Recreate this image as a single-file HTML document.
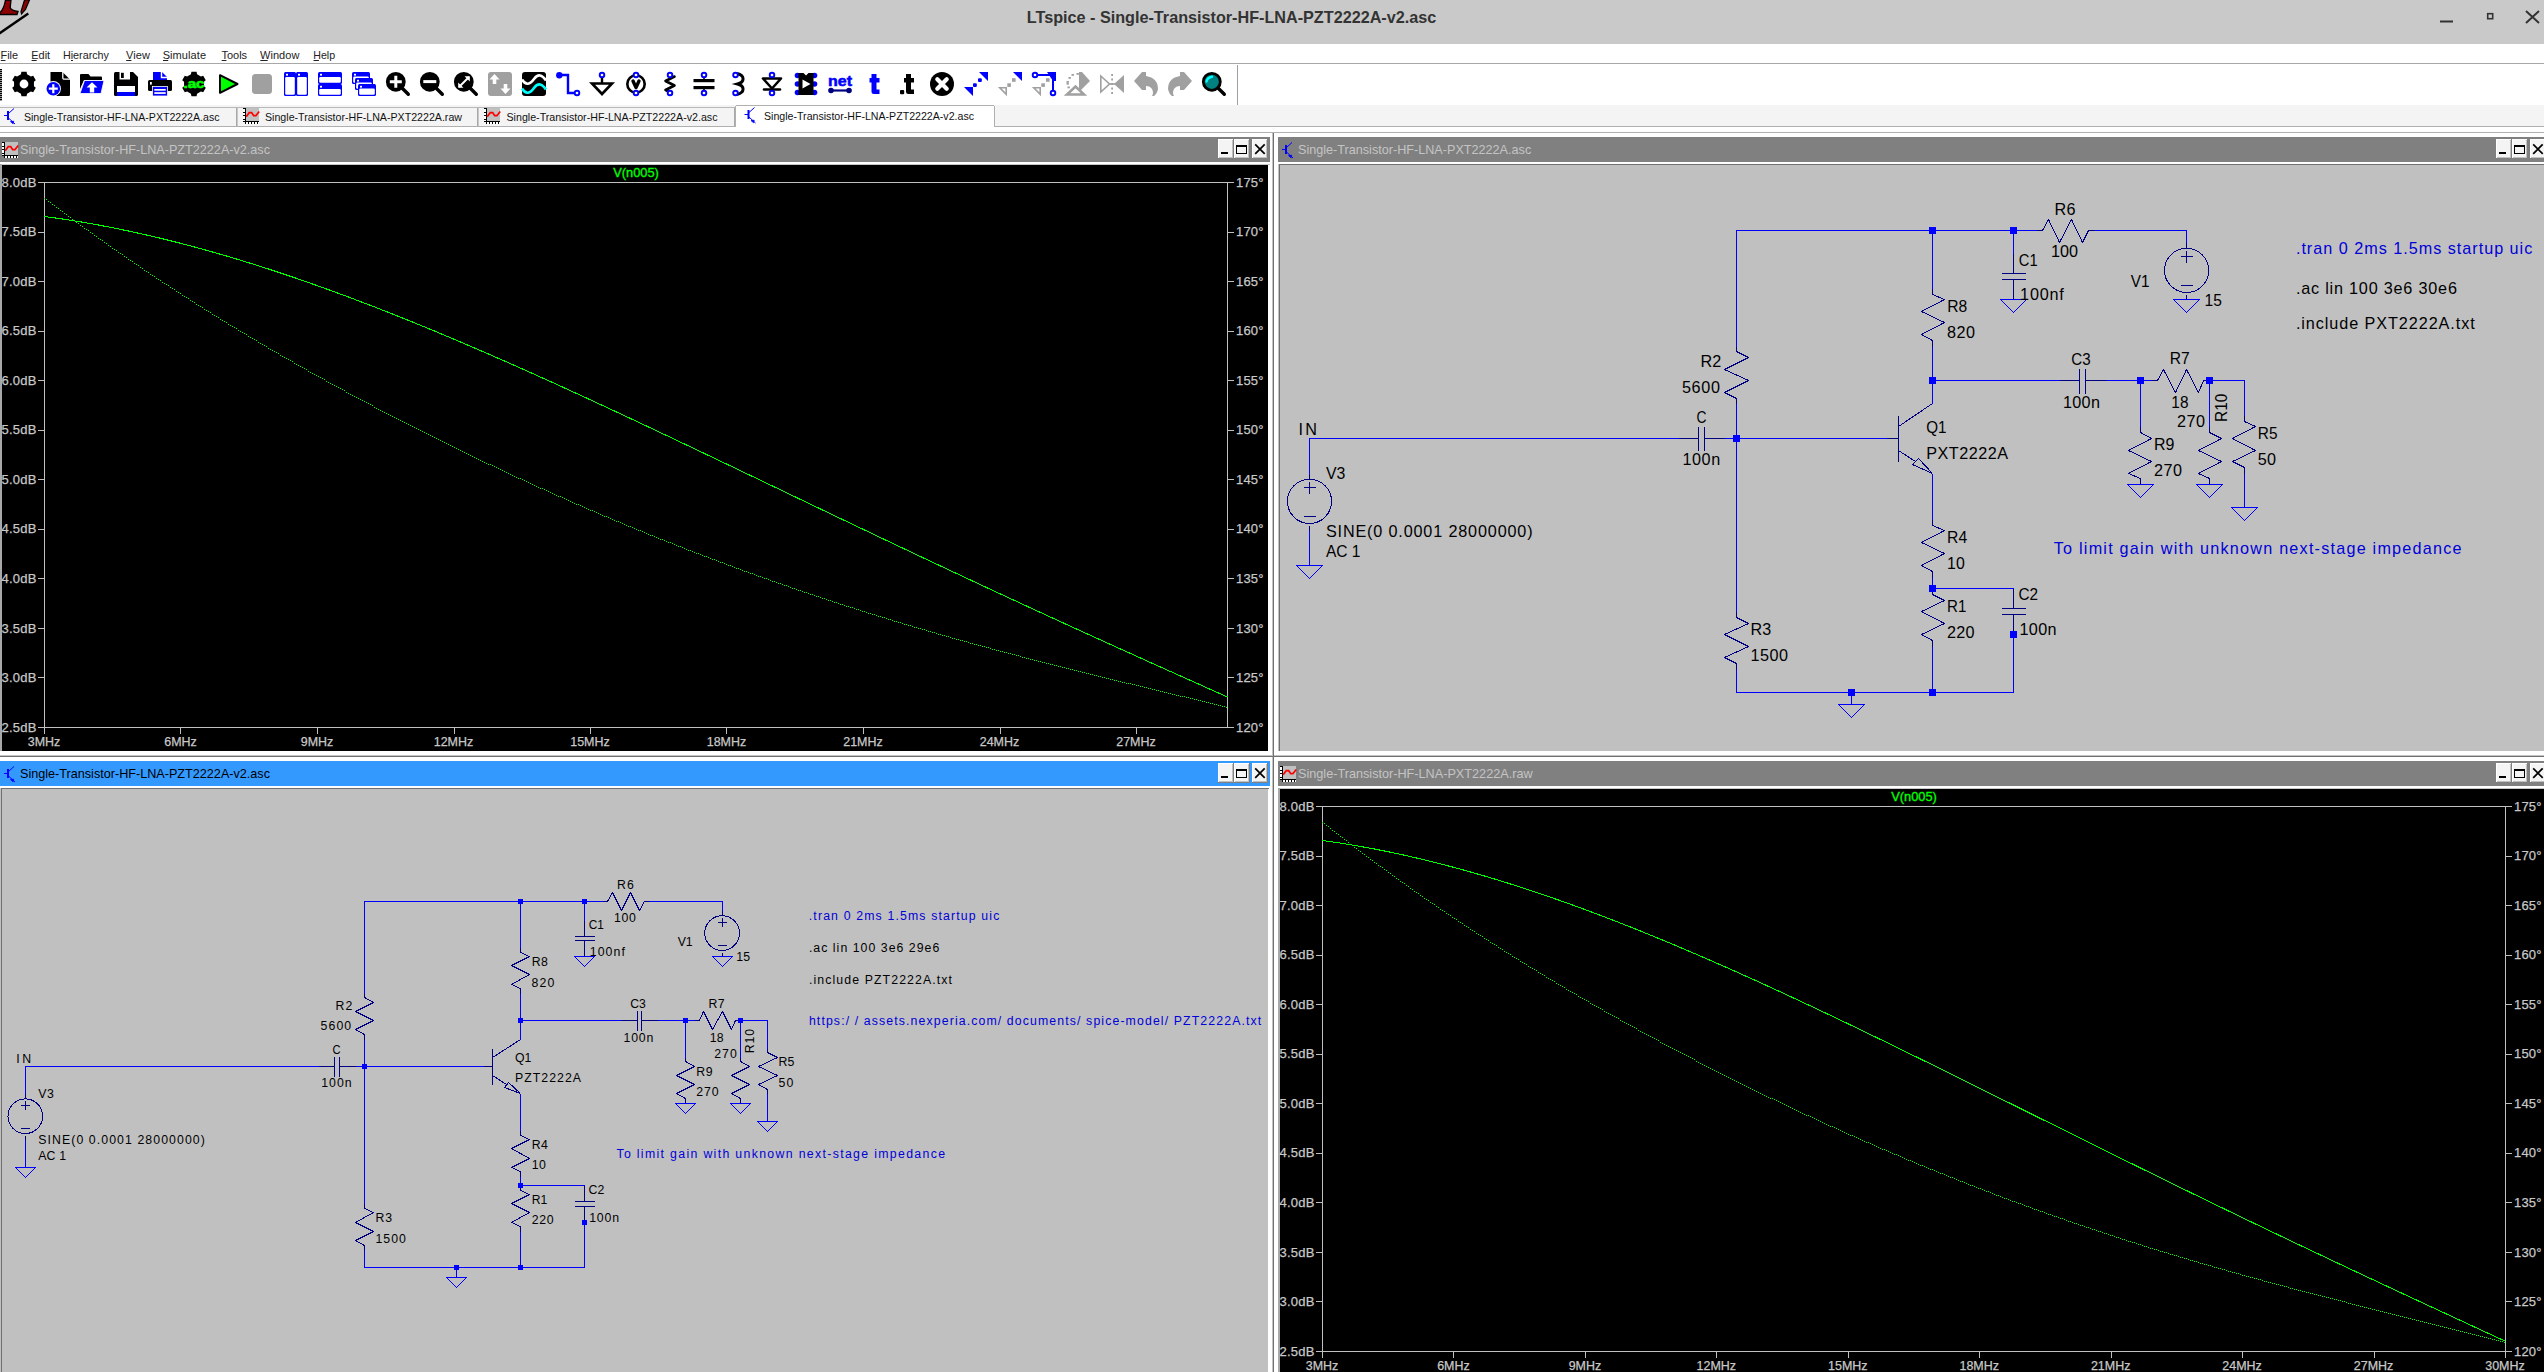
<!DOCTYPE html>
<html><head><meta charset="utf-8"><title>LTspice</title>
<style>
html,body{margin:0;padding:0;background:#fff;overflow:hidden}
body{width:2544px;height:1372px}
svg{display:block;font-family:"Liberation Sans",sans-serif}
text{white-space:pre}
</style></head><body>
<svg width="2544" height="1372" viewBox="0 0 2544 1372">
<rect x="0" y="0" width="2544" height="44" fill="#c9c9c9"/>
<path d="M5.5 0L11 0L10.2 7.5Q11 10.5 18 11.5L17 14.5H0V12.5Q4 9 5.5 0Z" fill="#8b0000" stroke="#000" stroke-width="1.3"/>
<path d="M24.5 0L29.5 0L25.5 9.5L21.5 14L21 11.5Z" fill="#8b0000" stroke="#000" stroke-width="1.2"/>
<path d="M28.3 13.4L-3 35" fill="none" stroke="#000" stroke-width="2.4"/>
<text x="1231.50" y="22.60" font-size="16.2" fill="#333" text-anchor="middle" font-weight="bold" textLength="409.40" lengthAdjust="spacingAndGlyphs">LTspice - Single-Transistor-HF-LNA-PZT2222A-v2.asc</text>
<rect x="2440" y="20.5" width="13" height="2" fill="#333"/>
<rect x="2487.7" y="13.7" width="5" height="5" fill="none" stroke="#333" stroke-width="1.6"/>
<path d="M2526 11L2539 23M2539 11L2526 23" stroke="#333" stroke-width="2" fill="none"/>
<rect x="0" y="44" width="2544" height="19" fill="#fff"/>
<rect x="0" y="63" width="2544" height="1" fill="#a8a8a8"/>
<text x="0.50" y="58.90" font-size="11" fill="#222" textLength="17.60" lengthAdjust="spacingAndGlyphs">File</text>
<rect x="0.8" y="60" width="4.67018" height="1" fill="#222"/>
<text x="31.30" y="58.90" font-size="11" fill="#222" textLength="18.80" lengthAdjust="spacingAndGlyphs">Edit</text>
<rect x="31.6" y="60" width="5.09431" height="1" fill="#222"/>
<text x="62.90" y="58.90" font-size="11" fill="#222" textLength="46.10" lengthAdjust="spacingAndGlyphs">Hierarchy</text>
<rect x="70.9813" y="60" width="2" height="1" fill="#222"/>
<text x="125.90" y="58.90" font-size="11" fill="#222" textLength="24.00" lengthAdjust="spacing">View</text>
<rect x="126.2" y="60" width="5.21367" height="1" fill="#222"/>
<text x="162.70" y="58.90" font-size="11" fill="#222" textLength="43.30" lengthAdjust="spacing">Simulate</text>
<rect x="163" y="60" width="5.19673" height="1" fill="#222"/>
<text x="221.40" y="58.90" font-size="11" fill="#222" textLength="25.70" lengthAdjust="spacing">Tools</text>
<rect x="221.7" y="60" width="4.70702" height="1" fill="#222"/>
<text x="260.00" y="58.90" font-size="11" fill="#222" textLength="39.40" lengthAdjust="spacing">Window</text>
<rect x="260.3" y="60" width="7.31969" height="1" fill="#222"/>
<text x="313.20" y="58.90" font-size="11" fill="#222" textLength="21.90" lengthAdjust="spacingAndGlyphs">Help</text>
<rect x="313.5" y="60" width="5.38332" height="1" fill="#222"/>
<rect x="0" y="64" width="2544" height="41" fill="#fff"/>
<rect x="0" y="69" width="2" height="1" fill="#000"/>
<rect x="0" y="70" width="2" height="1" fill="#999"/>
<rect x="0" y="71" width="2" height="1" fill="#000"/>
<rect x="0" y="72" width="2" height="1" fill="#999"/>
<rect x="0" y="73" width="2" height="1" fill="#000"/>
<rect x="0" y="74" width="2" height="1" fill="#999"/>
<rect x="0" y="75" width="2" height="1" fill="#000"/>
<rect x="0" y="76" width="2" height="1" fill="#999"/>
<rect x="0" y="77" width="2" height="1" fill="#000"/>
<rect x="0" y="78" width="2" height="1" fill="#999"/>
<rect x="0" y="79" width="2" height="1" fill="#000"/>
<rect x="0" y="80" width="2" height="1" fill="#999"/>
<rect x="0" y="81" width="2" height="1" fill="#000"/>
<rect x="0" y="82" width="2" height="1" fill="#999"/>
<rect x="0" y="83" width="2" height="1" fill="#000"/>
<rect x="0" y="84" width="2" height="1" fill="#999"/>
<rect x="0" y="85" width="2" height="1" fill="#000"/>
<rect x="0" y="86" width="2" height="1" fill="#999"/>
<rect x="0" y="87" width="2" height="1" fill="#000"/>
<rect x="0" y="88" width="2" height="1" fill="#999"/>
<rect x="0" y="89" width="2" height="1" fill="#000"/>
<rect x="0" y="90" width="2" height="1" fill="#999"/>
<rect x="0" y="91" width="2" height="1" fill="#000"/>
<rect x="0" y="92" width="2" height="1" fill="#999"/>
<rect x="0" y="93" width="2" height="1" fill="#000"/>
<rect x="0" y="94" width="2" height="1" fill="#999"/>
<rect x="0" y="95" width="2" height="1" fill="#000"/>
<rect x="0" y="96" width="2" height="1" fill="#999"/>
<rect x="0" y="97" width="2" height="1" fill="#000"/>
<rect x="0" y="98" width="2" height="1" fill="#999"/>
<rect x="0" y="99" width="2" height="1" fill="#000"/>
<rect x="0" y="100" width="2" height="1" fill="#999"/>
<rect x="1237" y="65" width="1" height="40" fill="#a0a0a0"/>
<rect x="0" y="105" width="2544" height="22" fill="#f4f4f4"/>
<rect x="0" y="126" width="2544" height="1" fill="#b0b0b0"/>
<rect x="0" y="127" width="2544" height="5" fill="#fff"/>
<rect x="0" y="107" width="735" height="1" fill="#b8b8b8"/>
<rect x="236" y="108" width="1" height="18" fill="#a8a8a8"/>
<rect x="237" y="108" width="1" height="18" fill="#c8c8c8"/>
<rect x="477" y="108" width="1" height="18" fill="#a8a8a8"/>
<rect x="478" y="108" width="1" height="18" fill="#c8c8c8"/>
<rect x="734" y="108" width="1" height="18" fill="#a8a8a8"/>
<rect x="735" y="108" width="1" height="18" fill="#c8c8c8"/>
<rect x="735" y="106" width="259" height="21" fill="#fff"/>
<rect x="736" y="105" width="258" height="1" fill="#b0b0b0"/>
<rect x="735" y="106" width="1" height="21" fill="#b0b0b0"/>
<rect x="994" y="106" width="1" height="21" fill="#b0b0b0"/>
<g transform="translate(3.5,108)" stroke="#00f" fill="none" stroke-width="1"><path d="M0.5 7.5H4"/><path d="M4.5 3V12" stroke-width="2"/><path d="M5 5.5L10.5 0.5"/><path d="M5 10L11.5 16"/><path d="M7 13.6L10.2 13.2L9.6 15.8Z" fill="#00f" stroke-width="0.8"/></g>
<text x="23.90" y="120.70" font-size="11" fill="#111" textLength="195.60" lengthAdjust="spacingAndGlyphs">Single-Transistor-HF-LNA-PXT2222A.asc</text>
<g transform="translate(243,108)" shape-rendering="crispEdges"><rect x="3" y="0" width="13" height="13" fill="#c0c0c0"/><rect x="0" y="0" width="2" height="13" fill="#fff"/><rect x="3" y="14" width="13" height="2" fill="#fff"/><rect x="2" y="0" width="1" height="14" fill="#000"/><rect x="0" y="13" width="16" height="1" fill="#000"/><rect x="0" y="0" width="2" height="1" fill="#000"/><rect x="0" y="4" width="2" height="1" fill="#000"/><rect x="0" y="7" width="2" height="1" fill="#000"/><rect x="0" y="11" width="2" height="1" fill="#000"/><rect x="2" y="14" width="1" height="2" fill="#000"/><rect x="5" y="14" width="1" height="2" fill="#000"/><rect x="8" y="14" width="1" height="2" fill="#000"/><rect x="11" y="14" width="1" height="2" fill="#000"/><rect x="14" y="14" width="1" height="2" fill="#000"/></g><path d="M246.2 116.7l3-4h2.5l2 3h2.2l3.3-4.3" fill="none" stroke="#f00" stroke-width="1.7"/>
<text x="265.00" y="120.70" font-size="11" fill="#111" textLength="197.00" lengthAdjust="spacingAndGlyphs">Single-Transistor-HF-LNA-PXT2222A.raw</text>
<g transform="translate(484,108)" shape-rendering="crispEdges"><rect x="3" y="0" width="13" height="13" fill="#c0c0c0"/><rect x="0" y="0" width="2" height="13" fill="#fff"/><rect x="3" y="14" width="13" height="2" fill="#fff"/><rect x="2" y="0" width="1" height="14" fill="#000"/><rect x="0" y="13" width="16" height="1" fill="#000"/><rect x="0" y="0" width="2" height="1" fill="#000"/><rect x="0" y="4" width="2" height="1" fill="#000"/><rect x="0" y="7" width="2" height="1" fill="#000"/><rect x="0" y="11" width="2" height="1" fill="#000"/><rect x="2" y="14" width="1" height="2" fill="#000"/><rect x="5" y="14" width="1" height="2" fill="#000"/><rect x="8" y="14" width="1" height="2" fill="#000"/><rect x="11" y="14" width="1" height="2" fill="#000"/><rect x="14" y="14" width="1" height="2" fill="#000"/></g><path d="M487.2 116.7l3-4h2.5l2 3h2.2l3.3-4.3" fill="none" stroke="#f00" stroke-width="1.7"/>
<text x="506.50" y="120.70" font-size="11" fill="#111" textLength="211.00" lengthAdjust="spacingAndGlyphs">Single-Transistor-HF-LNA-PZT2222A-v2.asc</text>
<g transform="translate(744,107)" stroke="#00f" fill="none" stroke-width="1"><path d="M0.5 7.5H4"/><path d="M4.5 3V12" stroke-width="2"/><path d="M5 5.5L10.5 0.5"/><path d="M5 10L11.5 16"/><path d="M7 13.6L10.2 13.2L9.6 15.8Z" fill="#00f" stroke-width="0.8"/></g>
<text x="764.00" y="119.60" font-size="11" fill="#111" textLength="210.00" lengthAdjust="spacingAndGlyphs">Single-Transistor-HF-LNA-PZT2222A-v2.asc</text>
<g transform="translate(12,72)"><path d="M8.95 2.27 L9.42 -0.13 L14.58 -0.13 L15.05 2.27 L18.90 4.49 L21.21 3.70 L23.79 8.17 L21.95 9.77 L21.95 14.23 L23.79 15.83 L21.21 20.30 L18.90 19.51 L15.05 21.73 L14.58 24.13 L9.42 24.13 L8.95 21.73 L5.10 19.51 L2.79 20.30 L0.21 15.83 L2.05 14.23 L2.05 9.77 L0.21 8.17 L2.79 3.70 L5.10 4.49Z M7.60 12.00 a4.40 4.40 0 1 0 8.80 0 a4.40 4.40 0 1 0 -8.80 0Z" fill="#000" fill-rule="evenodd"/></g>
<g transform="translate(46,72)"><path d="M4.5 0H16.5L24 7.5V22.5Q24 24 22.5 24H11Q4.5 20 4.5 13Z" fill="#000"/><path d="M16.8 0V5.7Q16.8 7.2 18.3 7.2H24" fill="none" stroke="#fff" stroke-width="1.3"/><circle cx="7.3" cy="16.7" r="7.6" fill="#fff"/><circle cx="7.3" cy="16.7" r="6.8" fill="#0000ff"/><path d="M7.3 12.2V21.2M2.8 16.7H11.8" stroke="#fff" stroke-width="2.2"/></g>
<g transform="translate(80,72)"><path d="M0 3Q0 2 1 2H8.5L10.5 4.5H21Q22 4.5 22 5.5V8H4L0 17Z" fill="#000"/><path d="M4.5 8.5H24L21 21.5H0Z" fill="#0000ff" stroke="#fff" stroke-width="0.8"/><path d="M12 10.2L17.5 15.5H14.2V20.5H9.8V15.5H6.5Z" fill="#fff"/></g>
<g transform="translate(114,72)"><path d="M1.5 0H19L24 5V22.5Q24 24 22.5 24H1.5Q0 24 0 22.5V1.5Q0 0 1.5 0Z" fill="#000"/><rect x="5.5" y="0" width="10.5" height="7.5" fill="#fff"/><rect x="7" y="0.8" width="2.8" height="5.2" fill="#000"/><rect x="3" y="14" width="18" height="10" fill="#fff"/><rect x="3" y="20" width="18" height="4" fill="#0000ff"/></g>
<g transform="translate(148,72)"><path d="M5 0H14L19 5V8H5Z" fill="#0000ff"/><path d="M13.5 0V5.5H19" fill="none" stroke="#fff" stroke-width="1.4"/><path d="M1.5 8H22.5Q24 8 24 9.5V17.5Q24 19 22.5 19H1.5Q0 19 0 17.5V9.5Q0 8 1.5 8Z" fill="#000"/><rect x="2" y="10" width="1.8" height="2.6" fill="#fff"/><rect x="4.5" y="14.5" width="15" height="9.5" fill="#0000ff" stroke="#fff" stroke-width="0.8"/><rect x="6.3" y="17" width="11.4" height="1.7" fill="#fff"/><rect x="6.3" y="20.2" width="11.4" height="1.7" fill="#fff"/></g>
<g transform="translate(182,72)"><path d="M8.95 2.27 L9.42 -0.13 L14.58 -0.13 L15.05 2.27 L18.90 4.49 L21.21 3.70 L23.79 8.17 L21.95 9.77 L21.95 14.23 L23.79 15.83 L21.21 20.30 L18.90 19.51 L15.05 21.73 L14.58 24.13 L9.42 24.13 L8.95 21.73 L5.10 19.51 L2.79 20.30 L0.21 15.83 L2.05 14.23 L2.05 9.77 L0.21 8.17 L2.79 3.70 L5.10 4.49Z" fill="#000"/><text x="12" y="16" font-size="12.5" font-weight="bold" fill="#0f0" text-anchor="middle" textLength="21" lengthAdjust="spacingAndGlyphs" stroke="#0f0" stroke-width="0.6">.ac</text></g>
<g transform="translate(216,72)"><path d="M4 3.2L21.5 12L4 20.8Z" fill="#0f0" stroke="#000" stroke-width="2" stroke-linejoin="round"/></g>
<g transform="translate(250,72)"><rect x="2" y="2" width="20" height="20" rx="3.5" fill="#a0a0a0"/></g>
<g transform="translate(284,72)"><rect x="0" y="0" width="12" height="24" fill="#0000ff" rx="1.5"/><rect x="1.2" y="5" width="9.6" height="17.8" fill="#fff" rx="1.2"/><rect x="2" y="1.8" width="2" height="1.8" fill="#fff"/><rect x="12" y="0" width="12" height="24" fill="#0000ff" rx="1.5"/><rect x="13.2" y="5" width="9.6" height="17.8" fill="#fff" rx="1.2"/><rect x="14" y="1.8" width="2" height="1.8" fill="#fff"/></g>
<g transform="translate(318,72)"><rect x="0" y="0" width="24" height="12" fill="#0000ff" rx="1.5"/><rect x="1.2" y="5" width="21.6" height="5.8" fill="#fff" rx="1.2"/><rect x="2" y="1.8" width="2" height="1.8" fill="#fff"/><rect x="0" y="12" width="24" height="12" fill="#0000ff" rx="1.5"/><rect x="1.2" y="17" width="21.6" height="5.8" fill="#fff" rx="1.2"/><rect x="2" y="13.8" width="2" height="1.8" fill="#fff"/></g>
<g transform="translate(352,72)"><rect x="0" y="0" width="18" height="12" fill="#0000ff" rx="1.5"/><rect x="1.2" y="4.5" width="15.6" height="6.3" fill="#fff" rx="1.2"/><rect x="2" y="1.8" width="2" height="1.8" fill="#fff"/><rect x="3" y="6" width="18" height="12" fill="#0000ff" rx="1.5"/><rect x="4.2" y="10.5" width="15.6" height="6.3" fill="#fff" rx="1.2"/><rect x="5" y="7.8" width="2" height="1.8" fill="#fff"/><rect x="6" y="12" width="18" height="12" fill="#0000ff" rx="1.5"/><rect x="7.2" y="16.5" width="15.6" height="6.3" fill="#fff" rx="1.2"/><rect x="8" y="13.8" width="2" height="1.8" fill="#fff"/></g>
<g transform="translate(386,72)"><circle cx="9.8" cy="9.8" r="8.5" fill="#000" stroke="#000" stroke-width="2.8"/><path d="M16 16L22.3 22.3" stroke="#000" stroke-width="3.4" stroke-linecap="round"/><path d="M9.8 3.8V15.8M3.8 9.8H15.8" stroke="#fff" stroke-width="3"/></g>
<g transform="translate(420,72)"><circle cx="9.8" cy="9.8" r="8.5" fill="#000" stroke="#000" stroke-width="2.8"/><path d="M16 16L22.3 22.3" stroke="#000" stroke-width="3.4" stroke-linecap="round"/><path d="M3.3 9.6H16.3" stroke="#fff" stroke-width="3"/></g>
<g transform="translate(454,72)"><circle cx="9.8" cy="9.8" r="8.5" fill="#000" stroke="#000" stroke-width="2.8"/><path d="M16 16L22.3 22.3" stroke="#000" stroke-width="3.4" stroke-linecap="round"/><path d="M5 15L15 5" stroke="#fff" stroke-width="2"/><path d="M10.5 4.2H15.8V9.5Z M4.2 10.5V15.8H9.5Z" fill="#fff"/></g>
<g transform="translate(488,72)"><rect x="0" y="0" width="24" height="24" rx="3" fill="#a0a0a0"/><path d="M6.5 2L11.5 7.5H8.3V12H4.7V7.5H1.5Z M17.5 22L22.5 16.5H19.3V12H15.7V16.5H12.5Z" fill="#fff"/></g>
<g transform="translate(522,72)"><rect x="0" y="0" width="24" height="24" rx="3" fill="#000"/><path d="M0 7.5C4 14 8 12.5 12 7 16 1.5 20 2.5 24 8.5" fill="none" stroke="#fff" stroke-width="2.6"/><path d="M0 16.5C4 23 8 21.5 12 16 16 10.5 20 11.5 24 17.5" fill="none" stroke="#0ff" stroke-width="2.6"/></g>
<g transform="translate(556,72)"><path d="M3 3H12V21H21" fill="none" stroke="#0000ff" stroke-width="2.4"/><circle cx="3.3" cy="3.3" r="3.2" fill="#0000ff"/><circle cx="21" cy="21" r="2.3" fill="#fff" stroke="#0000ff" stroke-width="1.9"/></g>
<g transform="translate(590,72)"><path d="M12 5V11" stroke="#000" stroke-width="2.4"/><path d="M2 11.5H22L12 22Z" fill="none" stroke="#000" stroke-width="2.6" stroke-linejoin="miter"/><circle cx="12" cy="3" r="2.3" fill="#fff" stroke="#0000ff" stroke-width="1.9"/></g>
<g transform="translate(624,72)"><circle cx="12" cy="12" r="8.7" fill="none" stroke="#000" stroke-width="2.6"/><path d="M9 9L12 15.5L15 9" fill="none" stroke="#000" stroke-width="3.4" stroke-linejoin="round" stroke-linecap="round"/><circle cx="12" cy="3" r="2.3" fill="#fff" stroke="#0000ff" stroke-width="1.9"/><circle cx="12" cy="21" r="2.3" fill="#fff" stroke="#0000ff" stroke-width="1.9"/></g>
<g transform="translate(658,72)"><path d="M16.5 4.5L7.5 9L16.5 13.5L7.5 18L12 20" fill="none" stroke="#000" stroke-width="2.6" stroke-linecap="round" stroke-linejoin="round"/><circle cx="12" cy="3" r="2.3" fill="#fff" stroke="#0000ff" stroke-width="1.9"/><circle cx="12" cy="21" r="2.3" fill="#fff" stroke="#0000ff" stroke-width="1.9"/></g>
<g transform="translate(692,72)"><path d="M12 5V8M12 16V19" stroke="#000" stroke-width="1.6"/><rect x="1.5" y="7" width="21" height="3.2" fill="#000"/><rect x="1.5" y="14" width="21" height="3.2" fill="#000"/><circle cx="12" cy="3" r="2.3" fill="#fff" stroke="#0000ff" stroke-width="1.9"/><circle cx="12" cy="21" r="2.3" fill="#fff" stroke="#0000ff" stroke-width="1.9"/></g>
<g transform="translate(726,72)"><path d="M11 1.5C19 3.5 19 10 11.5 12C19 14 19 20.5 11 22.5" fill="none" stroke="#000" stroke-width="3"/><circle cx="9.5" cy="3" r="2.3" fill="#fff" stroke="#0000ff" stroke-width="1.9"/><circle cx="9.5" cy="21" r="2.3" fill="#fff" stroke="#0000ff" stroke-width="1.9"/></g>
<g transform="translate(760,72)"><path d="M3 6.5H21L12 16.5Z" fill="none" stroke="#000" stroke-width="2.6" stroke-linejoin="round"/><path d="M4 17.5H20" stroke="#000" stroke-width="2.6" stroke-linecap="round"/><circle cx="12" cy="3" r="2.3" fill="#fff" stroke="#0000ff" stroke-width="1.9"/><circle cx="12" cy="21" r="2.3" fill="#fff" stroke="#0000ff" stroke-width="1.9"/></g>
<g transform="translate(794,72)"><circle cx="3.5" cy="3.5" r="2.8" fill="#0000ff"/><circle cx="3.5" cy="12" r="2.8" fill="#0000ff"/><circle cx="3.5" cy="20.5" r="2.8" fill="#0000ff"/><circle cx="20.5" cy="3.5" r="2.8" fill="#0000ff"/><circle cx="20.5" cy="12" r="2.8" fill="#0000ff"/><circle cx="20.5" cy="20.5" r="2.8" fill="#0000ff"/><path d="M4.5 1H9.5L12 3.5L14.5 1H19.5V23H4.5Z" fill="#000"/><path d="M8.5 7.5L16.5 12L8.5 16.5Z" fill="#fff"/></g>
<g transform="translate(828,72)"><text x="12" y="13.5" font-size="14" font-weight="bold" fill="#0000ff" text-anchor="middle" textLength="24" lengthAdjust="spacingAndGlyphs" stroke="#00f" stroke-width="0.5">net</text><path d="M3 18.5H21" stroke="#000080" stroke-width="2.2"/><circle cx="3" cy="18.5" r="2.8" fill="#000080"/><circle cx="21" cy="18.5" r="2.8" fill="#000080"/></g>
<g transform="translate(862,72)"><path d="M9.5 2H14.5V6H17.5V10.5H14.5V17.5H17.5V22H12Q9.5 22 9.5 19.5V10.5H7.5V6H9.5Z" fill="#0000ff"/></g>
<g transform="translate(896,72)"><path d="M10 2H15V6H18V10.5H15V17.5H18V22H12.5Q10 22 10 19.5V10.5H8V6H10Z" fill="#000"/><rect x="4" y="18" width="4.2" height="4.2" rx="1" fill="#000"/></g>
<g transform="translate(930,72)"><circle cx="12" cy="12" r="12" fill="#000"/><path d="M7.3 7.3L16.7 16.7M16.7 7.3L7.3 16.7" stroke="#fff" stroke-width="4.2" stroke-linecap="round"/></g>
<g transform="translate(964,72)"><path d="M15 0H24V9Z M0 15H9V24Z" fill="#0000ff"/><rect x="14" y="6.2" width="3.8" height="3.8" rx="1" fill="#0000ff"/><rect x="9" y="11.2" width="3.8" height="3.8" rx="1" fill="#0000ff"/></g>
<g transform="translate(998,72)"><path d="M15 0H24V9Z" fill="#0000ff"/><rect x="14" y="6.2" width="3.6" height="3.6" fill="#a0a0a0"/><rect x="9.3" y="11.3" width="3.6" height="3.6" fill="#a0a0a0"/><path d="M1.8 15.8H8.2V22.2Z" fill="none" stroke="#a0a0a0" stroke-width="1.6"/></g>
<g transform="translate(1032,72)"><path d="M3 3H21V21" fill="none" stroke="#0000ff" stroke-width="2"/><path d="M15 0H24V9H21Z" fill="#0000ff"/><rect x="14" y="6.2" width="3.6" height="3.6" fill="#a0a0a0"/><rect x="9.3" y="11.3" width="3.6" height="3.6" fill="#a0a0a0"/><path d="M1.8 15.8H8.2V22.2Z" fill="none" stroke="#a0a0a0" stroke-width="1.6"/><circle cx="3" cy="3" r="2.3" fill="#fff" stroke="#0000ff" stroke-width="1.9"/><circle cx="21" cy="21" r="2.3" fill="#fff" stroke="#0000ff" stroke-width="1.9"/></g>
<g transform="translate(1066,72)"><path d="M13 0H16L24 9L15 18H13Z" fill="#a0a0a0"/><path d="M1 22.5H18L9.5 14.5Z" fill="none" stroke="#a0a0a0" stroke-width="2.6"/><rect x="10.5" y="1" width="2.4" height="1.8" fill="#a0a0a0"/><rect x="5.5" y="2" width="2.4" height="1.8" fill="#a0a0a0"/><rect x="2.5" y="5" width="2.4" height="1.8" fill="#a0a0a0"/><rect x="0.5" y="9" width="2.4" height="1.8" fill="#a0a0a0"/><rect x="0.5" y="10.8" width="2.4" height="1.8" fill="#a0a0a0"/><rect x="1.5" y="14.5" width="2.4" height="1.8" fill="#a0a0a0"/></g>
<g transform="translate(1100,72)"><path d="M0.8 4L9.5 12L0.8 20Z" fill="none" stroke="#a0a0a0" stroke-width="1.6"/><path d="M24 3V21L14 12Z" fill="#a0a0a0"/><path d="M9 12H15" stroke="#a0a0a0" stroke-width="1.6"/><rect x="11.2" y="2" width="1.8" height="2" fill="#a0a0a0"/><rect x="11.2" y="6.5" width="1.8" height="2" fill="#a0a0a0"/><rect x="11.2" y="11" width="1.8" height="2" fill="#a0a0a0"/><rect x="11.2" y="15.5" width="1.8" height="2" fill="#a0a0a0"/><rect x="11.2" y="20" width="1.8" height="2" fill="#a0a0a0"/></g>
<g transform="translate(1134,72)"><path d="M8 0H12V4Q24 6 24 17Q23 22 20 24H18Q20 21 18 17Q16 14 12 14V18H8L0 9Z" fill="#a0a0a0"/></g>
<g transform="translate(1168,72)"><path d="M16 0H12V4Q0 6 0 17Q1 22 4 24H6Q4 21 6 17Q8 14 12 14V18H16L24 9Z" fill="#a0a0a0"/></g>
<g transform="translate(1202,72)"><circle cx="9.8" cy="9.8" r="8.5" fill="#008080" stroke="#000" stroke-width="2.8"/><path d="M16 16L22.3 22.3" stroke="#000" stroke-width="3.4" stroke-linecap="round"/><path d="M4.5 9.5Q5.5 5.5 10 4.8" fill="none" stroke="#0ff" stroke-width="2.4" stroke-linecap="round"/></g>
<rect x="0" y="132" width="2544" height="1240" fill="#fff"/>
<rect x="0" y="132" width="2544" height="1" fill="#b0b0b0"/>
<rect x="-4" y="133" width="1278" height="623" fill="#fff"/>
<rect x="0" y="137" width="1270" height="25" fill="#808080"/>
<rect x="0" y="164" width="1270" height="1" fill="#c8c8c8"/>
<rect x="0" y="164" width="2" height="587" fill="#a8a8a8"/>
<rect x="2" y="165" width="1266" height="586" fill="#000"/>
<rect x="1272" y="133" width="1" height="623" fill="#c4c4c4"/>
<rect x="1273" y="133" width="1" height="624" fill="#707070"/>
<rect x="-4" y="755" width="1277" height="1" fill="#c4c4c4"/>
<rect x="-4" y="756" width="1278" height="1" fill="#707070"/>
<g transform="translate(2,142)" shape-rendering="crispEdges"><rect x="3" y="0" width="13" height="13" fill="#c0c0c0"/><rect x="0" y="0" width="2" height="13" fill="#fff"/><rect x="3" y="14" width="13" height="2" fill="#fff"/><rect x="2" y="0" width="1" height="14" fill="#000"/><rect x="0" y="13" width="16" height="1" fill="#000"/><rect x="0" y="0" width="2" height="1" fill="#000"/><rect x="0" y="4" width="2" height="1" fill="#000"/><rect x="0" y="7" width="2" height="1" fill="#000"/><rect x="0" y="11" width="2" height="1" fill="#000"/><rect x="2" y="14" width="1" height="2" fill="#000"/><rect x="5" y="14" width="1" height="2" fill="#000"/><rect x="8" y="14" width="1" height="2" fill="#000"/><rect x="11" y="14" width="1" height="2" fill="#000"/><rect x="14" y="14" width="1" height="2" fill="#000"/></g><path d="M5.2 150.7l3-4h2.5l2 3h2.2l3.3-4.3" fill="none" stroke="#f00" stroke-width="1.7"/>
<text x="20.00" y="154.00" font-size="13.5" fill="#c4c4c4" textLength="250.00" lengthAdjust="spacingAndGlyphs">Single-Transistor-HF-LNA-PZT2222A-v2.asc</text>
<g transform="translate(1218,139)" shape-rendering="crispEdges"><rect x="0" y="0" width="16" height="20" fill="#f4f4f4"/><rect x="0" y="0" width="16" height="1" fill="#fff"/><rect x="0" y="0" width="1" height="20" fill="#fff"/><rect x="0" y="19" width="16" height="1" fill="#808080"/><rect x="15" y="0" width="1" height="20" fill="#808080"/><rect x="1" y="18" width="14" height="1" fill="#c0c0c0"/><rect x="14" y="1" width="1" height="18" fill="#c0c0c0"/><rect x="3" y="13" width="7" height="2" fill="#000"/></g>
<g transform="translate(1234,139)" shape-rendering="crispEdges"><rect x="0" y="0" width="16" height="20" fill="#f4f4f4"/><rect x="0" y="0" width="16" height="1" fill="#fff"/><rect x="0" y="0" width="1" height="20" fill="#fff"/><rect x="0" y="19" width="16" height="1" fill="#808080"/><rect x="15" y="0" width="1" height="20" fill="#808080"/><rect x="1" y="18" width="14" height="1" fill="#c0c0c0"/><rect x="14" y="1" width="1" height="18" fill="#c0c0c0"/><rect x="2" y="6" width="11" height="2" fill="#000"/><rect x="2" y="6" width="1" height="9" fill="#000"/><rect x="12" y="6" width="1" height="9" fill="#000"/><rect x="2" y="14" width="11" height="1" fill="#000"/></g>
<g transform="translate(1252,139)" shape-rendering="crispEdges"><rect x="0" y="0" width="16" height="20" fill="#f4f4f4"/><rect x="0" y="0" width="16" height="1" fill="#fff"/><rect x="0" y="0" width="1" height="20" fill="#fff"/><rect x="0" y="19" width="16" height="1" fill="#808080"/><rect x="15" y="0" width="1" height="20" fill="#808080"/><rect x="1" y="18" width="14" height="1" fill="#c0c0c0"/><rect x="14" y="1" width="1" height="18" fill="#c0c0c0"/></g><path d="M1255.2 144.3l9.5 9.5M1264.7 144.3l-9.5 9.5" stroke="#000" stroke-width="1.7" fill="none"/>
<rect x="1274" y="133" width="1278" height="623" fill="#fff"/>
<rect x="1278" y="137" width="1270" height="25" fill="#808080"/>
<rect x="1279" y="164" width="1268" height="1" fill="#707070"/>
<rect x="1278" y="164" width="1" height="587" fill="#c0c0c0"/>
<rect x="1279" y="164" width="1" height="587" fill="#707070"/>
<rect x="1280" y="165" width="1266" height="586" fill="#c0c0c0"/>
<rect x="2550" y="133" width="1" height="623" fill="#c4c4c4"/>
<rect x="2551" y="133" width="1" height="624" fill="#707070"/>
<rect x="1274" y="755" width="1277" height="1" fill="#c4c4c4"/>
<rect x="1274" y="756" width="1278" height="1" fill="#707070"/>
<g transform="translate(1281.5,142)" stroke="#00f" fill="none" stroke-width="1"><path d="M0.5 7.5H4"/><path d="M4.5 3V12" stroke-width="2"/><path d="M5 5.5L10.5 0.5"/><path d="M5 10L11.5 16"/><path d="M7 13.6L10.2 13.2L9.6 15.8Z" fill="#00f" stroke-width="0.8"/></g>
<text x="1298.00" y="154.00" font-size="13.5" fill="#c4c4c4" textLength="233.20" lengthAdjust="spacingAndGlyphs">Single-Transistor-HF-LNA-PXT2222A.asc</text>
<g transform="translate(2496,139)" shape-rendering="crispEdges"><rect x="0" y="0" width="16" height="20" fill="#f4f4f4"/><rect x="0" y="0" width="16" height="1" fill="#fff"/><rect x="0" y="0" width="1" height="20" fill="#fff"/><rect x="0" y="19" width="16" height="1" fill="#808080"/><rect x="15" y="0" width="1" height="20" fill="#808080"/><rect x="1" y="18" width="14" height="1" fill="#c0c0c0"/><rect x="14" y="1" width="1" height="18" fill="#c0c0c0"/><rect x="3" y="13" width="7" height="2" fill="#000"/></g>
<g transform="translate(2512,139)" shape-rendering="crispEdges"><rect x="0" y="0" width="16" height="20" fill="#f4f4f4"/><rect x="0" y="0" width="16" height="1" fill="#fff"/><rect x="0" y="0" width="1" height="20" fill="#fff"/><rect x="0" y="19" width="16" height="1" fill="#808080"/><rect x="15" y="0" width="1" height="20" fill="#808080"/><rect x="1" y="18" width="14" height="1" fill="#c0c0c0"/><rect x="14" y="1" width="1" height="18" fill="#c0c0c0"/><rect x="2" y="6" width="11" height="2" fill="#000"/><rect x="2" y="6" width="1" height="9" fill="#000"/><rect x="12" y="6" width="1" height="9" fill="#000"/><rect x="2" y="14" width="11" height="1" fill="#000"/></g>
<g transform="translate(2530,139)" shape-rendering="crispEdges"><rect x="0" y="0" width="16" height="20" fill="#f4f4f4"/><rect x="0" y="0" width="16" height="1" fill="#fff"/><rect x="0" y="0" width="1" height="20" fill="#fff"/><rect x="0" y="19" width="16" height="1" fill="#808080"/><rect x="15" y="0" width="1" height="20" fill="#808080"/><rect x="1" y="18" width="14" height="1" fill="#c0c0c0"/><rect x="14" y="1" width="1" height="18" fill="#c0c0c0"/></g><path d="M2533.2 144.3l9.5 9.5M2542.7 144.3l-9.5 9.5" stroke="#000" stroke-width="1.7" fill="none"/>
<rect x="-4" y="757" width="1278" height="629" fill="#fff"/>
<rect x="0" y="761" width="1270" height="25" fill="#3399ff"/>
<rect x="1" y="788" width="1268" height="1" fill="#707070"/>
<rect x="0" y="788" width="1" height="593" fill="#c0c0c0"/>
<rect x="1" y="788" width="1" height="593" fill="#707070"/>
<rect x="2" y="789" width="1266" height="592" fill="#c0c0c0"/>
<rect x="1272" y="757" width="1" height="629" fill="#c4c4c4"/>
<rect x="1273" y="757" width="1" height="630" fill="#707070"/>
<rect x="-4" y="1385" width="1277" height="1" fill="#c4c4c4"/>
<rect x="-4" y="1386" width="1278" height="1" fill="#707070"/>
<g transform="translate(3.5,766)" stroke="#00f" fill="none" stroke-width="1"><path d="M0.5 7.5H4"/><path d="M4.5 3V12" stroke-width="2"/><path d="M5 5.5L10.5 0.5"/><path d="M5 10L11.5 16"/><path d="M7 13.6L10.2 13.2L9.6 15.8Z" fill="#00f" stroke-width="0.8"/></g>
<text x="20.00" y="778.00" font-size="13.5" fill="#000" textLength="250.00" lengthAdjust="spacingAndGlyphs">Single-Transistor-HF-LNA-PZT2222A-v2.asc</text>
<g transform="translate(1218,763)" shape-rendering="crispEdges"><rect x="0" y="0" width="16" height="20" fill="#f4f4f4"/><rect x="0" y="0" width="16" height="1" fill="#fff"/><rect x="0" y="0" width="1" height="20" fill="#fff"/><rect x="0" y="19" width="16" height="1" fill="#808080"/><rect x="15" y="0" width="1" height="20" fill="#808080"/><rect x="1" y="18" width="14" height="1" fill="#c0c0c0"/><rect x="14" y="1" width="1" height="18" fill="#c0c0c0"/><rect x="3" y="13" width="7" height="2" fill="#000"/></g>
<g transform="translate(1234,763)" shape-rendering="crispEdges"><rect x="0" y="0" width="16" height="20" fill="#f4f4f4"/><rect x="0" y="0" width="16" height="1" fill="#fff"/><rect x="0" y="0" width="1" height="20" fill="#fff"/><rect x="0" y="19" width="16" height="1" fill="#808080"/><rect x="15" y="0" width="1" height="20" fill="#808080"/><rect x="1" y="18" width="14" height="1" fill="#c0c0c0"/><rect x="14" y="1" width="1" height="18" fill="#c0c0c0"/><rect x="2" y="6" width="11" height="2" fill="#000"/><rect x="2" y="6" width="1" height="9" fill="#000"/><rect x="12" y="6" width="1" height="9" fill="#000"/><rect x="2" y="14" width="11" height="1" fill="#000"/></g>
<g transform="translate(1252,763)" shape-rendering="crispEdges"><rect x="0" y="0" width="16" height="20" fill="#f4f4f4"/><rect x="0" y="0" width="16" height="1" fill="#fff"/><rect x="0" y="0" width="1" height="20" fill="#fff"/><rect x="0" y="19" width="16" height="1" fill="#808080"/><rect x="15" y="0" width="1" height="20" fill="#808080"/><rect x="1" y="18" width="14" height="1" fill="#c0c0c0"/><rect x="14" y="1" width="1" height="18" fill="#c0c0c0"/></g><path d="M1255.2 768.3l9.5 9.5M1264.7 768.3l-9.5 9.5" stroke="#000" stroke-width="1.7" fill="none"/>
<rect x="1274" y="757" width="1278" height="629" fill="#fff"/>
<rect x="1278" y="761" width="1270" height="25" fill="#808080"/>
<rect x="1278" y="788" width="1270" height="1" fill="#c8c8c8"/>
<rect x="1278" y="788" width="2" height="593" fill="#a8a8a8"/>
<rect x="1280" y="789" width="1266" height="592" fill="#000"/>
<rect x="2550" y="757" width="1" height="629" fill="#c4c4c4"/>
<rect x="2551" y="757" width="1" height="630" fill="#707070"/>
<rect x="1274" y="1385" width="1277" height="1" fill="#c4c4c4"/>
<rect x="1274" y="1386" width="1278" height="1" fill="#707070"/>
<g transform="translate(1280,766)" shape-rendering="crispEdges"><rect x="3" y="0" width="13" height="13" fill="#c0c0c0"/><rect x="0" y="0" width="2" height="13" fill="#fff"/><rect x="3" y="14" width="13" height="2" fill="#fff"/><rect x="2" y="0" width="1" height="14" fill="#000"/><rect x="0" y="13" width="16" height="1" fill="#000"/><rect x="0" y="0" width="2" height="1" fill="#000"/><rect x="0" y="4" width="2" height="1" fill="#000"/><rect x="0" y="7" width="2" height="1" fill="#000"/><rect x="0" y="11" width="2" height="1" fill="#000"/><rect x="2" y="14" width="1" height="2" fill="#000"/><rect x="5" y="14" width="1" height="2" fill="#000"/><rect x="8" y="14" width="1" height="2" fill="#000"/><rect x="11" y="14" width="1" height="2" fill="#000"/><rect x="14" y="14" width="1" height="2" fill="#000"/></g><path d="M1283.2 774.7l3-4h2.5l2 3h2.2l3.3-4.3" fill="none" stroke="#f00" stroke-width="1.7"/>
<text x="1298.00" y="778.00" font-size="13.5" fill="#c4c4c4" textLength="234.60" lengthAdjust="spacingAndGlyphs">Single-Transistor-HF-LNA-PXT2222A.raw</text>
<g transform="translate(2496,763)" shape-rendering="crispEdges"><rect x="0" y="0" width="16" height="20" fill="#f4f4f4"/><rect x="0" y="0" width="16" height="1" fill="#fff"/><rect x="0" y="0" width="1" height="20" fill="#fff"/><rect x="0" y="19" width="16" height="1" fill="#808080"/><rect x="15" y="0" width="1" height="20" fill="#808080"/><rect x="1" y="18" width="14" height="1" fill="#c0c0c0"/><rect x="14" y="1" width="1" height="18" fill="#c0c0c0"/><rect x="3" y="13" width="7" height="2" fill="#000"/></g>
<g transform="translate(2512,763)" shape-rendering="crispEdges"><rect x="0" y="0" width="16" height="20" fill="#f4f4f4"/><rect x="0" y="0" width="16" height="1" fill="#fff"/><rect x="0" y="0" width="1" height="20" fill="#fff"/><rect x="0" y="19" width="16" height="1" fill="#808080"/><rect x="15" y="0" width="1" height="20" fill="#808080"/><rect x="1" y="18" width="14" height="1" fill="#c0c0c0"/><rect x="14" y="1" width="1" height="18" fill="#c0c0c0"/><rect x="2" y="6" width="11" height="2" fill="#000"/><rect x="2" y="6" width="1" height="9" fill="#000"/><rect x="12" y="6" width="1" height="9" fill="#000"/><rect x="2" y="14" width="11" height="1" fill="#000"/></g>
<g transform="translate(2530,763)" shape-rendering="crispEdges"><rect x="0" y="0" width="16" height="20" fill="#f4f4f4"/><rect x="0" y="0" width="16" height="1" fill="#fff"/><rect x="0" y="0" width="1" height="20" fill="#fff"/><rect x="0" y="19" width="16" height="1" fill="#808080"/><rect x="15" y="0" width="1" height="20" fill="#808080"/><rect x="1" y="18" width="14" height="1" fill="#c0c0c0"/><rect x="14" y="1" width="1" height="18" fill="#c0c0c0"/></g><path d="M2533.2 768.3l9.5 9.5M2542.7 768.3l-9.5 9.5" stroke="#000" stroke-width="1.7" fill="none"/>
<g shape-rendering="crispEdges">
<rect x="38" y="182" width="1196" height="1" fill="#c0c0c0"/>
<rect x="38" y="727" width="1196" height="1" fill="#c0c0c0"/>
<rect x="44" y="182" width="1" height="546" fill="#c0c0c0"/>
<rect x="1227" y="182" width="1" height="546" fill="#c0c0c0"/>
<rect x="38" y="232" width="7" height="1" fill="#c0c0c0"/>
<rect x="1227" y="232" width="7" height="1" fill="#c0c0c0"/>
<rect x="38" y="281" width="7" height="1" fill="#c0c0c0"/>
<rect x="1227" y="281" width="7" height="1" fill="#c0c0c0"/>
<rect x="38" y="331" width="7" height="1" fill="#c0c0c0"/>
<rect x="1227" y="331" width="7" height="1" fill="#c0c0c0"/>
<rect x="38" y="380" width="7" height="1" fill="#c0c0c0"/>
<rect x="1227" y="380" width="7" height="1" fill="#c0c0c0"/>
<rect x="38" y="430" width="7" height="1" fill="#c0c0c0"/>
<rect x="1227" y="430" width="7" height="1" fill="#c0c0c0"/>
<rect x="38" y="479" width="7" height="1" fill="#c0c0c0"/>
<rect x="1227" y="479" width="7" height="1" fill="#c0c0c0"/>
<rect x="38" y="529" width="7" height="1" fill="#c0c0c0"/>
<rect x="1227" y="529" width="7" height="1" fill="#c0c0c0"/>
<rect x="38" y="578" width="7" height="1" fill="#c0c0c0"/>
<rect x="1227" y="578" width="7" height="1" fill="#c0c0c0"/>
<rect x="38" y="628" width="7" height="1" fill="#c0c0c0"/>
<rect x="1227" y="628" width="7" height="1" fill="#c0c0c0"/>
<rect x="38" y="677" width="7" height="1" fill="#c0c0c0"/>
<rect x="1227" y="677" width="7" height="1" fill="#c0c0c0"/>
<rect x="44" y="727" width="1" height="7" fill="#c0c0c0"/>
<rect x="180" y="727" width="1" height="7" fill="#c0c0c0"/>
<rect x="317" y="727" width="1" height="7" fill="#c0c0c0"/>
<rect x="454" y="727" width="1" height="7" fill="#c0c0c0"/>
<rect x="590" y="727" width="1" height="7" fill="#c0c0c0"/>
<rect x="726" y="727" width="1" height="7" fill="#c0c0c0"/>
<rect x="863" y="727" width="1" height="7" fill="#c0c0c0"/>
<rect x="1000" y="727" width="1" height="7" fill="#c0c0c0"/>
<rect x="1136" y="727" width="1" height="7" fill="#c0c0c0"/>
</g>
<text x="36.50" y="186.60" font-size="13" fill="#c8c8c8" text-anchor="end" textLength="35.00" lengthAdjust="spacing" stroke="#c8c8c8" stroke-width="0.25">8.0dB</text>
<text x="1236.00" y="186.60" font-size="13" fill="#c8c8c8" textLength="27.50" lengthAdjust="spacing" stroke="#c8c8c8" stroke-width="0.25">175°</text>
<text x="36.50" y="236.15" font-size="13" fill="#c8c8c8" text-anchor="end" textLength="35.00" lengthAdjust="spacing" stroke="#c8c8c8" stroke-width="0.25">7.5dB</text>
<text x="1236.00" y="236.15" font-size="13" fill="#c8c8c8" textLength="27.50" lengthAdjust="spacing" stroke="#c8c8c8" stroke-width="0.25">170°</text>
<text x="36.50" y="285.69" font-size="13" fill="#c8c8c8" text-anchor="end" textLength="35.00" lengthAdjust="spacing" stroke="#c8c8c8" stroke-width="0.25">7.0dB</text>
<text x="1236.00" y="285.69" font-size="13" fill="#c8c8c8" textLength="27.50" lengthAdjust="spacing" stroke="#c8c8c8" stroke-width="0.25">165°</text>
<text x="36.50" y="335.24" font-size="13" fill="#c8c8c8" text-anchor="end" textLength="35.00" lengthAdjust="spacing" stroke="#c8c8c8" stroke-width="0.25">6.5dB</text>
<text x="1236.00" y="335.24" font-size="13" fill="#c8c8c8" textLength="27.50" lengthAdjust="spacing" stroke="#c8c8c8" stroke-width="0.25">160°</text>
<text x="36.50" y="384.78" font-size="13" fill="#c8c8c8" text-anchor="end" textLength="35.00" lengthAdjust="spacing" stroke="#c8c8c8" stroke-width="0.25">6.0dB</text>
<text x="1236.00" y="384.78" font-size="13" fill="#c8c8c8" textLength="27.50" lengthAdjust="spacing" stroke="#c8c8c8" stroke-width="0.25">155°</text>
<text x="36.50" y="434.33" font-size="13" fill="#c8c8c8" text-anchor="end" textLength="35.00" lengthAdjust="spacing" stroke="#c8c8c8" stroke-width="0.25">5.5dB</text>
<text x="1236.00" y="434.33" font-size="13" fill="#c8c8c8" textLength="27.50" lengthAdjust="spacing" stroke="#c8c8c8" stroke-width="0.25">150°</text>
<text x="36.50" y="483.87" font-size="13" fill="#c8c8c8" text-anchor="end" textLength="35.00" lengthAdjust="spacing" stroke="#c8c8c8" stroke-width="0.25">5.0dB</text>
<text x="1236.00" y="483.87" font-size="13" fill="#c8c8c8" textLength="27.50" lengthAdjust="spacing" stroke="#c8c8c8" stroke-width="0.25">145°</text>
<text x="36.50" y="533.42" font-size="13" fill="#c8c8c8" text-anchor="end" textLength="35.00" lengthAdjust="spacing" stroke="#c8c8c8" stroke-width="0.25">4.5dB</text>
<text x="1236.00" y="533.42" font-size="13" fill="#c8c8c8" textLength="27.50" lengthAdjust="spacing" stroke="#c8c8c8" stroke-width="0.25">140°</text>
<text x="36.50" y="582.96" font-size="13" fill="#c8c8c8" text-anchor="end" textLength="35.00" lengthAdjust="spacing" stroke="#c8c8c8" stroke-width="0.25">4.0dB</text>
<text x="1236.00" y="582.96" font-size="13" fill="#c8c8c8" textLength="27.50" lengthAdjust="spacing" stroke="#c8c8c8" stroke-width="0.25">135°</text>
<text x="36.50" y="632.51" font-size="13" fill="#c8c8c8" text-anchor="end" textLength="35.00" lengthAdjust="spacing" stroke="#c8c8c8" stroke-width="0.25">3.5dB</text>
<text x="1236.00" y="632.51" font-size="13" fill="#c8c8c8" textLength="27.50" lengthAdjust="spacing" stroke="#c8c8c8" stroke-width="0.25">130°</text>
<text x="36.50" y="682.05" font-size="13" fill="#c8c8c8" text-anchor="end" textLength="35.00" lengthAdjust="spacing" stroke="#c8c8c8" stroke-width="0.25">3.0dB</text>
<text x="1236.00" y="682.05" font-size="13" fill="#c8c8c8" textLength="27.50" lengthAdjust="spacing" stroke="#c8c8c8" stroke-width="0.25">125°</text>
<text x="36.50" y="731.60" font-size="13" fill="#c8c8c8" text-anchor="end" textLength="35.00" lengthAdjust="spacing" stroke="#c8c8c8" stroke-width="0.25">2.5dB</text>
<text x="1236.00" y="731.60" font-size="13" fill="#c8c8c8" textLength="27.50" lengthAdjust="spacing" stroke="#c8c8c8" stroke-width="0.25">120°</text>
<text x="44.00" y="746.30" font-size="13" fill="#c8c8c8" text-anchor="middle" textLength="32.50" lengthAdjust="spacingAndGlyphs" stroke="#c8c8c8" stroke-width="0.25">3MHz</text>
<text x="180.50" y="746.30" font-size="13" fill="#c8c8c8" text-anchor="middle" textLength="32.50" lengthAdjust="spacingAndGlyphs" stroke="#c8c8c8" stroke-width="0.25">6MHz</text>
<text x="317.00" y="746.30" font-size="13" fill="#c8c8c8" text-anchor="middle" textLength="32.50" lengthAdjust="spacingAndGlyphs" stroke="#c8c8c8" stroke-width="0.25">9MHz</text>
<text x="453.50" y="746.30" font-size="13" fill="#c8c8c8" text-anchor="middle" textLength="39.50" lengthAdjust="spacingAndGlyphs" stroke="#c8c8c8" stroke-width="0.25">12MHz</text>
<text x="590.00" y="746.30" font-size="13" fill="#c8c8c8" text-anchor="middle" textLength="39.50" lengthAdjust="spacingAndGlyphs" stroke="#c8c8c8" stroke-width="0.25">15MHz</text>
<text x="726.50" y="746.30" font-size="13" fill="#c8c8c8" text-anchor="middle" textLength="39.50" lengthAdjust="spacingAndGlyphs" stroke="#c8c8c8" stroke-width="0.25">18MHz</text>
<text x="863.00" y="746.30" font-size="13" fill="#c8c8c8" text-anchor="middle" textLength="39.50" lengthAdjust="spacingAndGlyphs" stroke="#c8c8c8" stroke-width="0.25">21MHz</text>
<text x="999.50" y="746.30" font-size="13" fill="#c8c8c8" text-anchor="middle" textLength="39.50" lengthAdjust="spacingAndGlyphs" stroke="#c8c8c8" stroke-width="0.25">24MHz</text>
<text x="1136.00" y="746.30" font-size="13" fill="#c8c8c8" text-anchor="middle" textLength="39.50" lengthAdjust="spacingAndGlyphs" stroke="#c8c8c8" stroke-width="0.25">27MHz</text>
<text x="636.00" y="177.00" font-size="13.5" fill="#0f0" text-anchor="middle" textLength="45.70" lengthAdjust="spacingAndGlyphs" stroke="#0f0" stroke-width="0.35">V(n005)</text>
<path d="M44.5 216.5 L45.5 216.7 L46.5 216.8 L47.5 216.9 L48.5 217.1 L49.5 217.2 L50.5 217.3 L51.5 217.5 L52.5 217.6 L53.5 217.7 L54.5 217.9 L55.5 218.0 L56.5 218.2 L57.5 218.3 L58.5 218.5 L59.5 218.6 L60.5 218.7 L61.5 218.9 L62.5 219.0 L63.5 219.2 L64.5 219.3 L65.5 219.5 L66.5 219.6 L67.5 219.8 L68.5 220.0 L69.5 220.1 L70.5 220.3 L71.5 220.4 L72.5 220.6 L73.5 220.7 L74.5 220.9 L75.5 221.1 L76.5 221.2 L77.5 221.4 L78.5 221.6 L79.5 221.7 L80.5 221.9 L81.5 222.0 L82.5 222.2 L83.5 222.4 L84.5 222.6 L85.5 222.7 L86.5 222.9 L87.5 223.1 L88.5 223.2 L89.5 223.4 L90.5 223.6 L91.5 223.8 L92.5 224.0 L93.5 224.1 L94.5 224.3 L95.5 224.5 L96.5 224.7 L97.5 224.9 L98.5 225.0 L99.5 225.2 L100.5 225.4 L101.5 225.6 L102.5 225.8 L103.5 226.0 L104.5 226.2 L105.5 226.4 L106.5 226.6 L107.5 226.7 L108.5 226.9 L109.5 227.1 L110.5 227.3 L111.5 227.5 L112.5 227.7 L113.5 227.9 L114.5 228.1 L115.5 228.3 L116.5 228.5 L117.5 228.7 L118.5 228.9 L119.5 229.1 L120.5 229.3 L121.5 229.5 L122.5 229.8 L123.5 230.0 L124.5 230.2 L125.5 230.4 L126.5 230.6 L127.5 230.8 L128.5 231.0 L129.5 231.2 L130.5 231.4 L131.5 231.7 L132.5 231.9 L133.5 232.1 L134.5 232.3 L135.5 232.5 L136.5 232.7 L137.5 233.0 L138.5 233.2 L139.5 233.4 L140.5 233.6 L141.5 233.9 L142.5 234.1 L143.5 234.3 L144.5 234.5 L145.5 234.8 L146.5 235.0 L147.5 235.2 L148.5 235.5 L149.5 235.7 L150.5 235.9 L151.5 236.1 L152.5 236.4 L153.5 236.6 L154.5 236.9 L155.5 237.1 L156.5 237.3 L157.5 237.6 L158.5 237.8 L159.5 238.0 L160.5 238.3 L161.5 238.5 L162.5 238.8 L163.5 239.0 L164.5 239.3 L165.5 239.5 L166.5 239.7 L167.5 240.0 L168.5 240.2 L169.5 240.5 L170.5 240.7 L171.5 241.0 L172.5 241.2 L173.5 241.5 L174.5 241.7 L175.5 242.0 L176.5 242.3 L177.5 242.5 L178.5 242.8 L179.5 243.0 L180.5 243.3 L181.5 243.5 L182.5 243.8 L183.5 244.1 L184.5 244.3 L185.5 244.6 L186.5 244.8 L187.5 245.1 L188.5 245.4 L189.5 245.6 L190.5 245.9 L191.5 246.2 L192.5 246.4 L193.5 246.7 L194.5 247.0 L195.5 247.3 L196.5 247.5 L197.5 247.8 L198.5 248.1 L199.5 248.3 L200.5 248.6 L201.5 248.9 L202.5 249.2 L203.5 249.4 L204.5 249.7 L205.5 250.0 L206.5 250.3 L207.5 250.6 L208.5 250.8 L209.5 251.1 L210.5 251.4 L211.5 251.7 L212.5 252.0 L213.5 252.3 L214.5 252.5 L215.5 252.8 L216.5 253.1 L217.5 253.4 L218.5 253.7 L219.5 254.0 L220.5 254.3 L221.5 254.6 L222.5 254.8 L223.5 255.1 L224.5 255.4 L225.5 255.7 L226.5 256.0 L227.5 256.3 L228.5 256.6 L229.5 256.9 L230.5 257.2 L231.5 257.5 L232.5 257.8 L233.5 258.1 L234.5 258.4 L235.5 258.7 L236.5 259.0 L237.5 259.3 L238.5 259.6 L239.5 259.9 L240.5 260.2 L241.5 260.5 L242.5 260.8 L243.5 261.1 L244.5 261.4 L245.5 261.8 L246.5 262.1 L247.5 262.4 L248.5 262.7 L249.5 263.0 L250.5 263.3 L251.5 263.6 L252.5 263.9 L253.5 264.2 L254.5 264.6 L255.5 264.9 L256.5 265.2 L257.5 265.5 L258.5 265.8 L259.5 266.1 L260.5 266.5 L261.5 266.8 L262.5 267.1 L263.5 267.4 L264.5 267.7 L265.5 268.1 L266.5 268.4 L267.5 268.7 L268.5 269.0 L269.5 269.4 L270.5 269.7 L271.5 270.0 L272.5 270.3 L273.5 270.7 L274.5 271.0 L275.5 271.3 L276.5 271.7 L277.5 272.0 L278.5 272.3 L279.5 272.6 L280.5 273.0 L281.5 273.3 L282.5 273.6 L283.5 274.0 L284.5 274.3 L285.5 274.7 L286.5 275.0 L287.5 275.3 L288.5 275.7 L289.5 276.0 L290.5 276.3 L291.5 276.7 L292.5 277.0 L293.5 277.4 L294.5 277.7 L295.5 278.0 L296.5 278.4 L297.5 278.7 L298.5 279.1 L299.5 279.4 L300.5 279.8 L301.5 280.1 L302.5 280.5 L303.5 280.8 L304.5 281.2 L305.5 281.5 L306.5 281.9 L307.5 282.2 L308.5 282.6 L309.5 282.9 L310.5 283.3 L311.5 283.6 L312.5 284.0 L313.5 284.3 L314.5 284.7 L315.5 285.0 L316.5 285.4 L317.5 285.7 L318.5 286.1 L319.5 286.4 L320.5 286.8 L321.5 287.2 L322.5 287.5 L323.5 287.9 L324.5 288.2 L325.5 288.6 L326.5 289.0 L327.5 289.3 L328.5 289.7 L329.5 290.0 L330.5 290.4 L331.5 290.8 L332.5 291.1 L333.5 291.5 L334.5 291.9 L335.5 292.2 L336.5 292.6 L337.5 293.0 L338.5 293.3 L339.5 293.7 L340.5 294.1 L341.5 294.4 L342.5 294.8 L343.5 295.2 L344.5 295.6 L345.5 295.9 L346.5 296.3 L347.5 296.7 L348.5 297.0 L349.5 297.4 L350.5 297.8 L351.5 298.2 L352.5 298.5 L353.5 298.9 L354.5 299.3 L355.5 299.7 L356.5 300.1 L357.5 300.4 L358.5 300.8 L359.5 301.2 L360.5 301.6 L361.5 302.0 L362.5 302.3 L363.5 302.7 L364.5 303.1 L365.5 303.5 L366.5 303.9 L367.5 304.2 L368.5 304.6 L369.5 305.0 L370.5 305.4 L371.5 305.8 L372.5 306.2 L373.5 306.6 L374.5 306.9 L375.5 307.3 L376.5 307.7 L377.5 308.1 L378.5 308.5 L379.5 308.9 L380.5 309.3 L381.5 309.7 L382.5 310.1 L383.5 310.5 L384.5 310.8 L385.5 311.2 L386.5 311.6 L387.5 312.0 L388.5 312.4 L389.5 312.8 L390.5 313.2 L391.5 313.6 L392.5 314.0 L393.5 314.4 L394.5 314.8 L395.5 315.2 L396.5 315.6 L397.5 316.0 L398.5 316.4 L399.5 316.8 L400.5 317.2 L401.5 317.6 L402.5 318.0 L403.5 318.4 L404.5 318.8 L405.5 319.2 L406.5 319.6 L407.5 320.0 L408.5 320.4 L409.5 320.8 L410.5 321.2 L411.5 321.6 L412.5 322.0 L413.5 322.4 L414.5 322.8 L415.5 323.2 L416.5 323.6 L417.5 324.1 L418.5 324.5 L419.5 324.9 L420.5 325.3 L421.5 325.7 L422.5 326.1 L423.5 326.5 L424.5 326.9 L425.5 327.3 L426.5 327.7 L427.5 328.2 L428.5 328.6 L429.5 329.0 L430.5 329.4 L431.5 329.8 L432.5 330.2 L433.5 330.6 L434.5 331.0 L435.5 331.5 L436.5 331.9 L437.5 332.3 L438.5 332.7 L439.5 333.1 L440.5 333.5 L441.5 334.0 L442.5 334.4 L443.5 334.8 L444.5 335.2 L445.5 335.6 L446.5 336.1 L447.5 336.5 L448.5 336.9 L449.5 337.3 L450.5 337.7 L451.5 338.2 L452.5 338.6 L453.5 339.0 L454.5 339.4 L455.5 339.9 L456.5 340.3 L457.5 340.7 L458.5 341.1 L459.5 341.6 L460.5 342.0 L461.5 342.4 L462.5 342.8 L463.5 343.3 L464.5 343.7 L465.5 344.1 L466.5 344.5 L467.5 345.0 L468.5 345.4 L469.5 345.8 L470.5 346.2 L471.5 346.7 L472.5 347.1 L473.5 347.5 L474.5 348.0 L475.5 348.4 L476.5 348.8 L477.5 349.3 L478.5 349.7 L479.5 350.1 L480.5 350.6 L481.5 351.0 L482.5 351.4 L483.5 351.9 L484.5 352.3 L485.5 352.7 L486.5 353.2 L487.5 353.6 L488.5 354.0 L489.5 354.5 L490.5 354.9 L491.5 355.3 L492.5 355.8 L493.5 356.2 L494.5 356.6 L495.5 357.1 L496.5 357.5 L497.5 358.0 L498.5 358.4 L499.5 358.8 L500.5 359.3 L501.5 359.7 L502.5 360.1 L503.5 360.6 L504.5 361.0 L505.5 361.5 L506.5 361.9 L507.5 362.3 L508.5 362.8 L509.5 363.2 L510.5 363.7 L511.5 364.1 L512.5 364.6 L513.5 365.0 L514.5 365.4 L515.5 365.9 L516.5 366.3 L517.5 366.8 L518.5 367.2 L519.5 367.7 L520.5 368.1 L521.5 368.6 L522.5 369.0 L523.5 369.4 L524.5 369.9 L525.5 370.3 L526.5 370.8 L527.5 371.2 L528.5 371.7 L529.5 372.1 L530.5 372.6 L531.5 373.0 L532.5 373.5 L533.5 373.9 L534.5 374.4 L535.5 374.8 L536.5 375.3 L537.5 375.7 L538.5 376.2 L539.5 376.6 L540.5 377.1 L541.5 377.5 L542.5 378.0 L543.5 378.4 L544.5 378.9 L545.5 379.3 L546.5 379.8 L547.5 380.2 L548.5 380.7 L549.5 381.1 L550.5 381.6 L551.5 382.0 L552.5 382.5 L553.5 382.9 L554.5 383.4 L555.5 383.9 L556.5 384.3 L557.5 384.8 L558.5 385.2 L559.5 385.7 L560.5 386.1 L561.5 386.6 L562.5 387.0 L563.5 387.5 L564.5 388.0 L565.5 388.4 L566.5 388.9 L567.5 389.3 L568.5 389.8 L569.5 390.2 L570.5 390.7 L571.5 391.2 L572.5 391.6 L573.5 392.1 L574.5 392.5 L575.5 393.0 L576.5 393.4 L577.5 393.9 L578.5 394.4 L579.5 394.8 L580.5 395.3 L581.5 395.7 L582.5 396.2 L583.5 396.7 L584.5 397.1 L585.5 397.6 L586.5 398.0 L587.5 398.5 L588.5 399.0 L589.5 399.4 L590.5 399.9 L591.5 400.4 L592.5 400.8 L593.5 401.3 L594.5 401.7 L595.5 402.2 L596.5 402.7 L597.5 403.1 L598.5 403.6 L599.5 404.1 L600.5 404.5 L601.5 405.0 L602.5 405.4 L603.5 405.9 L604.5 406.4 L605.5 406.8 L606.5 407.3 L607.5 407.8 L608.5 408.2 L609.5 408.7 L610.5 409.2 L611.5 409.6 L612.5 410.1 L613.5 410.6 L614.5 411.0 L615.5 411.5 L616.5 412.0 L617.5 412.4 L618.5 412.9 L619.5 413.4 L620.5 413.8 L621.5 414.3 L622.5 414.8 L623.5 415.2 L624.5 415.7 L625.5 416.2 L626.5 416.6 L627.5 417.1 L628.5 417.6 L629.5 418.0 L630.5 418.5 L631.5 419.0 L632.5 419.5 L633.5 419.9 L634.5 420.4 L635.5 420.9 L636.5 421.3 L637.5 421.8 L638.5 422.3 L639.5 422.7 L640.5 423.2 L641.5 423.7 L642.5 424.1 L643.5 424.6 L644.5 425.1 L645.5 425.6 L646.5 426.0 L647.5 426.5 L648.5 427.0 L649.5 427.4 L650.5 427.9 L651.5 428.4 L652.5 428.9 L653.5 429.3 L654.5 429.8 L655.5 430.3 L656.5 430.7 L657.5 431.2 L658.5 431.7 L659.5 432.2 L660.5 432.6 L661.5 433.1 L662.5 433.6 L663.5 434.1 L664.5 434.5 L665.5 435.0 L666.5 435.5 L667.5 435.9 L668.5 436.4 L669.5 436.9 L670.5 437.4 L671.5 437.8 L672.5 438.3 L673.5 438.8 L674.5 439.3 L675.5 439.7 L676.5 440.2 L677.5 440.7 L678.5 441.2 L679.5 441.6 L680.5 442.1 L681.5 442.6 L682.5 443.1 L683.5 443.5 L684.5 444.0 L685.5 444.5 L686.5 445.0 L687.5 445.4 L688.5 445.9 L689.5 446.4 L690.5 446.9 L691.5 447.3 L692.5 447.8 L693.5 448.3 L694.5 448.8 L695.5 449.2 L696.5 449.7 L697.5 450.2 L698.5 450.7 L699.5 451.1 L700.5 451.6 L701.5 452.1 L702.5 452.6 L703.5 453.0 L704.5 453.5 L705.5 454.0 L706.5 454.5 L707.5 455.0 L708.5 455.4 L709.5 455.9 L710.5 456.4 L711.5 456.9 L712.5 457.3 L713.5 457.8 L714.5 458.3 L715.5 458.8 L716.5 459.2 L717.5 459.7 L718.5 460.2 L719.5 460.7 L720.5 461.2 L721.5 461.6 L722.5 462.1 L723.5 462.6 L724.5 463.1 L725.5 463.5 L726.5 464.0 L727.5 464.5 L728.5 465.0 L729.5 465.5 L730.5 465.9 L731.5 466.4 L732.5 466.9 L733.5 467.4 L734.5 467.8 L735.5 468.3 L736.5 468.8 L737.5 469.3 L738.5 469.8 L739.5 470.2 L740.5 470.7 L741.5 471.2 L742.5 471.7 L743.5 472.1 L744.5 472.6 L745.5 473.1 L746.5 473.6 L747.5 474.1 L748.5 474.5 L749.5 475.0 L750.5 475.5 L751.5 476.0 L752.5 476.5 L753.5 476.9 L754.5 477.4 L755.5 477.9 L756.5 478.4 L757.5 478.8 L758.5 479.3 L759.5 479.8 L760.5 480.3 L761.5 480.8 L762.5 481.2 L763.5 481.7 L764.5 482.2 L765.5 482.7 L766.5 483.2 L767.5 483.6 L768.5 484.1 L769.5 484.6 L770.5 485.1 L771.5 485.5 L772.5 486.0 L773.5 486.5 L774.5 487.0 L775.5 487.5 L776.5 487.9 L777.5 488.4 L778.5 488.9 L779.5 489.4 L780.5 489.9 L781.5 490.3 L782.5 490.8 L783.5 491.3 L784.5 491.8 L785.5 492.3 L786.5 492.7 L787.5 493.2 L788.5 493.7 L789.5 494.2 L790.5 494.6 L791.5 495.1 L792.5 495.6 L793.5 496.1 L794.5 496.6 L795.5 497.0 L796.5 497.5 L797.5 498.0 L798.5 498.5 L799.5 499.0 L800.5 499.4 L801.5 499.9 L802.5 500.4 L803.5 500.9 L804.5 501.3 L805.5 501.8 L806.5 502.3 L807.5 502.8 L808.5 503.3 L809.5 503.7 L810.5 504.2 L811.5 504.7 L812.5 505.2 L813.5 505.7 L814.5 506.1 L815.5 506.6 L816.5 507.1 L817.5 507.6 L818.5 508.0 L819.5 508.5 L820.5 509.0 L821.5 509.5 L822.5 510.0 L823.5 510.4 L824.5 510.9 L825.5 511.4 L826.5 511.9 L827.5 512.3 L828.5 512.8 L829.5 513.3 L830.5 513.8 L831.5 514.3 L832.5 514.7 L833.5 515.2 L834.5 515.7 L835.5 516.2 L836.5 516.6 L837.5 517.1 L838.5 517.6 L839.5 518.1 L840.5 518.6 L841.5 519.0 L842.5 519.5 L843.5 520.0 L844.5 520.5 L845.5 520.9 L846.5 521.4 L847.5 521.9 L848.5 522.4 L849.5 522.8 L850.5 523.3 L851.5 523.8 L852.5 524.3 L853.5 524.8 L854.5 525.2 L855.5 525.7 L856.5 526.2 L857.5 526.7 L858.5 527.1 L859.5 527.6 L860.5 528.1 L861.5 528.6 L862.5 529.0 L863.5 529.5 L864.5 530.0 L865.5 530.5 L866.5 530.9 L867.5 531.4 L868.5 531.9 L869.5 532.4 L870.5 532.8 L871.5 533.3 L872.5 533.8 L873.5 534.3 L874.5 534.8 L875.5 535.2 L876.5 535.7 L877.5 536.2 L878.5 536.7 L879.5 537.1 L880.5 537.6 L881.5 538.1 L882.5 538.6 L883.5 539.0 L884.5 539.5 L885.5 540.0 L886.5 540.5 L887.5 540.9 L888.5 541.4 L889.5 541.9 L890.5 542.3 L891.5 542.8 L892.5 543.3 L893.5 543.8 L894.5 544.2 L895.5 544.7 L896.5 545.2 L897.5 545.7 L898.5 546.1 L899.5 546.6 L900.5 547.1 L901.5 547.6 L902.5 548.0 L903.5 548.5 L904.5 549.0 L905.5 549.5 L906.5 549.9 L907.5 550.4 L908.5 550.9 L909.5 551.3 L910.5 551.8 L911.5 552.3 L912.5 552.8 L913.5 553.2 L914.5 553.7 L915.5 554.2 L916.5 554.7 L917.5 555.1 L918.5 555.6 L919.5 556.1 L920.5 556.5 L921.5 557.0 L922.5 557.5 L923.5 558.0 L924.5 558.4 L925.5 558.9 L926.5 559.4 L927.5 559.8 L928.5 560.3 L929.5 560.8 L930.5 561.3 L931.5 561.7 L932.5 562.2 L933.5 562.7 L934.5 563.1 L935.5 563.6 L936.5 564.1 L937.5 564.6 L938.5 565.0 L939.5 565.5 L940.5 566.0 L941.5 566.4 L942.5 566.9 L943.5 567.4 L944.5 567.8 L945.5 568.3 L946.5 568.8 L947.5 569.3 L948.5 569.7 L949.5 570.2 L950.5 570.7 L951.5 571.1 L952.5 571.6 L953.5 572.1 L954.5 572.5 L955.5 573.0 L956.5 573.5 L957.5 573.9 L958.5 574.4 L959.5 574.9 L960.5 575.3 L961.5 575.8 L962.5 576.3 L963.5 576.8 L964.5 577.2 L965.5 577.7 L966.5 578.2 L967.5 578.6 L968.5 579.1 L969.5 579.6 L970.5 580.0 L971.5 580.5 L972.5 581.0 L973.5 581.4 L974.5 581.9 L975.5 582.4 L976.5 582.8 L977.5 583.3 L978.5 583.8 L979.5 584.2 L980.5 584.7 L981.5 585.2 L982.5 585.6 L983.5 586.1 L984.5 586.6 L985.5 587.0 L986.5 587.5 L987.5 588.0 L988.5 588.4 L989.5 588.9 L990.5 589.4 L991.5 589.8 L992.5 590.3 L993.5 590.7 L994.5 591.2 L995.5 591.7 L996.5 592.1 L997.5 592.6 L998.5 593.1 L999.5 593.5 L1000.5 594.0 L1001.5 594.5 L1002.5 594.9 L1003.5 595.4 L1004.5 595.9 L1005.5 596.3 L1006.5 596.8 L1007.5 597.2 L1008.5 597.7 L1009.5 598.2 L1010.5 598.6 L1011.5 599.1 L1012.5 599.6 L1013.5 600.0 L1014.5 600.5 L1015.5 600.9 L1016.5 601.4 L1017.5 601.9 L1018.5 602.3 L1019.5 602.8 L1020.5 603.3 L1021.5 603.7 L1022.5 604.2 L1023.5 604.6 L1024.5 605.1 L1025.5 605.6 L1026.5 606.0 L1027.5 606.5 L1028.5 607.0 L1029.5 607.4 L1030.5 607.9 L1031.5 608.3 L1032.5 608.8 L1033.5 609.3 L1034.5 609.7 L1035.5 610.2 L1036.5 610.6 L1037.5 611.1 L1038.5 611.6 L1039.5 612.0 L1040.5 612.5 L1041.5 612.9 L1042.5 613.4 L1043.5 613.9 L1044.5 614.3 L1045.5 614.8 L1046.5 615.2 L1047.5 615.7 L1048.5 616.2 L1049.5 616.6 L1050.5 617.1 L1051.5 617.5 L1052.5 618.0 L1053.5 618.5 L1054.5 618.9 L1055.5 619.4 L1056.5 619.8 L1057.5 620.3 L1058.5 620.7 L1059.5 621.2 L1060.5 621.7 L1061.5 622.1 L1062.5 622.6 L1063.5 623.0 L1064.5 623.5 L1065.5 624.0 L1066.5 624.4 L1067.5 624.9 L1068.5 625.3 L1069.5 625.8 L1070.5 626.2 L1071.5 626.7 L1072.5 627.2 L1073.5 627.6 L1074.5 628.1 L1075.5 628.5 L1076.5 629.0 L1077.5 629.4 L1078.5 629.9 L1079.5 630.3 L1080.5 630.8 L1081.5 631.3 L1082.5 631.7 L1083.5 632.2 L1084.5 632.6 L1085.5 633.1 L1086.5 633.5 L1087.5 634.0 L1088.5 634.5 L1089.5 634.9 L1090.5 635.4 L1091.5 635.8 L1092.5 636.3 L1093.5 636.7 L1094.5 637.2 L1095.5 637.6 L1096.5 638.1 L1097.5 638.5 L1098.5 639.0 L1099.5 639.5 L1100.5 639.9 L1101.5 640.4 L1102.5 640.8 L1103.5 641.3 L1104.5 641.7 L1105.5 642.2 L1106.5 642.6 L1107.5 643.1 L1108.5 643.5 L1109.5 644.0 L1110.5 644.4 L1111.5 644.9 L1112.5 645.4 L1113.5 645.8 L1114.5 646.3 L1115.5 646.7 L1116.5 647.2 L1117.5 647.6 L1118.5 648.1 L1119.5 648.5 L1120.5 649.0 L1121.5 649.4 L1122.5 649.9 L1123.5 650.3 L1124.5 650.8 L1125.5 651.2 L1126.5 651.7 L1127.5 652.1 L1128.5 652.6 L1129.5 653.0 L1130.5 653.5 L1131.5 653.9 L1132.5 654.4 L1133.5 654.8 L1134.5 655.3 L1135.5 655.8 L1136.5 656.2 L1137.5 656.7 L1138.5 657.1 L1139.5 657.6 L1140.5 658.0 L1141.5 658.5 L1142.5 658.9 L1143.5 659.4 L1144.5 659.8 L1145.5 660.3 L1146.5 660.7 L1147.5 661.2 L1148.5 661.6 L1149.5 662.1 L1150.5 662.5 L1151.5 663.0 L1152.5 663.4 L1153.5 663.9 L1154.5 664.3 L1155.5 664.8 L1156.5 665.2 L1157.5 665.7 L1158.5 666.1 L1159.5 666.6 L1160.5 667.0 L1161.5 667.5 L1162.5 667.9 L1163.5 668.4 L1164.5 668.8 L1165.5 669.3 L1166.5 669.7 L1167.5 670.2 L1168.5 670.6 L1169.5 671.1 L1170.5 671.5 L1171.5 671.9 L1172.5 672.4 L1173.5 672.8 L1174.5 673.3 L1175.5 673.7 L1176.5 674.2 L1177.5 674.6 L1178.5 675.1 L1179.5 675.5 L1180.5 676.0 L1181.5 676.4 L1182.5 676.9 L1183.5 677.3 L1184.5 677.8 L1185.5 678.2 L1186.5 678.7 L1187.5 679.1 L1188.5 679.6 L1189.5 680.0 L1190.5 680.5 L1191.5 680.9 L1192.5 681.4 L1193.5 681.8 L1194.5 682.3 L1195.5 682.7 L1196.5 683.2 L1197.5 683.6 L1198.5 684.0 L1199.5 684.5 L1200.5 684.9 L1201.5 685.4 L1202.5 685.8 L1203.5 686.3 L1204.5 686.7 L1205.5 687.2 L1206.5 687.6 L1207.5 688.1 L1208.5 688.5 L1209.5 689.0 L1210.5 689.4 L1211.5 689.9 L1212.5 690.3 L1213.5 690.8 L1214.5 691.2 L1215.5 691.6 L1216.5 692.1 L1217.5 692.5 L1218.5 693.0 L1219.5 693.4 L1220.5 693.9 L1221.5 694.3 L1222.5 694.8 L1223.5 695.2 L1224.5 695.7 L1225.5 696.1 L1226.5 696.6 L1227.5 697.0" fill="none" stroke="#0f0" stroke-width="1" shape-rendering="crispEdges"/>
<g fill="#0f0" shape-rendering="crispEdges"><rect x="44" y="198" width="1" height="1"/><rect x="46" y="199" width="1" height="1"/><rect x="48" y="201" width="1" height="1"/><rect x="50" y="202" width="1" height="1"/><rect x="52" y="204" width="1" height="1"/><rect x="54" y="205" width="1" height="1"/><rect x="56" y="207" width="1" height="1"/><rect x="58" y="208" width="1" height="1"/><rect x="60" y="210" width="1" height="1"/><rect x="62" y="211" width="1" height="1"/><rect x="64" y="213" width="1" height="1"/><rect x="66" y="214" width="1" height="1"/><rect x="68" y="216" width="1" height="1"/><rect x="70" y="217" width="1" height="1"/><rect x="72" y="219" width="1" height="1"/><rect x="74" y="220" width="1" height="1"/><rect x="76" y="222" width="1" height="1"/><rect x="78" y="223" width="1" height="1"/><rect x="80" y="225" width="1" height="1"/><rect x="82" y="226" width="1" height="1"/><rect x="84" y="228" width="1" height="1"/><rect x="86" y="229" width="1" height="1"/><rect x="88" y="230" width="1" height="1"/><rect x="90" y="232" width="1" height="1"/><rect x="92" y="233" width="1" height="1"/><rect x="94" y="235" width="1" height="1"/><rect x="96" y="236" width="1" height="1"/><rect x="98" y="238" width="1" height="1"/><rect x="100" y="239" width="1" height="1"/><rect x="102" y="240" width="1" height="1"/><rect x="104" y="242" width="1" height="1"/><rect x="106" y="243" width="1" height="1"/><rect x="108" y="245" width="1" height="1"/><rect x="110" y="246" width="1" height="1"/><rect x="112" y="248" width="1" height="1"/><rect x="114" y="249" width="1" height="1"/><rect x="116" y="250" width="1" height="1"/><rect x="118" y="252" width="1" height="1"/><rect x="120" y="253" width="1" height="1"/><rect x="122" y="254" width="1" height="1"/><rect x="124" y="256" width="1" height="1"/><rect x="126" y="257" width="1" height="1"/><rect x="128" y="259" width="1" height="1"/><rect x="130" y="260" width="1" height="1"/><rect x="132" y="261" width="1" height="1"/><rect x="134" y="263" width="1" height="1"/><rect x="136" y="264" width="1" height="1"/><rect x="138" y="265" width="1" height="1"/><rect x="140" y="267" width="1" height="1"/><rect x="142" y="268" width="1" height="1"/><rect x="144" y="270" width="1" height="1"/><rect x="146" y="271" width="1" height="1"/><rect x="148" y="272" width="1" height="1"/><rect x="150" y="274" width="1" height="1"/><rect x="152" y="275" width="1" height="1"/><rect x="154" y="276" width="1" height="1"/><rect x="156" y="278" width="1" height="1"/><rect x="158" y="279" width="1" height="1"/><rect x="160" y="280" width="1" height="1"/><rect x="162" y="282" width="1" height="1"/><rect x="164" y="283" width="1" height="1"/><rect x="166" y="284" width="1" height="1"/><rect x="168" y="285" width="1" height="1"/><rect x="170" y="287" width="1" height="1"/><rect x="172" y="288" width="1" height="1"/><rect x="174" y="289" width="1" height="1"/><rect x="176" y="291" width="1" height="1"/><rect x="178" y="292" width="1" height="1"/><rect x="180" y="293" width="1" height="1"/><rect x="182" y="295" width="1" height="1"/><rect x="184" y="296" width="1" height="1"/><rect x="186" y="297" width="1" height="1"/><rect x="188" y="298" width="1" height="1"/><rect x="190" y="300" width="1" height="1"/><rect x="192" y="301" width="1" height="1"/><rect x="194" y="302" width="1" height="1"/><rect x="196" y="304" width="1" height="1"/><rect x="198" y="305" width="1" height="1"/><rect x="200" y="306" width="1" height="1"/><rect x="202" y="307" width="1" height="1"/><rect x="204" y="309" width="1" height="1"/><rect x="206" y="310" width="1" height="1"/><rect x="208" y="311" width="1" height="1"/><rect x="210" y="312" width="1" height="1"/><rect x="212" y="314" width="1" height="1"/><rect x="214" y="315" width="1" height="1"/><rect x="216" y="316" width="1" height="1"/><rect x="218" y="317" width="1" height="1"/><rect x="220" y="319" width="1" height="1"/><rect x="222" y="320" width="1" height="1"/><rect x="224" y="321" width="1" height="1"/><rect x="226" y="322" width="1" height="1"/><rect x="228" y="324" width="1" height="1"/><rect x="230" y="325" width="1" height="1"/><rect x="232" y="326" width="1" height="1"/><rect x="234" y="327" width="1" height="1"/><rect x="236" y="328" width="1" height="1"/><rect x="238" y="330" width="1" height="1"/><rect x="240" y="331" width="1" height="1"/><rect x="242" y="332" width="1" height="1"/><rect x="244" y="333" width="1" height="1"/><rect x="246" y="334" width="1" height="1"/><rect x="248" y="336" width="1" height="1"/><rect x="250" y="337" width="1" height="1"/><rect x="252" y="338" width="1" height="1"/><rect x="254" y="339" width="1" height="1"/><rect x="256" y="340" width="1" height="1"/><rect x="258" y="342" width="1" height="1"/><rect x="260" y="343" width="1" height="1"/><rect x="262" y="344" width="1" height="1"/><rect x="264" y="345" width="1" height="1"/><rect x="266" y="346" width="1" height="1"/><rect x="268" y="348" width="1" height="1"/><rect x="270" y="349" width="1" height="1"/><rect x="272" y="350" width="1" height="1"/><rect x="274" y="351" width="1" height="1"/><rect x="276" y="352" width="1" height="1"/><rect x="278" y="353" width="1" height="1"/><rect x="280" y="355" width="1" height="1"/><rect x="282" y="356" width="1" height="1"/><rect x="284" y="357" width="1" height="1"/><rect x="286" y="358" width="1" height="1"/><rect x="288" y="359" width="1" height="1"/><rect x="290" y="360" width="1" height="1"/><rect x="292" y="361" width="1" height="1"/><rect x="294" y="363" width="1" height="1"/><rect x="296" y="364" width="1" height="1"/><rect x="298" y="365" width="1" height="1"/><rect x="300" y="366" width="1" height="1"/><rect x="302" y="367" width="1" height="1"/><rect x="304" y="368" width="1" height="1"/><rect x="306" y="369" width="1" height="1"/><rect x="308" y="371" width="1" height="1"/><rect x="310" y="372" width="1" height="1"/><rect x="312" y="373" width="1" height="1"/><rect x="314" y="374" width="1" height="1"/><rect x="316" y="375" width="1" height="1"/><rect x="318" y="376" width="1" height="1"/><rect x="320" y="377" width="1" height="1"/><rect x="322" y="378" width="1" height="1"/><rect x="324" y="379" width="1" height="1"/><rect x="326" y="381" width="1" height="1"/><rect x="328" y="382" width="1" height="1"/><rect x="330" y="383" width="1" height="1"/><rect x="332" y="384" width="1" height="1"/><rect x="334" y="385" width="1" height="1"/><rect x="336" y="386" width="1" height="1"/><rect x="338" y="387" width="1" height="1"/><rect x="340" y="388" width="1" height="1"/><rect x="342" y="389" width="1" height="1"/><rect x="344" y="390" width="1" height="1"/><rect x="346" y="392" width="1" height="1"/><rect x="348" y="393" width="1" height="1"/><rect x="350" y="394" width="1" height="1"/><rect x="352" y="395" width="1" height="1"/><rect x="354" y="396" width="1" height="1"/><rect x="356" y="397" width="1" height="1"/><rect x="358" y="398" width="1" height="1"/><rect x="360" y="399" width="1" height="1"/><rect x="362" y="400" width="1" height="1"/><rect x="364" y="401" width="1" height="1"/><rect x="366" y="402" width="1" height="1"/><rect x="368" y="403" width="1" height="1"/><rect x="370" y="404" width="1" height="1"/><rect x="372" y="405" width="1" height="1"/><rect x="374" y="407" width="1" height="1"/><rect x="376" y="408" width="1" height="1"/><rect x="378" y="409" width="1" height="1"/><rect x="380" y="410" width="1" height="1"/><rect x="382" y="411" width="1" height="1"/><rect x="384" y="412" width="1" height="1"/><rect x="386" y="413" width="1" height="1"/><rect x="388" y="414" width="1" height="1"/><rect x="390" y="415" width="1" height="1"/><rect x="392" y="416" width="1" height="1"/><rect x="394" y="417" width="1" height="1"/><rect x="396" y="418" width="1" height="1"/><rect x="398" y="419" width="1" height="1"/><rect x="400" y="420" width="1" height="1"/><rect x="402" y="421" width="1" height="1"/><rect x="404" y="422" width="1" height="1"/><rect x="406" y="423" width="1" height="1"/><rect x="408" y="424" width="1" height="1"/><rect x="410" y="425" width="1" height="1"/><rect x="412" y="426" width="1" height="1"/><rect x="414" y="427" width="1" height="1"/><rect x="416" y="428" width="1" height="1"/><rect x="418" y="429" width="1" height="1"/><rect x="420" y="430" width="1" height="1"/><rect x="422" y="431" width="1" height="1"/><rect x="424" y="432" width="1" height="1"/><rect x="426" y="433" width="1" height="1"/><rect x="428" y="434" width="1" height="1"/><rect x="430" y="435" width="1" height="1"/><rect x="432" y="436" width="1" height="1"/><rect x="434" y="437" width="1" height="1"/><rect x="436" y="438" width="1" height="1"/><rect x="438" y="439" width="1" height="1"/><rect x="440" y="440" width="1" height="1"/><rect x="442" y="441" width="1" height="1"/><rect x="444" y="442" width="1" height="1"/><rect x="446" y="443" width="1" height="1"/><rect x="448" y="444" width="1" height="1"/><rect x="450" y="445" width="1" height="1"/><rect x="452" y="446" width="1" height="1"/><rect x="454" y="447" width="1" height="1"/><rect x="456" y="448" width="1" height="1"/><rect x="458" y="449" width="1" height="1"/><rect x="460" y="450" width="1" height="1"/><rect x="462" y="451" width="1" height="1"/><rect x="464" y="452" width="1" height="1"/><rect x="466" y="453" width="1" height="1"/><rect x="468" y="454" width="1" height="1"/><rect x="470" y="455" width="1" height="1"/><rect x="472" y="456" width="1" height="1"/><rect x="474" y="457" width="1" height="1"/><rect x="476" y="458" width="1" height="1"/><rect x="478" y="459" width="1" height="1"/><rect x="480" y="460" width="1" height="1"/><rect x="482" y="461" width="1" height="1"/><rect x="484" y="462" width="1" height="1"/><rect x="486" y="463" width="1" height="1"/><rect x="488" y="464" width="1" height="1"/><rect x="490" y="464" width="1" height="1"/><rect x="492" y="465" width="1" height="1"/><rect x="494" y="466" width="1" height="1"/><rect x="496" y="467" width="1" height="1"/><rect x="498" y="468" width="1" height="1"/><rect x="500" y="469" width="1" height="1"/><rect x="502" y="470" width="1" height="1"/><rect x="504" y="471" width="1" height="1"/><rect x="506" y="472" width="1" height="1"/><rect x="508" y="473" width="1" height="1"/><rect x="510" y="474" width="1" height="1"/><rect x="512" y="475" width="1" height="1"/><rect x="514" y="476" width="1" height="1"/><rect x="516" y="477" width="1" height="1"/><rect x="518" y="478" width="1" height="1"/><rect x="520" y="478" width="1" height="1"/><rect x="522" y="479" width="1" height="1"/><rect x="524" y="480" width="1" height="1"/><rect x="526" y="481" width="1" height="1"/><rect x="528" y="482" width="1" height="1"/><rect x="530" y="483" width="1" height="1"/><rect x="532" y="484" width="1" height="1"/><rect x="534" y="485" width="1" height="1"/><rect x="536" y="486" width="1" height="1"/><rect x="538" y="487" width="1" height="1"/><rect x="540" y="488" width="1" height="1"/><rect x="542" y="488" width="1" height="1"/><rect x="544" y="489" width="1" height="1"/><rect x="546" y="490" width="1" height="1"/><rect x="548" y="491" width="1" height="1"/><rect x="550" y="492" width="1" height="1"/><rect x="552" y="493" width="1" height="1"/><rect x="554" y="494" width="1" height="1"/><rect x="556" y="495" width="1" height="1"/><rect x="558" y="496" width="1" height="1"/><rect x="560" y="496" width="1" height="1"/><rect x="562" y="497" width="1" height="1"/><rect x="564" y="498" width="1" height="1"/><rect x="566" y="499" width="1" height="1"/><rect x="568" y="500" width="1" height="1"/><rect x="570" y="501" width="1" height="1"/><rect x="572" y="502" width="1" height="1"/><rect x="574" y="503" width="1" height="1"/><rect x="576" y="504" width="1" height="1"/><rect x="578" y="504" width="1" height="1"/><rect x="580" y="505" width="1" height="1"/><rect x="582" y="506" width="1" height="1"/><rect x="584" y="507" width="1" height="1"/><rect x="586" y="508" width="1" height="1"/><rect x="588" y="509" width="1" height="1"/><rect x="590" y="510" width="1" height="1"/><rect x="592" y="510" width="1" height="1"/><rect x="594" y="511" width="1" height="1"/><rect x="596" y="512" width="1" height="1"/><rect x="598" y="513" width="1" height="1"/><rect x="600" y="514" width="1" height="1"/><rect x="602" y="515" width="1" height="1"/><rect x="604" y="516" width="1" height="1"/><rect x="606" y="516" width="1" height="1"/><rect x="608" y="517" width="1" height="1"/><rect x="610" y="518" width="1" height="1"/><rect x="612" y="519" width="1" height="1"/><rect x="614" y="520" width="1" height="1"/><rect x="616" y="521" width="1" height="1"/><rect x="618" y="521" width="1" height="1"/><rect x="620" y="522" width="1" height="1"/><rect x="622" y="523" width="1" height="1"/><rect x="624" y="524" width="1" height="1"/><rect x="626" y="525" width="1" height="1"/><rect x="628" y="526" width="1" height="1"/><rect x="630" y="526" width="1" height="1"/><rect x="632" y="527" width="1" height="1"/><rect x="634" y="528" width="1" height="1"/><rect x="636" y="529" width="1" height="1"/><rect x="638" y="530" width="1" height="1"/><rect x="640" y="530" width="1" height="1"/><rect x="642" y="531" width="1" height="1"/><rect x="644" y="532" width="1" height="1"/><rect x="646" y="533" width="1" height="1"/><rect x="648" y="534" width="1" height="1"/><rect x="650" y="535" width="1" height="1"/><rect x="652" y="535" width="1" height="1"/><rect x="654" y="536" width="1" height="1"/><rect x="656" y="537" width="1" height="1"/><rect x="658" y="538" width="1" height="1"/><rect x="660" y="539" width="1" height="1"/><rect x="662" y="539" width="1" height="1"/><rect x="664" y="540" width="1" height="1"/><rect x="666" y="541" width="1" height="1"/><rect x="668" y="542" width="1" height="1"/><rect x="670" y="542" width="1" height="1"/><rect x="672" y="543" width="1" height="1"/><rect x="674" y="544" width="1" height="1"/><rect x="676" y="545" width="1" height="1"/><rect x="678" y="546" width="1" height="1"/><rect x="680" y="546" width="1" height="1"/><rect x="682" y="547" width="1" height="1"/><rect x="684" y="548" width="1" height="1"/><rect x="686" y="549" width="1" height="1"/><rect x="688" y="550" width="1" height="1"/><rect x="690" y="550" width="1" height="1"/><rect x="692" y="551" width="1" height="1"/><rect x="694" y="552" width="1" height="1"/><rect x="696" y="553" width="1" height="1"/><rect x="698" y="553" width="1" height="1"/><rect x="700" y="554" width="1" height="1"/><rect x="702" y="555" width="1" height="1"/><rect x="704" y="556" width="1" height="1"/><rect x="706" y="556" width="1" height="1"/><rect x="708" y="557" width="1" height="1"/><rect x="710" y="558" width="1" height="1"/><rect x="712" y="559" width="1" height="1"/><rect x="714" y="559" width="1" height="1"/><rect x="716" y="560" width="1" height="1"/><rect x="718" y="561" width="1" height="1"/><rect x="720" y="562" width="1" height="1"/><rect x="722" y="562" width="1" height="1"/><rect x="724" y="563" width="1" height="1"/><rect x="726" y="564" width="1" height="1"/><rect x="728" y="565" width="1" height="1"/><rect x="730" y="565" width="1" height="1"/><rect x="732" y="566" width="1" height="1"/><rect x="734" y="567" width="1" height="1"/><rect x="736" y="568" width="1" height="1"/><rect x="738" y="568" width="1" height="1"/><rect x="740" y="569" width="1" height="1"/><rect x="742" y="570" width="1" height="1"/><rect x="744" y="571" width="1" height="1"/><rect x="746" y="571" width="1" height="1"/><rect x="748" y="572" width="1" height="1"/><rect x="750" y="573" width="1" height="1"/><rect x="752" y="573" width="1" height="1"/><rect x="754" y="574" width="1" height="1"/><rect x="756" y="575" width="1" height="1"/><rect x="758" y="576" width="1" height="1"/><rect x="760" y="576" width="1" height="1"/><rect x="762" y="577" width="1" height="1"/><rect x="764" y="578" width="1" height="1"/><rect x="766" y="578" width="1" height="1"/><rect x="768" y="579" width="1" height="1"/><rect x="770" y="580" width="1" height="1"/><rect x="772" y="581" width="1" height="1"/><rect x="774" y="581" width="1" height="1"/><rect x="776" y="582" width="1" height="1"/><rect x="778" y="583" width="1" height="1"/><rect x="780" y="583" width="1" height="1"/><rect x="782" y="584" width="1" height="1"/><rect x="784" y="585" width="1" height="1"/><rect x="786" y="585" width="1" height="1"/><rect x="788" y="586" width="1" height="1"/><rect x="790" y="587" width="1" height="1"/><rect x="792" y="588" width="1" height="1"/><rect x="794" y="588" width="1" height="1"/><rect x="796" y="589" width="1" height="1"/><rect x="798" y="590" width="1" height="1"/><rect x="800" y="590" width="1" height="1"/><rect x="802" y="591" width="1" height="1"/><rect x="804" y="592" width="1" height="1"/><rect x="806" y="592" width="1" height="1"/><rect x="808" y="593" width="1" height="1"/><rect x="810" y="594" width="1" height="1"/><rect x="812" y="594" width="1" height="1"/><rect x="814" y="595" width="1" height="1"/><rect x="816" y="596" width="1" height="1"/><rect x="818" y="596" width="1" height="1"/><rect x="820" y="597" width="1" height="1"/><rect x="822" y="598" width="1" height="1"/><rect x="824" y="598" width="1" height="1"/><rect x="826" y="599" width="1" height="1"/><rect x="828" y="600" width="1" height="1"/><rect x="830" y="600" width="1" height="1"/><rect x="832" y="601" width="1" height="1"/><rect x="834" y="602" width="1" height="1"/><rect x="836" y="602" width="1" height="1"/><rect x="838" y="603" width="1" height="1"/><rect x="840" y="604" width="1" height="1"/><rect x="842" y="604" width="1" height="1"/><rect x="844" y="605" width="1" height="1"/><rect x="846" y="606" width="1" height="1"/><rect x="848" y="606" width="1" height="1"/><rect x="850" y="607" width="1" height="1"/><rect x="852" y="607" width="1" height="1"/><rect x="854" y="608" width="1" height="1"/><rect x="856" y="609" width="1" height="1"/><rect x="858" y="609" width="1" height="1"/><rect x="860" y="610" width="1" height="1"/><rect x="862" y="611" width="1" height="1"/><rect x="864" y="611" width="1" height="1"/><rect x="866" y="612" width="1" height="1"/><rect x="868" y="613" width="1" height="1"/><rect x="870" y="613" width="1" height="1"/><rect x="872" y="614" width="1" height="1"/><rect x="874" y="614" width="1" height="1"/><rect x="876" y="615" width="1" height="1"/><rect x="878" y="616" width="1" height="1"/><rect x="880" y="616" width="1" height="1"/><rect x="882" y="617" width="1" height="1"/><rect x="884" y="617" width="1" height="1"/><rect x="886" y="618" width="1" height="1"/><rect x="888" y="619" width="1" height="1"/><rect x="890" y="619" width="1" height="1"/><rect x="892" y="620" width="1" height="1"/><rect x="894" y="621" width="1" height="1"/><rect x="896" y="621" width="1" height="1"/><rect x="898" y="622" width="1" height="1"/><rect x="900" y="622" width="1" height="1"/><rect x="902" y="623" width="1" height="1"/><rect x="904" y="624" width="1" height="1"/><rect x="906" y="624" width="1" height="1"/><rect x="908" y="625" width="1" height="1"/><rect x="910" y="625" width="1" height="1"/><rect x="912" y="626" width="1" height="1"/><rect x="914" y="627" width="1" height="1"/><rect x="916" y="627" width="1" height="1"/><rect x="918" y="628" width="1" height="1"/><rect x="920" y="628" width="1" height="1"/><rect x="922" y="629" width="1" height="1"/><rect x="924" y="629" width="1" height="1"/><rect x="926" y="630" width="1" height="1"/><rect x="928" y="631" width="1" height="1"/><rect x="930" y="631" width="1" height="1"/><rect x="932" y="632" width="1" height="1"/><rect x="934" y="632" width="1" height="1"/><rect x="936" y="633" width="1" height="1"/><rect x="938" y="634" width="1" height="1"/><rect x="940" y="634" width="1" height="1"/><rect x="942" y="635" width="1" height="1"/><rect x="944" y="635" width="1" height="1"/><rect x="946" y="636" width="1" height="1"/><rect x="948" y="636" width="1" height="1"/><rect x="950" y="637" width="1" height="1"/><rect x="952" y="638" width="1" height="1"/><rect x="954" y="638" width="1" height="1"/><rect x="956" y="639" width="1" height="1"/><rect x="958" y="639" width="1" height="1"/><rect x="960" y="640" width="1" height="1"/><rect x="962" y="640" width="1" height="1"/><rect x="964" y="641" width="1" height="1"/><rect x="966" y="641" width="1" height="1"/><rect x="968" y="642" width="1" height="1"/><rect x="970" y="643" width="1" height="1"/><rect x="972" y="643" width="1" height="1"/><rect x="974" y="644" width="1" height="1"/><rect x="976" y="644" width="1" height="1"/><rect x="978" y="645" width="1" height="1"/><rect x="980" y="645" width="1" height="1"/><rect x="982" y="646" width="1" height="1"/><rect x="984" y="646" width="1" height="1"/><rect x="986" y="647" width="1" height="1"/><rect x="988" y="647" width="1" height="1"/><rect x="990" y="648" width="1" height="1"/><rect x="992" y="649" width="1" height="1"/><rect x="994" y="649" width="1" height="1"/><rect x="996" y="650" width="1" height="1"/><rect x="998" y="650" width="1" height="1"/><rect x="1000" y="651" width="1" height="1"/><rect x="1002" y="651" width="1" height="1"/><rect x="1004" y="652" width="1" height="1"/><rect x="1006" y="652" width="1" height="1"/><rect x="1008" y="653" width="1" height="1"/><rect x="1010" y="653" width="1" height="1"/><rect x="1012" y="654" width="1" height="1"/><rect x="1014" y="654" width="1" height="1"/><rect x="1016" y="655" width="1" height="1"/><rect x="1018" y="655" width="1" height="1"/><rect x="1020" y="656" width="1" height="1"/><rect x="1022" y="657" width="1" height="1"/><rect x="1024" y="657" width="1" height="1"/><rect x="1026" y="658" width="1" height="1"/><rect x="1028" y="658" width="1" height="1"/><rect x="1030" y="659" width="1" height="1"/><rect x="1032" y="659" width="1" height="1"/><rect x="1034" y="660" width="1" height="1"/><rect x="1036" y="660" width="1" height="1"/><rect x="1038" y="661" width="1" height="1"/><rect x="1040" y="661" width="1" height="1"/><rect x="1042" y="662" width="1" height="1"/><rect x="1044" y="662" width="1" height="1"/><rect x="1046" y="663" width="1" height="1"/><rect x="1048" y="663" width="1" height="1"/><rect x="1050" y="664" width="1" height="1"/><rect x="1052" y="664" width="1" height="1"/><rect x="1054" y="665" width="1" height="1"/><rect x="1056" y="665" width="1" height="1"/><rect x="1058" y="666" width="1" height="1"/><rect x="1060" y="666" width="1" height="1"/><rect x="1062" y="667" width="1" height="1"/><rect x="1064" y="667" width="1" height="1"/><rect x="1066" y="668" width="1" height="1"/><rect x="1068" y="668" width="1" height="1"/><rect x="1070" y="669" width="1" height="1"/><rect x="1072" y="669" width="1" height="1"/><rect x="1074" y="670" width="1" height="1"/><rect x="1076" y="670" width="1" height="1"/><rect x="1078" y="671" width="1" height="1"/><rect x="1080" y="671" width="1" height="1"/><rect x="1082" y="672" width="1" height="1"/><rect x="1084" y="672" width="1" height="1"/><rect x="1086" y="673" width="1" height="1"/><rect x="1088" y="673" width="1" height="1"/><rect x="1090" y="674" width="1" height="1"/><rect x="1092" y="674" width="1" height="1"/><rect x="1094" y="675" width="1" height="1"/><rect x="1096" y="675" width="1" height="1"/><rect x="1098" y="676" width="1" height="1"/><rect x="1100" y="676" width="1" height="1"/><rect x="1102" y="677" width="1" height="1"/><rect x="1104" y="677" width="1" height="1"/><rect x="1106" y="678" width="1" height="1"/><rect x="1108" y="678" width="1" height="1"/><rect x="1110" y="679" width="1" height="1"/><rect x="1112" y="679" width="1" height="1"/><rect x="1114" y="680" width="1" height="1"/><rect x="1116" y="680" width="1" height="1"/><rect x="1118" y="681" width="1" height="1"/><rect x="1120" y="681" width="1" height="1"/><rect x="1122" y="682" width="1" height="1"/><rect x="1124" y="682" width="1" height="1"/><rect x="1126" y="683" width="1" height="1"/><rect x="1128" y="683" width="1" height="1"/><rect x="1130" y="683" width="1" height="1"/><rect x="1132" y="684" width="1" height="1"/><rect x="1134" y="684" width="1" height="1"/><rect x="1136" y="685" width="1" height="1"/><rect x="1138" y="685" width="1" height="1"/><rect x="1140" y="686" width="1" height="1"/><rect x="1142" y="686" width="1" height="1"/><rect x="1144" y="687" width="1" height="1"/><rect x="1146" y="687" width="1" height="1"/><rect x="1148" y="688" width="1" height="1"/><rect x="1150" y="688" width="1" height="1"/><rect x="1152" y="689" width="1" height="1"/><rect x="1154" y="689" width="1" height="1"/><rect x="1156" y="690" width="1" height="1"/><rect x="1158" y="690" width="1" height="1"/><rect x="1160" y="691" width="1" height="1"/><rect x="1162" y="691" width="1" height="1"/><rect x="1164" y="692" width="1" height="1"/><rect x="1166" y="692" width="1" height="1"/><rect x="1168" y="693" width="1" height="1"/><rect x="1170" y="693" width="1" height="1"/><rect x="1172" y="694" width="1" height="1"/><rect x="1174" y="694" width="1" height="1"/><rect x="1176" y="695" width="1" height="1"/><rect x="1178" y="695" width="1" height="1"/><rect x="1180" y="696" width="1" height="1"/><rect x="1182" y="696" width="1" height="1"/><rect x="1184" y="696" width="1" height="1"/><rect x="1186" y="697" width="1" height="1"/><rect x="1188" y="697" width="1" height="1"/><rect x="1190" y="698" width="1" height="1"/><rect x="1192" y="698" width="1" height="1"/><rect x="1194" y="699" width="1" height="1"/><rect x="1196" y="699" width="1" height="1"/><rect x="1198" y="700" width="1" height="1"/><rect x="1200" y="700" width="1" height="1"/><rect x="1202" y="701" width="1" height="1"/><rect x="1204" y="701" width="1" height="1"/><rect x="1206" y="702" width="1" height="1"/><rect x="1208" y="702" width="1" height="1"/><rect x="1210" y="703" width="1" height="1"/><rect x="1212" y="703" width="1" height="1"/><rect x="1214" y="704" width="1" height="1"/><rect x="1216" y="704" width="1" height="1"/><rect x="1218" y="705" width="1" height="1"/><rect x="1220" y="705" width="1" height="1"/><rect x="1222" y="706" width="1" height="1"/><rect x="1224" y="706" width="1" height="1"/><rect x="1226" y="707" width="1" height="1"/></g>
<g shape-rendering="crispEdges">
<rect x="1316" y="806" width="1196" height="1" fill="#c0c0c0"/>
<rect x="1316" y="1351" width="1196" height="1" fill="#c0c0c0"/>
<rect x="1322" y="806" width="1" height="546" fill="#c0c0c0"/>
<rect x="2505" y="806" width="1" height="546" fill="#c0c0c0"/>
<rect x="1316" y="856" width="7" height="1" fill="#c0c0c0"/>
<rect x="2505" y="856" width="7" height="1" fill="#c0c0c0"/>
<rect x="1316" y="905" width="7" height="1" fill="#c0c0c0"/>
<rect x="2505" y="905" width="7" height="1" fill="#c0c0c0"/>
<rect x="1316" y="955" width="7" height="1" fill="#c0c0c0"/>
<rect x="2505" y="955" width="7" height="1" fill="#c0c0c0"/>
<rect x="1316" y="1004" width="7" height="1" fill="#c0c0c0"/>
<rect x="2505" y="1004" width="7" height="1" fill="#c0c0c0"/>
<rect x="1316" y="1054" width="7" height="1" fill="#c0c0c0"/>
<rect x="2505" y="1054" width="7" height="1" fill="#c0c0c0"/>
<rect x="1316" y="1103" width="7" height="1" fill="#c0c0c0"/>
<rect x="2505" y="1103" width="7" height="1" fill="#c0c0c0"/>
<rect x="1316" y="1153" width="7" height="1" fill="#c0c0c0"/>
<rect x="2505" y="1153" width="7" height="1" fill="#c0c0c0"/>
<rect x="1316" y="1202" width="7" height="1" fill="#c0c0c0"/>
<rect x="2505" y="1202" width="7" height="1" fill="#c0c0c0"/>
<rect x="1316" y="1252" width="7" height="1" fill="#c0c0c0"/>
<rect x="2505" y="1252" width="7" height="1" fill="#c0c0c0"/>
<rect x="1316" y="1301" width="7" height="1" fill="#c0c0c0"/>
<rect x="2505" y="1301" width="7" height="1" fill="#c0c0c0"/>
<rect x="1322" y="1351" width="1" height="7" fill="#c0c0c0"/>
<rect x="1453" y="1351" width="1" height="7" fill="#c0c0c0"/>
<rect x="1585" y="1351" width="1" height="7" fill="#c0c0c0"/>
<rect x="1716" y="1351" width="1" height="7" fill="#c0c0c0"/>
<rect x="1848" y="1351" width="1" height="7" fill="#c0c0c0"/>
<rect x="1979" y="1351" width="1" height="7" fill="#c0c0c0"/>
<rect x="2111" y="1351" width="1" height="7" fill="#c0c0c0"/>
<rect x="2242" y="1351" width="1" height="7" fill="#c0c0c0"/>
<rect x="2374" y="1351" width="1" height="7" fill="#c0c0c0"/>
<rect x="2505" y="1351" width="1" height="7" fill="#c0c0c0"/>
</g>
<text x="1314.50" y="810.60" font-size="13" fill="#c8c8c8" text-anchor="end" textLength="35.00" lengthAdjust="spacing" stroke="#c8c8c8" stroke-width="0.25">8.0dB</text>
<text x="2514.00" y="810.60" font-size="13" fill="#c8c8c8" textLength="27.50" lengthAdjust="spacing" stroke="#c8c8c8" stroke-width="0.25">175°</text>
<text x="1314.50" y="860.15" font-size="13" fill="#c8c8c8" text-anchor="end" textLength="35.00" lengthAdjust="spacing" stroke="#c8c8c8" stroke-width="0.25">7.5dB</text>
<text x="2514.00" y="860.15" font-size="13" fill="#c8c8c8" textLength="27.50" lengthAdjust="spacing" stroke="#c8c8c8" stroke-width="0.25">170°</text>
<text x="1314.50" y="909.69" font-size="13" fill="#c8c8c8" text-anchor="end" textLength="35.00" lengthAdjust="spacing" stroke="#c8c8c8" stroke-width="0.25">7.0dB</text>
<text x="2514.00" y="909.69" font-size="13" fill="#c8c8c8" textLength="27.50" lengthAdjust="spacing" stroke="#c8c8c8" stroke-width="0.25">165°</text>
<text x="1314.50" y="959.24" font-size="13" fill="#c8c8c8" text-anchor="end" textLength="35.00" lengthAdjust="spacing" stroke="#c8c8c8" stroke-width="0.25">6.5dB</text>
<text x="2514.00" y="959.24" font-size="13" fill="#c8c8c8" textLength="27.50" lengthAdjust="spacing" stroke="#c8c8c8" stroke-width="0.25">160°</text>
<text x="1314.50" y="1008.78" font-size="13" fill="#c8c8c8" text-anchor="end" textLength="35.00" lengthAdjust="spacing" stroke="#c8c8c8" stroke-width="0.25">6.0dB</text>
<text x="2514.00" y="1008.78" font-size="13" fill="#c8c8c8" textLength="27.50" lengthAdjust="spacing" stroke="#c8c8c8" stroke-width="0.25">155°</text>
<text x="1314.50" y="1058.33" font-size="13" fill="#c8c8c8" text-anchor="end" textLength="35.00" lengthAdjust="spacing" stroke="#c8c8c8" stroke-width="0.25">5.5dB</text>
<text x="2514.00" y="1058.33" font-size="13" fill="#c8c8c8" textLength="27.50" lengthAdjust="spacing" stroke="#c8c8c8" stroke-width="0.25">150°</text>
<text x="1314.50" y="1107.87" font-size="13" fill="#c8c8c8" text-anchor="end" textLength="35.00" lengthAdjust="spacing" stroke="#c8c8c8" stroke-width="0.25">5.0dB</text>
<text x="2514.00" y="1107.87" font-size="13" fill="#c8c8c8" textLength="27.50" lengthAdjust="spacing" stroke="#c8c8c8" stroke-width="0.25">145°</text>
<text x="1314.50" y="1157.42" font-size="13" fill="#c8c8c8" text-anchor="end" textLength="35.00" lengthAdjust="spacing" stroke="#c8c8c8" stroke-width="0.25">4.5dB</text>
<text x="2514.00" y="1157.42" font-size="13" fill="#c8c8c8" textLength="27.50" lengthAdjust="spacing" stroke="#c8c8c8" stroke-width="0.25">140°</text>
<text x="1314.50" y="1206.96" font-size="13" fill="#c8c8c8" text-anchor="end" textLength="35.00" lengthAdjust="spacing" stroke="#c8c8c8" stroke-width="0.25">4.0dB</text>
<text x="2514.00" y="1206.96" font-size="13" fill="#c8c8c8" textLength="27.50" lengthAdjust="spacing" stroke="#c8c8c8" stroke-width="0.25">135°</text>
<text x="1314.50" y="1256.51" font-size="13" fill="#c8c8c8" text-anchor="end" textLength="35.00" lengthAdjust="spacing" stroke="#c8c8c8" stroke-width="0.25">3.5dB</text>
<text x="2514.00" y="1256.51" font-size="13" fill="#c8c8c8" textLength="27.50" lengthAdjust="spacing" stroke="#c8c8c8" stroke-width="0.25">130°</text>
<text x="1314.50" y="1306.05" font-size="13" fill="#c8c8c8" text-anchor="end" textLength="35.00" lengthAdjust="spacing" stroke="#c8c8c8" stroke-width="0.25">3.0dB</text>
<text x="2514.00" y="1306.05" font-size="13" fill="#c8c8c8" textLength="27.50" lengthAdjust="spacing" stroke="#c8c8c8" stroke-width="0.25">125°</text>
<text x="1314.50" y="1355.60" font-size="13" fill="#c8c8c8" text-anchor="end" textLength="35.00" lengthAdjust="spacing" stroke="#c8c8c8" stroke-width="0.25">2.5dB</text>
<text x="2514.00" y="1355.60" font-size="13" fill="#c8c8c8" textLength="27.50" lengthAdjust="spacing" stroke="#c8c8c8" stroke-width="0.25">120°</text>
<text x="1322.00" y="1370.30" font-size="13" fill="#c8c8c8" text-anchor="middle" textLength="32.50" lengthAdjust="spacingAndGlyphs" stroke="#c8c8c8" stroke-width="0.25">3MHz</text>
<text x="1453.44" y="1370.30" font-size="13" fill="#c8c8c8" text-anchor="middle" textLength="32.50" lengthAdjust="spacingAndGlyphs" stroke="#c8c8c8" stroke-width="0.25">6MHz</text>
<text x="1584.89" y="1370.30" font-size="13" fill="#c8c8c8" text-anchor="middle" textLength="32.50" lengthAdjust="spacingAndGlyphs" stroke="#c8c8c8" stroke-width="0.25">9MHz</text>
<text x="1716.33" y="1370.30" font-size="13" fill="#c8c8c8" text-anchor="middle" textLength="39.50" lengthAdjust="spacingAndGlyphs" stroke="#c8c8c8" stroke-width="0.25">12MHz</text>
<text x="1847.78" y="1370.30" font-size="13" fill="#c8c8c8" text-anchor="middle" textLength="39.50" lengthAdjust="spacingAndGlyphs" stroke="#c8c8c8" stroke-width="0.25">15MHz</text>
<text x="1979.22" y="1370.30" font-size="13" fill="#c8c8c8" text-anchor="middle" textLength="39.50" lengthAdjust="spacingAndGlyphs" stroke="#c8c8c8" stroke-width="0.25">18MHz</text>
<text x="2110.67" y="1370.30" font-size="13" fill="#c8c8c8" text-anchor="middle" textLength="39.50" lengthAdjust="spacingAndGlyphs" stroke="#c8c8c8" stroke-width="0.25">21MHz</text>
<text x="2242.11" y="1370.30" font-size="13" fill="#c8c8c8" text-anchor="middle" textLength="39.50" lengthAdjust="spacingAndGlyphs" stroke="#c8c8c8" stroke-width="0.25">24MHz</text>
<text x="2373.56" y="1370.30" font-size="13" fill="#c8c8c8" text-anchor="middle" textLength="39.50" lengthAdjust="spacingAndGlyphs" stroke="#c8c8c8" stroke-width="0.25">27MHz</text>
<text x="2505.00" y="1370.30" font-size="13" fill="#c8c8c8" text-anchor="middle" textLength="39.50" lengthAdjust="spacingAndGlyphs" stroke="#c8c8c8" stroke-width="0.25">30MHz</text>
<text x="1914.00" y="801.00" font-size="13.5" fill="#0f0" text-anchor="middle" textLength="45.70" lengthAdjust="spacingAndGlyphs" stroke="#0f0" stroke-width="0.35">V(n005)</text>
<path d="M1322.5 840.5 L1323.5 840.7 L1324.5 840.8 L1325.5 840.9 L1326.5 841.1 L1327.5 841.2 L1328.5 841.4 L1329.5 841.5 L1330.5 841.7 L1331.5 841.8 L1332.5 841.9 L1333.5 842.1 L1334.5 842.2 L1335.5 842.4 L1336.5 842.5 L1337.5 842.7 L1338.5 842.8 L1339.5 843.0 L1340.5 843.1 L1341.5 843.3 L1342.5 843.5 L1343.5 843.6 L1344.5 843.8 L1345.5 843.9 L1346.5 844.1 L1347.5 844.3 L1348.5 844.4 L1349.5 844.6 L1350.5 844.8 L1351.5 844.9 L1352.5 845.1 L1353.5 845.3 L1354.5 845.4 L1355.5 845.6 L1356.5 845.8 L1357.5 845.9 L1358.5 846.1 L1359.5 846.3 L1360.5 846.5 L1361.5 846.6 L1362.5 846.8 L1363.5 847.0 L1364.5 847.2 L1365.5 847.4 L1366.5 847.5 L1367.5 847.7 L1368.5 847.9 L1369.5 848.1 L1370.5 848.3 L1371.5 848.5 L1372.5 848.7 L1373.5 848.9 L1374.5 849.0 L1375.5 849.2 L1376.5 849.4 L1377.5 849.6 L1378.5 849.8 L1379.5 850.0 L1380.5 850.2 L1381.5 850.4 L1382.5 850.6 L1383.5 850.8 L1384.5 851.0 L1385.5 851.2 L1386.5 851.4 L1387.5 851.6 L1388.5 851.8 L1389.5 852.0 L1390.5 852.2 L1391.5 852.5 L1392.5 852.7 L1393.5 852.9 L1394.5 853.1 L1395.5 853.3 L1396.5 853.5 L1397.5 853.7 L1398.5 853.9 L1399.5 854.2 L1400.5 854.4 L1401.5 854.6 L1402.5 854.8 L1403.5 855.0 L1404.5 855.3 L1405.5 855.5 L1406.5 855.7 L1407.5 855.9 L1408.5 856.2 L1409.5 856.4 L1410.5 856.6 L1411.5 856.8 L1412.5 857.1 L1413.5 857.3 L1414.5 857.5 L1415.5 857.8 L1416.5 858.0 L1417.5 858.2 L1418.5 858.5 L1419.5 858.7 L1420.5 858.9 L1421.5 859.2 L1422.5 859.4 L1423.5 859.7 L1424.5 859.9 L1425.5 860.1 L1426.5 860.4 L1427.5 860.6 L1428.5 860.9 L1429.5 861.1 L1430.5 861.4 L1431.5 861.6 L1432.5 861.9 L1433.5 862.1 L1434.5 862.4 L1435.5 862.6 L1436.5 862.9 L1437.5 863.1 L1438.5 863.4 L1439.5 863.6 L1440.5 863.9 L1441.5 864.1 L1442.5 864.4 L1443.5 864.7 L1444.5 864.9 L1445.5 865.2 L1446.5 865.4 L1447.5 865.7 L1448.5 866.0 L1449.5 866.2 L1450.5 866.5 L1451.5 866.8 L1452.5 867.0 L1453.5 867.3 L1454.5 867.6 L1455.5 867.8 L1456.5 868.1 L1457.5 868.4 L1458.5 868.6 L1459.5 868.9 L1460.5 869.2 L1461.5 869.5 L1462.5 869.7 L1463.5 870.0 L1464.5 870.3 L1465.5 870.6 L1466.5 870.9 L1467.5 871.1 L1468.5 871.4 L1469.5 871.7 L1470.5 872.0 L1471.5 872.3 L1472.5 872.6 L1473.5 872.8 L1474.5 873.1 L1475.5 873.4 L1476.5 873.7 L1477.5 874.0 L1478.5 874.3 L1479.5 874.6 L1480.5 874.9 L1481.5 875.2 L1482.5 875.4 L1483.5 875.7 L1484.5 876.0 L1485.5 876.3 L1486.5 876.6 L1487.5 876.9 L1488.5 877.2 L1489.5 877.5 L1490.5 877.8 L1491.5 878.1 L1492.5 878.4 L1493.5 878.7 L1494.5 879.0 L1495.5 879.3 L1496.5 879.6 L1497.5 879.9 L1498.5 880.2 L1499.5 880.6 L1500.5 880.9 L1501.5 881.2 L1502.5 881.5 L1503.5 881.8 L1504.5 882.1 L1505.5 882.4 L1506.5 882.7 L1507.5 883.0 L1508.5 883.4 L1509.5 883.7 L1510.5 884.0 L1511.5 884.3 L1512.5 884.6 L1513.5 884.9 L1514.5 885.3 L1515.5 885.6 L1516.5 885.9 L1517.5 886.2 L1518.5 886.5 L1519.5 886.9 L1520.5 887.2 L1521.5 887.5 L1522.5 887.8 L1523.5 888.2 L1524.5 888.5 L1525.5 888.8 L1526.5 889.1 L1527.5 889.5 L1528.5 889.8 L1529.5 890.1 L1530.5 890.5 L1531.5 890.8 L1532.5 891.1 L1533.5 891.5 L1534.5 891.8 L1535.5 892.1 L1536.5 892.5 L1537.5 892.8 L1538.5 893.1 L1539.5 893.5 L1540.5 893.8 L1541.5 894.2 L1542.5 894.5 L1543.5 894.8 L1544.5 895.2 L1545.5 895.5 L1546.5 895.9 L1547.5 896.2 L1548.5 896.5 L1549.5 896.9 L1550.5 897.2 L1551.5 897.6 L1552.5 897.9 L1553.5 898.3 L1554.5 898.6 L1555.5 899.0 L1556.5 899.3 L1557.5 899.7 L1558.5 900.0 L1559.5 900.4 L1560.5 900.7 L1561.5 901.1 L1562.5 901.4 L1563.5 901.8 L1564.5 902.2 L1565.5 902.5 L1566.5 902.9 L1567.5 903.2 L1568.5 903.6 L1569.5 903.9 L1570.5 904.3 L1571.5 904.7 L1572.5 905.0 L1573.5 905.4 L1574.5 905.7 L1575.5 906.1 L1576.5 906.5 L1577.5 906.8 L1578.5 907.2 L1579.5 907.6 L1580.5 907.9 L1581.5 908.3 L1582.5 908.7 L1583.5 909.0 L1584.5 909.4 L1585.5 909.8 L1586.5 910.1 L1587.5 910.5 L1588.5 910.9 L1589.5 911.3 L1590.5 911.6 L1591.5 912.0 L1592.5 912.4 L1593.5 912.8 L1594.5 913.1 L1595.5 913.5 L1596.5 913.9 L1597.5 914.3 L1598.5 914.6 L1599.5 915.0 L1600.5 915.4 L1601.5 915.8 L1602.5 916.2 L1603.5 916.5 L1604.5 916.9 L1605.5 917.3 L1606.5 917.7 L1607.5 918.1 L1608.5 918.4 L1609.5 918.8 L1610.5 919.2 L1611.5 919.6 L1612.5 920.0 L1613.5 920.4 L1614.5 920.8 L1615.5 921.1 L1616.5 921.5 L1617.5 921.9 L1618.5 922.3 L1619.5 922.7 L1620.5 923.1 L1621.5 923.5 L1622.5 923.9 L1623.5 924.3 L1624.5 924.7 L1625.5 925.1 L1626.5 925.5 L1627.5 925.9 L1628.5 926.2 L1629.5 926.6 L1630.5 927.0 L1631.5 927.4 L1632.5 927.8 L1633.5 928.2 L1634.5 928.6 L1635.5 929.0 L1636.5 929.4 L1637.5 929.8 L1638.5 930.2 L1639.5 930.6 L1640.5 931.0 L1641.5 931.4 L1642.5 931.8 L1643.5 932.2 L1644.5 932.7 L1645.5 933.1 L1646.5 933.5 L1647.5 933.9 L1648.5 934.3 L1649.5 934.7 L1650.5 935.1 L1651.5 935.5 L1652.5 935.9 L1653.5 936.3 L1654.5 936.7 L1655.5 937.1 L1656.5 937.5 L1657.5 938.0 L1658.5 938.4 L1659.5 938.8 L1660.5 939.2 L1661.5 939.6 L1662.5 940.0 L1663.5 940.4 L1664.5 940.8 L1665.5 941.3 L1666.5 941.7 L1667.5 942.1 L1668.5 942.5 L1669.5 942.9 L1670.5 943.3 L1671.5 943.8 L1672.5 944.2 L1673.5 944.6 L1674.5 945.0 L1675.5 945.4 L1676.5 945.9 L1677.5 946.3 L1678.5 946.7 L1679.5 947.1 L1680.5 947.6 L1681.5 948.0 L1682.5 948.4 L1683.5 948.8 L1684.5 949.2 L1685.5 949.7 L1686.5 950.1 L1687.5 950.5 L1688.5 951.0 L1689.5 951.4 L1690.5 951.8 L1691.5 952.2 L1692.5 952.7 L1693.5 953.1 L1694.5 953.5 L1695.5 953.9 L1696.5 954.4 L1697.5 954.8 L1698.5 955.2 L1699.5 955.7 L1700.5 956.1 L1701.5 956.5 L1702.5 957.0 L1703.5 957.4 L1704.5 957.8 L1705.5 958.3 L1706.5 958.7 L1707.5 959.1 L1708.5 959.6 L1709.5 960.0 L1710.5 960.4 L1711.5 960.9 L1712.5 961.3 L1713.5 961.8 L1714.5 962.2 L1715.5 962.6 L1716.5 963.1 L1717.5 963.5 L1718.5 964.0 L1719.5 964.4 L1720.5 964.8 L1721.5 965.3 L1722.5 965.7 L1723.5 966.2 L1724.5 966.6 L1725.5 967.0 L1726.5 967.5 L1727.5 967.9 L1728.5 968.4 L1729.5 968.8 L1730.5 969.3 L1731.5 969.7 L1732.5 970.1 L1733.5 970.6 L1734.5 971.0 L1735.5 971.5 L1736.5 971.9 L1737.5 972.4 L1738.5 972.8 L1739.5 973.3 L1740.5 973.7 L1741.5 974.2 L1742.5 974.6 L1743.5 975.1 L1744.5 975.5 L1745.5 976.0 L1746.5 976.4 L1747.5 976.9 L1748.5 977.3 L1749.5 977.8 L1750.5 978.2 L1751.5 978.7 L1752.5 979.1 L1753.5 979.6 L1754.5 980.0 L1755.5 980.5 L1756.5 980.9 L1757.5 981.4 L1758.5 981.9 L1759.5 982.3 L1760.5 982.8 L1761.5 983.2 L1762.5 983.7 L1763.5 984.1 L1764.5 984.6 L1765.5 985.0 L1766.5 985.5 L1767.5 986.0 L1768.5 986.4 L1769.5 986.9 L1770.5 987.3 L1771.5 987.8 L1772.5 988.3 L1773.5 988.7 L1774.5 989.2 L1775.5 989.6 L1776.5 990.1 L1777.5 990.6 L1778.5 991.0 L1779.5 991.5 L1780.5 991.9 L1781.5 992.4 L1782.5 992.9 L1783.5 993.3 L1784.5 993.8 L1785.5 994.3 L1786.5 994.7 L1787.5 995.2 L1788.5 995.6 L1789.5 996.1 L1790.5 996.6 L1791.5 997.0 L1792.5 997.5 L1793.5 998.0 L1794.5 998.4 L1795.5 998.9 L1796.5 999.4 L1797.5 999.8 L1798.5 1000.3 L1799.5 1000.8 L1800.5 1001.2 L1801.5 1001.7 L1802.5 1002.2 L1803.5 1002.6 L1804.5 1003.1 L1805.5 1003.6 L1806.5 1004.1 L1807.5 1004.5 L1808.5 1005.0 L1809.5 1005.5 L1810.5 1005.9 L1811.5 1006.4 L1812.5 1006.9 L1813.5 1007.3 L1814.5 1007.8 L1815.5 1008.3 L1816.5 1008.8 L1817.5 1009.2 L1818.5 1009.7 L1819.5 1010.2 L1820.5 1010.7 L1821.5 1011.1 L1822.5 1011.6 L1823.5 1012.1 L1824.5 1012.6 L1825.5 1013.0 L1826.5 1013.5 L1827.5 1014.0 L1828.5 1014.4 L1829.5 1014.9 L1830.5 1015.4 L1831.5 1015.9 L1832.5 1016.4 L1833.5 1016.8 L1834.5 1017.3 L1835.5 1017.8 L1836.5 1018.3 L1837.5 1018.7 L1838.5 1019.2 L1839.5 1019.7 L1840.5 1020.2 L1841.5 1020.6 L1842.5 1021.1 L1843.5 1021.6 L1844.5 1022.1 L1845.5 1022.6 L1846.5 1023.0 L1847.5 1023.5 L1848.5 1024.0 L1849.5 1024.5 L1850.5 1025.0 L1851.5 1025.4 L1852.5 1025.9 L1853.5 1026.4 L1854.5 1026.9 L1855.5 1027.4 L1856.5 1027.8 L1857.5 1028.3 L1858.5 1028.8 L1859.5 1029.3 L1860.5 1029.8 L1861.5 1030.3 L1862.5 1030.7 L1863.5 1031.2 L1864.5 1031.7 L1865.5 1032.2 L1866.5 1032.7 L1867.5 1033.2 L1868.5 1033.6 L1869.5 1034.1 L1870.5 1034.6 L1871.5 1035.1 L1872.5 1035.6 L1873.5 1036.1 L1874.5 1036.5 L1875.5 1037.0 L1876.5 1037.5 L1877.5 1038.0 L1878.5 1038.5 L1879.5 1039.0 L1880.5 1039.5 L1881.5 1039.9 L1882.5 1040.4 L1883.5 1040.9 L1884.5 1041.4 L1885.5 1041.9 L1886.5 1042.4 L1887.5 1042.9 L1888.5 1043.3 L1889.5 1043.8 L1890.5 1044.3 L1891.5 1044.8 L1892.5 1045.3 L1893.5 1045.8 L1894.5 1046.3 L1895.5 1046.8 L1896.5 1047.2 L1897.5 1047.7 L1898.5 1048.2 L1899.5 1048.7 L1900.5 1049.2 L1901.5 1049.7 L1902.5 1050.2 L1903.5 1050.7 L1904.5 1051.2 L1905.5 1051.6 L1906.5 1052.1 L1907.5 1052.6 L1908.5 1053.1 L1909.5 1053.6 L1910.5 1054.1 L1911.5 1054.6 L1912.5 1055.1 L1913.5 1055.6 L1914.5 1056.1 L1915.5 1056.5 L1916.5 1057.0 L1917.5 1057.5 L1918.5 1058.0 L1919.5 1058.5 L1920.5 1059.0 L1921.5 1059.5 L1922.5 1060.0 L1923.5 1060.5 L1924.5 1061.0 L1925.5 1061.5 L1926.5 1061.9 L1927.5 1062.4 L1928.5 1062.9 L1929.5 1063.4 L1930.5 1063.9 L1931.5 1064.4 L1932.5 1064.9 L1933.5 1065.4 L1934.5 1065.9 L1935.5 1066.4 L1936.5 1066.9 L1937.5 1067.4 L1938.5 1067.9 L1939.5 1068.4 L1940.5 1068.8 L1941.5 1069.3 L1942.5 1069.8 L1943.5 1070.3 L1944.5 1070.8 L1945.5 1071.3 L1946.5 1071.8 L1947.5 1072.3 L1948.5 1072.8 L1949.5 1073.3 L1950.5 1073.8 L1951.5 1074.3 L1952.5 1074.8 L1953.5 1075.3 L1954.5 1075.8 L1955.5 1076.3 L1956.5 1076.8 L1957.5 1077.2 L1958.5 1077.7 L1959.5 1078.2 L1960.5 1078.7 L1961.5 1079.2 L1962.5 1079.7 L1963.5 1080.2 L1964.5 1080.7 L1965.5 1081.2 L1966.5 1081.7 L1967.5 1082.2 L1968.5 1082.7 L1969.5 1083.2 L1970.5 1083.7 L1971.5 1084.2 L1972.5 1084.7 L1973.5 1085.2 L1974.5 1085.7 L1975.5 1086.2 L1976.5 1086.7 L1977.5 1087.2 L1978.5 1087.7 L1979.5 1088.1 L1980.5 1088.6 L1981.5 1089.1 L1982.5 1089.6 L1983.5 1090.1 L1984.5 1090.6 L1985.5 1091.1 L1986.5 1091.6 L1987.5 1092.1 L1988.5 1092.6 L1989.5 1093.1 L1990.5 1093.6 L1991.5 1094.1 L1992.5 1094.6 L1993.5 1095.1 L1994.5 1095.6 L1995.5 1096.1 L1996.5 1096.6 L1997.5 1097.1 L1998.5 1097.6 L1999.5 1098.1 L2000.5 1098.6 L2001.5 1099.1 L2002.5 1099.6 L2003.5 1100.1 L2004.5 1100.6 L2005.5 1101.1 L2006.5 1101.6 L2007.5 1102.1 L2008.5 1102.6 L2009.5 1103.0 L2010.5 1103.5 L2011.5 1104.0 L2012.5 1104.5 L2013.5 1105.0 L2014.5 1105.5 L2015.5 1106.0 L2016.5 1106.5 L2017.5 1107.0 L2018.5 1107.5 L2019.5 1108.0 L2020.5 1108.5 L2021.5 1109.0 L2022.5 1109.5 L2023.5 1110.0 L2024.5 1110.5 L2025.5 1111.0 L2026.5 1111.5 L2027.5 1112.0 L2028.5 1112.5 L2029.5 1113.0 L2030.5 1113.5 L2031.5 1114.0 L2032.5 1114.5 L2033.5 1115.0 L2034.5 1115.5 L2035.5 1116.0 L2036.5 1116.5 L2037.5 1117.0 L2038.5 1117.5 L2039.5 1118.0 L2040.5 1118.5 L2041.5 1119.0 L2042.5 1119.5 L2043.5 1120.0 L2044.5 1120.4 L2045.5 1120.9 L2046.5 1121.4 L2047.5 1121.9 L2048.5 1122.4 L2049.5 1122.9 L2050.5 1123.4 L2051.5 1123.9 L2052.5 1124.4 L2053.5 1124.9 L2054.5 1125.4 L2055.5 1125.9 L2056.5 1126.4 L2057.5 1126.9 L2058.5 1127.4 L2059.5 1127.9 L2060.5 1128.4 L2061.5 1128.9 L2062.5 1129.4 L2063.5 1129.9 L2064.5 1130.4 L2065.5 1130.9 L2066.5 1131.4 L2067.5 1131.9 L2068.5 1132.4 L2069.5 1132.9 L2070.5 1133.4 L2071.5 1133.9 L2072.5 1134.4 L2073.5 1134.9 L2074.5 1135.4 L2075.5 1135.8 L2076.5 1136.3 L2077.5 1136.8 L2078.5 1137.3 L2079.5 1137.8 L2080.5 1138.3 L2081.5 1138.8 L2082.5 1139.3 L2083.5 1139.8 L2084.5 1140.3 L2085.5 1140.8 L2086.5 1141.3 L2087.5 1141.8 L2088.5 1142.3 L2089.5 1142.8 L2090.5 1143.3 L2091.5 1143.8 L2092.5 1144.3 L2093.5 1144.8 L2094.5 1145.3 L2095.5 1145.8 L2096.5 1146.3 L2097.5 1146.8 L2098.5 1147.2 L2099.5 1147.7 L2100.5 1148.2 L2101.5 1148.7 L2102.5 1149.2 L2103.5 1149.7 L2104.5 1150.2 L2105.5 1150.7 L2106.5 1151.2 L2107.5 1151.7 L2108.5 1152.2 L2109.5 1152.7 L2110.5 1153.2 L2111.5 1153.7 L2112.5 1154.2 L2113.5 1154.7 L2114.5 1155.2 L2115.5 1155.7 L2116.5 1156.2 L2117.5 1156.6 L2118.5 1157.1 L2119.5 1157.6 L2120.5 1158.1 L2121.5 1158.6 L2122.5 1159.1 L2123.5 1159.6 L2124.5 1160.1 L2125.5 1160.6 L2126.5 1161.1 L2127.5 1161.6 L2128.5 1162.1 L2129.5 1162.6 L2130.5 1163.1 L2131.5 1163.6 L2132.5 1164.0 L2133.5 1164.5 L2134.5 1165.0 L2135.5 1165.5 L2136.5 1166.0 L2137.5 1166.5 L2138.5 1167.0 L2139.5 1167.5 L2140.5 1168.0 L2141.5 1168.5 L2142.5 1169.0 L2143.5 1169.5 L2144.5 1170.0 L2145.5 1170.4 L2146.5 1170.9 L2147.5 1171.4 L2148.5 1171.9 L2149.5 1172.4 L2150.5 1172.9 L2151.5 1173.4 L2152.5 1173.9 L2153.5 1174.4 L2154.5 1174.9 L2155.5 1175.4 L2156.5 1175.9 L2157.5 1176.3 L2158.5 1176.8 L2159.5 1177.3 L2160.5 1177.8 L2161.5 1178.3 L2162.5 1178.8 L2163.5 1179.3 L2164.5 1179.8 L2165.5 1180.3 L2166.5 1180.8 L2167.5 1181.2 L2168.5 1181.7 L2169.5 1182.2 L2170.5 1182.7 L2171.5 1183.2 L2172.5 1183.7 L2173.5 1184.2 L2174.5 1184.7 L2175.5 1185.2 L2176.5 1185.7 L2177.5 1186.1 L2178.5 1186.6 L2179.5 1187.1 L2180.5 1187.6 L2181.5 1188.1 L2182.5 1188.6 L2183.5 1189.1 L2184.5 1189.6 L2185.5 1190.1 L2186.5 1190.5 L2187.5 1191.0 L2188.5 1191.5 L2189.5 1192.0 L2190.5 1192.5 L2191.5 1193.0 L2192.5 1193.5 L2193.5 1194.0 L2194.5 1194.4 L2195.5 1194.9 L2196.5 1195.4 L2197.5 1195.9 L2198.5 1196.4 L2199.5 1196.9 L2200.5 1197.4 L2201.5 1197.9 L2202.5 1198.3 L2203.5 1198.8 L2204.5 1199.3 L2205.5 1199.8 L2206.5 1200.3 L2207.5 1200.8 L2208.5 1201.3 L2209.5 1201.7 L2210.5 1202.2 L2211.5 1202.7 L2212.5 1203.2 L2213.5 1203.7 L2214.5 1204.2 L2215.5 1204.7 L2216.5 1205.1 L2217.5 1205.6 L2218.5 1206.1 L2219.5 1206.6 L2220.5 1207.1 L2221.5 1207.6 L2222.5 1208.0 L2223.5 1208.5 L2224.5 1209.0 L2225.5 1209.5 L2226.5 1210.0 L2227.5 1210.5 L2228.5 1211.0 L2229.5 1211.4 L2230.5 1211.9 L2231.5 1212.4 L2232.5 1212.9 L2233.5 1213.4 L2234.5 1213.9 L2235.5 1214.3 L2236.5 1214.8 L2237.5 1215.3 L2238.5 1215.8 L2239.5 1216.3 L2240.5 1216.7 L2241.5 1217.2 L2242.5 1217.7 L2243.5 1218.2 L2244.5 1218.7 L2245.5 1219.2 L2246.5 1219.6 L2247.5 1220.1 L2248.5 1220.6 L2249.5 1221.1 L2250.5 1221.6 L2251.5 1222.0 L2252.5 1222.5 L2253.5 1223.0 L2254.5 1223.5 L2255.5 1224.0 L2256.5 1224.5 L2257.5 1224.9 L2258.5 1225.4 L2259.5 1225.9 L2260.5 1226.4 L2261.5 1226.9 L2262.5 1227.3 L2263.5 1227.8 L2264.5 1228.3 L2265.5 1228.8 L2266.5 1229.3 L2267.5 1229.7 L2268.5 1230.2 L2269.5 1230.7 L2270.5 1231.2 L2271.5 1231.6 L2272.5 1232.1 L2273.5 1232.6 L2274.5 1233.1 L2275.5 1233.6 L2276.5 1234.0 L2277.5 1234.5 L2278.5 1235.0 L2279.5 1235.5 L2280.5 1236.0 L2281.5 1236.4 L2282.5 1236.9 L2283.5 1237.4 L2284.5 1237.9 L2285.5 1238.3 L2286.5 1238.8 L2287.5 1239.3 L2288.5 1239.8 L2289.5 1240.2 L2290.5 1240.7 L2291.5 1241.2 L2292.5 1241.7 L2293.5 1242.2 L2294.5 1242.6 L2295.5 1243.1 L2296.5 1243.6 L2297.5 1244.1 L2298.5 1244.5 L2299.5 1245.0 L2300.5 1245.5 L2301.5 1246.0 L2302.5 1246.4 L2303.5 1246.9 L2304.5 1247.4 L2305.5 1247.9 L2306.5 1248.3 L2307.5 1248.8 L2308.5 1249.3 L2309.5 1249.8 L2310.5 1250.2 L2311.5 1250.7 L2312.5 1251.2 L2313.5 1251.7 L2314.5 1252.1 L2315.5 1252.6 L2316.5 1253.1 L2317.5 1253.6 L2318.5 1254.0 L2319.5 1254.5 L2320.5 1255.0 L2321.5 1255.5 L2322.5 1255.9 L2323.5 1256.4 L2324.5 1256.9 L2325.5 1257.3 L2326.5 1257.8 L2327.5 1258.3 L2328.5 1258.8 L2329.5 1259.2 L2330.5 1259.7 L2331.5 1260.2 L2332.5 1260.7 L2333.5 1261.1 L2334.5 1261.6 L2335.5 1262.1 L2336.5 1262.5 L2337.5 1263.0 L2338.5 1263.5 L2339.5 1264.0 L2340.5 1264.4 L2341.5 1264.9 L2342.5 1265.4 L2343.5 1265.8 L2344.5 1266.3 L2345.5 1266.8 L2346.5 1267.3 L2347.5 1267.7 L2348.5 1268.2 L2349.5 1268.7 L2350.5 1269.1 L2351.5 1269.6 L2352.5 1270.1 L2353.5 1270.6 L2354.5 1271.0 L2355.5 1271.5 L2356.5 1272.0 L2357.5 1272.4 L2358.5 1272.9 L2359.5 1273.4 L2360.5 1273.8 L2361.5 1274.3 L2362.5 1274.8 L2363.5 1275.3 L2364.5 1275.7 L2365.5 1276.2 L2366.5 1276.7 L2367.5 1277.1 L2368.5 1277.6 L2369.5 1278.1 L2370.5 1278.5 L2371.5 1279.0 L2372.5 1279.5 L2373.5 1279.9 L2374.5 1280.4 L2375.5 1280.9 L2376.5 1281.3 L2377.5 1281.8 L2378.5 1282.3 L2379.5 1282.8 L2380.5 1283.2 L2381.5 1283.7 L2382.5 1284.2 L2383.5 1284.6 L2384.5 1285.1 L2385.5 1285.6 L2386.5 1286.0 L2387.5 1286.5 L2388.5 1287.0 L2389.5 1287.4 L2390.5 1287.9 L2391.5 1288.4 L2392.5 1288.8 L2393.5 1289.3 L2394.5 1289.8 L2395.5 1290.2 L2396.5 1290.7 L2397.5 1291.2 L2398.5 1291.6 L2399.5 1292.1 L2400.5 1292.6 L2401.5 1293.0 L2402.5 1293.5 L2403.5 1294.0 L2404.5 1294.4 L2405.5 1294.9 L2406.5 1295.4 L2407.5 1295.8 L2408.5 1296.3 L2409.5 1296.8 L2410.5 1297.2 L2411.5 1297.7 L2412.5 1298.2 L2413.5 1298.6 L2414.5 1299.1 L2415.5 1299.6 L2416.5 1300.0 L2417.5 1300.5 L2418.5 1301.0 L2419.5 1301.4 L2420.5 1301.9 L2421.5 1302.3 L2422.5 1302.8 L2423.5 1303.3 L2424.5 1303.7 L2425.5 1304.2 L2426.5 1304.7 L2427.5 1305.1 L2428.5 1305.6 L2429.5 1306.1 L2430.5 1306.5 L2431.5 1307.0 L2432.5 1307.5 L2433.5 1307.9 L2434.5 1308.4 L2435.5 1308.9 L2436.5 1309.3 L2437.5 1309.8 L2438.5 1310.2 L2439.5 1310.7 L2440.5 1311.2 L2441.5 1311.6 L2442.5 1312.1 L2443.5 1312.6 L2444.5 1313.0 L2445.5 1313.5 L2446.5 1314.0 L2447.5 1314.4 L2448.5 1314.9 L2449.5 1315.4 L2450.5 1315.8 L2451.5 1316.3 L2452.5 1316.7 L2453.5 1317.2 L2454.5 1317.7 L2455.5 1318.1 L2456.5 1318.6 L2457.5 1319.1 L2458.5 1319.5 L2459.5 1320.0 L2460.5 1320.5 L2461.5 1320.9 L2462.5 1321.4 L2463.5 1321.9 L2464.5 1322.3 L2465.5 1322.8 L2466.5 1323.2 L2467.5 1323.7 L2468.5 1324.2 L2469.5 1324.6 L2470.5 1325.1 L2471.5 1325.6 L2472.5 1326.0 L2473.5 1326.5 L2474.5 1327.0 L2475.5 1327.4 L2476.5 1327.9 L2477.5 1328.3 L2478.5 1328.8 L2479.5 1329.3 L2480.5 1329.7 L2481.5 1330.2 L2482.5 1330.7 L2483.5 1331.1 L2484.5 1331.6 L2485.5 1332.1 L2486.5 1332.5 L2487.5 1333.0 L2488.5 1333.4 L2489.5 1333.9 L2490.5 1334.4 L2491.5 1334.8 L2492.5 1335.3 L2493.5 1335.8 L2494.5 1336.2 L2495.5 1336.7 L2496.5 1337.2 L2497.5 1337.6 L2498.5 1338.1 L2499.5 1338.5 L2500.5 1339.0 L2501.5 1339.5 L2502.5 1339.9 L2503.5 1340.4 L2504.5 1340.9 L2505.5 1341.3" fill="none" stroke="#0f0" stroke-width="1" shape-rendering="crispEdges"/>
<g fill="#0f0" shape-rendering="crispEdges"><rect x="1322" y="822" width="1" height="1"/><rect x="1324" y="823" width="1" height="1"/><rect x="1326" y="825" width="1" height="1"/><rect x="1328" y="826" width="1" height="1"/><rect x="1330" y="828" width="1" height="1"/><rect x="1332" y="830" width="1" height="1"/><rect x="1334" y="831" width="1" height="1"/><rect x="1336" y="833" width="1" height="1"/><rect x="1338" y="834" width="1" height="1"/><rect x="1340" y="836" width="1" height="1"/><rect x="1342" y="837" width="1" height="1"/><rect x="1344" y="839" width="1" height="1"/><rect x="1346" y="840" width="1" height="1"/><rect x="1348" y="842" width="1" height="1"/><rect x="1350" y="844" width="1" height="1"/><rect x="1352" y="845" width="1" height="1"/><rect x="1354" y="847" width="1" height="1"/><rect x="1356" y="848" width="1" height="1"/><rect x="1358" y="850" width="1" height="1"/><rect x="1360" y="851" width="1" height="1"/><rect x="1362" y="853" width="1" height="1"/><rect x="1364" y="854" width="1" height="1"/><rect x="1366" y="856" width="1" height="1"/><rect x="1368" y="857" width="1" height="1"/><rect x="1370" y="859" width="1" height="1"/><rect x="1372" y="860" width="1" height="1"/><rect x="1374" y="862" width="1" height="1"/><rect x="1376" y="863" width="1" height="1"/><rect x="1378" y="865" width="1" height="1"/><rect x="1380" y="866" width="1" height="1"/><rect x="1382" y="867" width="1" height="1"/><rect x="1384" y="869" width="1" height="1"/><rect x="1386" y="870" width="1" height="1"/><rect x="1388" y="872" width="1" height="1"/><rect x="1390" y="873" width="1" height="1"/><rect x="1392" y="875" width="1" height="1"/><rect x="1394" y="876" width="1" height="1"/><rect x="1396" y="878" width="1" height="1"/><rect x="1398" y="879" width="1" height="1"/><rect x="1400" y="881" width="1" height="1"/><rect x="1402" y="882" width="1" height="1"/><rect x="1404" y="883" width="1" height="1"/><rect x="1406" y="885" width="1" height="1"/><rect x="1408" y="886" width="1" height="1"/><rect x="1410" y="888" width="1" height="1"/><rect x="1412" y="889" width="1" height="1"/><rect x="1414" y="891" width="1" height="1"/><rect x="1416" y="892" width="1" height="1"/><rect x="1418" y="893" width="1" height="1"/><rect x="1420" y="895" width="1" height="1"/><rect x="1422" y="896" width="1" height="1"/><rect x="1424" y="898" width="1" height="1"/><rect x="1426" y="899" width="1" height="1"/><rect x="1428" y="900" width="1" height="1"/><rect x="1430" y="902" width="1" height="1"/><rect x="1432" y="903" width="1" height="1"/><rect x="1434" y="904" width="1" height="1"/><rect x="1436" y="906" width="1" height="1"/><rect x="1438" y="907" width="1" height="1"/><rect x="1440" y="909" width="1" height="1"/><rect x="1442" y="910" width="1" height="1"/><rect x="1444" y="911" width="1" height="1"/><rect x="1446" y="913" width="1" height="1"/><rect x="1448" y="914" width="1" height="1"/><rect x="1450" y="915" width="1" height="1"/><rect x="1452" y="917" width="1" height="1"/><rect x="1454" y="918" width="1" height="1"/><rect x="1456" y="919" width="1" height="1"/><rect x="1458" y="921" width="1" height="1"/><rect x="1460" y="922" width="1" height="1"/><rect x="1462" y="923" width="1" height="1"/><rect x="1464" y="925" width="1" height="1"/><rect x="1466" y="926" width="1" height="1"/><rect x="1468" y="927" width="1" height="1"/><rect x="1470" y="929" width="1" height="1"/><rect x="1472" y="930" width="1" height="1"/><rect x="1474" y="931" width="1" height="1"/><rect x="1476" y="933" width="1" height="1"/><rect x="1478" y="934" width="1" height="1"/><rect x="1480" y="935" width="1" height="1"/><rect x="1482" y="936" width="1" height="1"/><rect x="1484" y="938" width="1" height="1"/><rect x="1486" y="939" width="1" height="1"/><rect x="1488" y="940" width="1" height="1"/><rect x="1490" y="942" width="1" height="1"/><rect x="1492" y="943" width="1" height="1"/><rect x="1494" y="944" width="1" height="1"/><rect x="1496" y="945" width="1" height="1"/><rect x="1498" y="947" width="1" height="1"/><rect x="1500" y="948" width="1" height="1"/><rect x="1502" y="949" width="1" height="1"/><rect x="1504" y="951" width="1" height="1"/><rect x="1506" y="952" width="1" height="1"/><rect x="1508" y="953" width="1" height="1"/><rect x="1510" y="954" width="1" height="1"/><rect x="1512" y="956" width="1" height="1"/><rect x="1514" y="957" width="1" height="1"/><rect x="1516" y="958" width="1" height="1"/><rect x="1518" y="959" width="1" height="1"/><rect x="1520" y="961" width="1" height="1"/><rect x="1522" y="962" width="1" height="1"/><rect x="1524" y="963" width="1" height="1"/><rect x="1526" y="964" width="1" height="1"/><rect x="1528" y="966" width="1" height="1"/><rect x="1530" y="967" width="1" height="1"/><rect x="1532" y="968" width="1" height="1"/><rect x="1534" y="969" width="1" height="1"/><rect x="1536" y="970" width="1" height="1"/><rect x="1538" y="972" width="1" height="1"/><rect x="1540" y="973" width="1" height="1"/><rect x="1542" y="974" width="1" height="1"/><rect x="1544" y="975" width="1" height="1"/><rect x="1546" y="977" width="1" height="1"/><rect x="1548" y="978" width="1" height="1"/><rect x="1550" y="979" width="1" height="1"/><rect x="1552" y="980" width="1" height="1"/><rect x="1554" y="981" width="1" height="1"/><rect x="1556" y="983" width="1" height="1"/><rect x="1558" y="984" width="1" height="1"/><rect x="1560" y="985" width="1" height="1"/><rect x="1562" y="986" width="1" height="1"/><rect x="1564" y="987" width="1" height="1"/><rect x="1566" y="989" width="1" height="1"/><rect x="1568" y="990" width="1" height="1"/><rect x="1570" y="991" width="1" height="1"/><rect x="1572" y="992" width="1" height="1"/><rect x="1574" y="993" width="1" height="1"/><rect x="1576" y="994" width="1" height="1"/><rect x="1578" y="996" width="1" height="1"/><rect x="1580" y="997" width="1" height="1"/><rect x="1582" y="998" width="1" height="1"/><rect x="1584" y="999" width="1" height="1"/><rect x="1586" y="1000" width="1" height="1"/><rect x="1588" y="1001" width="1" height="1"/><rect x="1590" y="1003" width="1" height="1"/><rect x="1592" y="1004" width="1" height="1"/><rect x="1594" y="1005" width="1" height="1"/><rect x="1596" y="1006" width="1" height="1"/><rect x="1598" y="1007" width="1" height="1"/><rect x="1600" y="1008" width="1" height="1"/><rect x="1602" y="1009" width="1" height="1"/><rect x="1604" y="1011" width="1" height="1"/><rect x="1606" y="1012" width="1" height="1"/><rect x="1608" y="1013" width="1" height="1"/><rect x="1610" y="1014" width="1" height="1"/><rect x="1612" y="1015" width="1" height="1"/><rect x="1614" y="1016" width="1" height="1"/><rect x="1616" y="1017" width="1" height="1"/><rect x="1618" y="1018" width="1" height="1"/><rect x="1620" y="1020" width="1" height="1"/><rect x="1622" y="1021" width="1" height="1"/><rect x="1624" y="1022" width="1" height="1"/><rect x="1626" y="1023" width="1" height="1"/><rect x="1628" y="1024" width="1" height="1"/><rect x="1630" y="1025" width="1" height="1"/><rect x="1632" y="1026" width="1" height="1"/><rect x="1634" y="1027" width="1" height="1"/><rect x="1636" y="1028" width="1" height="1"/><rect x="1638" y="1030" width="1" height="1"/><rect x="1640" y="1031" width="1" height="1"/><rect x="1642" y="1032" width="1" height="1"/><rect x="1644" y="1033" width="1" height="1"/><rect x="1646" y="1034" width="1" height="1"/><rect x="1648" y="1035" width="1" height="1"/><rect x="1650" y="1036" width="1" height="1"/><rect x="1652" y="1037" width="1" height="1"/><rect x="1654" y="1038" width="1" height="1"/><rect x="1656" y="1039" width="1" height="1"/><rect x="1658" y="1040" width="1" height="1"/><rect x="1660" y="1042" width="1" height="1"/><rect x="1662" y="1043" width="1" height="1"/><rect x="1664" y="1044" width="1" height="1"/><rect x="1666" y="1045" width="1" height="1"/><rect x="1668" y="1046" width="1" height="1"/><rect x="1670" y="1047" width="1" height="1"/><rect x="1672" y="1048" width="1" height="1"/><rect x="1674" y="1049" width="1" height="1"/><rect x="1676" y="1050" width="1" height="1"/><rect x="1678" y="1051" width="1" height="1"/><rect x="1680" y="1052" width="1" height="1"/><rect x="1682" y="1053" width="1" height="1"/><rect x="1684" y="1054" width="1" height="1"/><rect x="1686" y="1055" width="1" height="1"/><rect x="1688" y="1056" width="1" height="1"/><rect x="1690" y="1057" width="1" height="1"/><rect x="1692" y="1058" width="1" height="1"/><rect x="1694" y="1059" width="1" height="1"/><rect x="1696" y="1061" width="1" height="1"/><rect x="1698" y="1062" width="1" height="1"/><rect x="1700" y="1063" width="1" height="1"/><rect x="1702" y="1064" width="1" height="1"/><rect x="1704" y="1065" width="1" height="1"/><rect x="1706" y="1066" width="1" height="1"/><rect x="1708" y="1067" width="1" height="1"/><rect x="1710" y="1068" width="1" height="1"/><rect x="1712" y="1069" width="1" height="1"/><rect x="1714" y="1070" width="1" height="1"/><rect x="1716" y="1071" width="1" height="1"/><rect x="1718" y="1072" width="1" height="1"/><rect x="1720" y="1073" width="1" height="1"/><rect x="1722" y="1074" width="1" height="1"/><rect x="1724" y="1075" width="1" height="1"/><rect x="1726" y="1076" width="1" height="1"/><rect x="1728" y="1077" width="1" height="1"/><rect x="1730" y="1078" width="1" height="1"/><rect x="1732" y="1079" width="1" height="1"/><rect x="1734" y="1080" width="1" height="1"/><rect x="1736" y="1081" width="1" height="1"/><rect x="1738" y="1082" width="1" height="1"/><rect x="1740" y="1083" width="1" height="1"/><rect x="1742" y="1084" width="1" height="1"/><rect x="1744" y="1085" width="1" height="1"/><rect x="1746" y="1086" width="1" height="1"/><rect x="1748" y="1087" width="1" height="1"/><rect x="1750" y="1088" width="1" height="1"/><rect x="1752" y="1089" width="1" height="1"/><rect x="1754" y="1090" width="1" height="1"/><rect x="1756" y="1091" width="1" height="1"/><rect x="1758" y="1092" width="1" height="1"/><rect x="1760" y="1093" width="1" height="1"/><rect x="1762" y="1094" width="1" height="1"/><rect x="1764" y="1095" width="1" height="1"/><rect x="1766" y="1096" width="1" height="1"/><rect x="1768" y="1097" width="1" height="1"/><rect x="1770" y="1098" width="1" height="1"/><rect x="1772" y="1098" width="1" height="1"/><rect x="1774" y="1099" width="1" height="1"/><rect x="1776" y="1100" width="1" height="1"/><rect x="1778" y="1101" width="1" height="1"/><rect x="1780" y="1102" width="1" height="1"/><rect x="1782" y="1103" width="1" height="1"/><rect x="1784" y="1104" width="1" height="1"/><rect x="1786" y="1105" width="1" height="1"/><rect x="1788" y="1106" width="1" height="1"/><rect x="1790" y="1107" width="1" height="1"/><rect x="1792" y="1108" width="1" height="1"/><rect x="1794" y="1109" width="1" height="1"/><rect x="1796" y="1110" width="1" height="1"/><rect x="1798" y="1111" width="1" height="1"/><rect x="1800" y="1112" width="1" height="1"/><rect x="1802" y="1113" width="1" height="1"/><rect x="1804" y="1114" width="1" height="1"/><rect x="1806" y="1115" width="1" height="1"/><rect x="1808" y="1115" width="1" height="1"/><rect x="1810" y="1116" width="1" height="1"/><rect x="1812" y="1117" width="1" height="1"/><rect x="1814" y="1118" width="1" height="1"/><rect x="1816" y="1119" width="1" height="1"/><rect x="1818" y="1120" width="1" height="1"/><rect x="1820" y="1121" width="1" height="1"/><rect x="1822" y="1122" width="1" height="1"/><rect x="1824" y="1123" width="1" height="1"/><rect x="1826" y="1124" width="1" height="1"/><rect x="1828" y="1125" width="1" height="1"/><rect x="1830" y="1126" width="1" height="1"/><rect x="1832" y="1126" width="1" height="1"/><rect x="1834" y="1127" width="1" height="1"/><rect x="1836" y="1128" width="1" height="1"/><rect x="1838" y="1129" width="1" height="1"/><rect x="1840" y="1130" width="1" height="1"/><rect x="1842" y="1131" width="1" height="1"/><rect x="1844" y="1132" width="1" height="1"/><rect x="1846" y="1133" width="1" height="1"/><rect x="1848" y="1134" width="1" height="1"/><rect x="1850" y="1135" width="1" height="1"/><rect x="1852" y="1135" width="1" height="1"/><rect x="1854" y="1136" width="1" height="1"/><rect x="1856" y="1137" width="1" height="1"/><rect x="1858" y="1138" width="1" height="1"/><rect x="1860" y="1139" width="1" height="1"/><rect x="1862" y="1140" width="1" height="1"/><rect x="1864" y="1141" width="1" height="1"/><rect x="1866" y="1142" width="1" height="1"/><rect x="1868" y="1142" width="1" height="1"/><rect x="1870" y="1143" width="1" height="1"/><rect x="1872" y="1144" width="1" height="1"/><rect x="1874" y="1145" width="1" height="1"/><rect x="1876" y="1146" width="1" height="1"/><rect x="1878" y="1147" width="1" height="1"/><rect x="1880" y="1148" width="1" height="1"/><rect x="1882" y="1149" width="1" height="1"/><rect x="1884" y="1149" width="1" height="1"/><rect x="1886" y="1150" width="1" height="1"/><rect x="1888" y="1151" width="1" height="1"/><rect x="1890" y="1152" width="1" height="1"/><rect x="1892" y="1153" width="1" height="1"/><rect x="1894" y="1154" width="1" height="1"/><rect x="1896" y="1154" width="1" height="1"/><rect x="1898" y="1155" width="1" height="1"/><rect x="1900" y="1156" width="1" height="1"/><rect x="1902" y="1157" width="1" height="1"/><rect x="1904" y="1158" width="1" height="1"/><rect x="1906" y="1159" width="1" height="1"/><rect x="1908" y="1160" width="1" height="1"/><rect x="1910" y="1160" width="1" height="1"/><rect x="1912" y="1161" width="1" height="1"/><rect x="1914" y="1162" width="1" height="1"/><rect x="1916" y="1163" width="1" height="1"/><rect x="1918" y="1164" width="1" height="1"/><rect x="1920" y="1165" width="1" height="1"/><rect x="1922" y="1165" width="1" height="1"/><rect x="1924" y="1166" width="1" height="1"/><rect x="1926" y="1167" width="1" height="1"/><rect x="1928" y="1168" width="1" height="1"/><rect x="1930" y="1169" width="1" height="1"/><rect x="1932" y="1169" width="1" height="1"/><rect x="1934" y="1170" width="1" height="1"/><rect x="1936" y="1171" width="1" height="1"/><rect x="1938" y="1172" width="1" height="1"/><rect x="1940" y="1173" width="1" height="1"/><rect x="1942" y="1173" width="1" height="1"/><rect x="1944" y="1174" width="1" height="1"/><rect x="1946" y="1175" width="1" height="1"/><rect x="1948" y="1176" width="1" height="1"/><rect x="1950" y="1177" width="1" height="1"/><rect x="1952" y="1177" width="1" height="1"/><rect x="1954" y="1178" width="1" height="1"/><rect x="1956" y="1179" width="1" height="1"/><rect x="1958" y="1180" width="1" height="1"/><rect x="1960" y="1181" width="1" height="1"/><rect x="1962" y="1181" width="1" height="1"/><rect x="1964" y="1182" width="1" height="1"/><rect x="1966" y="1183" width="1" height="1"/><rect x="1968" y="1184" width="1" height="1"/><rect x="1970" y="1185" width="1" height="1"/><rect x="1972" y="1185" width="1" height="1"/><rect x="1974" y="1186" width="1" height="1"/><rect x="1976" y="1187" width="1" height="1"/><rect x="1978" y="1188" width="1" height="1"/><rect x="1980" y="1188" width="1" height="1"/><rect x="1982" y="1189" width="1" height="1"/><rect x="1984" y="1190" width="1" height="1"/><rect x="1986" y="1191" width="1" height="1"/><rect x="1988" y="1191" width="1" height="1"/><rect x="1990" y="1192" width="1" height="1"/><rect x="1992" y="1193" width="1" height="1"/><rect x="1994" y="1194" width="1" height="1"/><rect x="1996" y="1195" width="1" height="1"/><rect x="1998" y="1195" width="1" height="1"/><rect x="2000" y="1196" width="1" height="1"/><rect x="2002" y="1197" width="1" height="1"/><rect x="2004" y="1198" width="1" height="1"/><rect x="2006" y="1198" width="1" height="1"/><rect x="2008" y="1199" width="1" height="1"/><rect x="2010" y="1200" width="1" height="1"/><rect x="2012" y="1201" width="1" height="1"/><rect x="2014" y="1201" width="1" height="1"/><rect x="2016" y="1202" width="1" height="1"/><rect x="2018" y="1203" width="1" height="1"/><rect x="2020" y="1203" width="1" height="1"/><rect x="2022" y="1204" width="1" height="1"/><rect x="2024" y="1205" width="1" height="1"/><rect x="2026" y="1206" width="1" height="1"/><rect x="2028" y="1206" width="1" height="1"/><rect x="2030" y="1207" width="1" height="1"/><rect x="2032" y="1208" width="1" height="1"/><rect x="2034" y="1209" width="1" height="1"/><rect x="2036" y="1209" width="1" height="1"/><rect x="2038" y="1210" width="1" height="1"/><rect x="2040" y="1211" width="1" height="1"/><rect x="2042" y="1211" width="1" height="1"/><rect x="2044" y="1212" width="1" height="1"/><rect x="2046" y="1213" width="1" height="1"/><rect x="2048" y="1214" width="1" height="1"/><rect x="2050" y="1214" width="1" height="1"/><rect x="2052" y="1215" width="1" height="1"/><rect x="2054" y="1216" width="1" height="1"/><rect x="2056" y="1216" width="1" height="1"/><rect x="2058" y="1217" width="1" height="1"/><rect x="2060" y="1218" width="1" height="1"/><rect x="2062" y="1218" width="1" height="1"/><rect x="2064" y="1219" width="1" height="1"/><rect x="2066" y="1220" width="1" height="1"/><rect x="2068" y="1221" width="1" height="1"/><rect x="2070" y="1221" width="1" height="1"/><rect x="2072" y="1222" width="1" height="1"/><rect x="2074" y="1223" width="1" height="1"/><rect x="2076" y="1223" width="1" height="1"/><rect x="2078" y="1224" width="1" height="1"/><rect x="2080" y="1225" width="1" height="1"/><rect x="2082" y="1225" width="1" height="1"/><rect x="2084" y="1226" width="1" height="1"/><rect x="2086" y="1227" width="1" height="1"/><rect x="2088" y="1227" width="1" height="1"/><rect x="2090" y="1228" width="1" height="1"/><rect x="2092" y="1229" width="1" height="1"/><rect x="2094" y="1229" width="1" height="1"/><rect x="2096" y="1230" width="1" height="1"/><rect x="2098" y="1231" width="1" height="1"/><rect x="2100" y="1231" width="1" height="1"/><rect x="2102" y="1232" width="1" height="1"/><rect x="2104" y="1233" width="1" height="1"/><rect x="2106" y="1233" width="1" height="1"/><rect x="2108" y="1234" width="1" height="1"/><rect x="2110" y="1235" width="1" height="1"/><rect x="2112" y="1235" width="1" height="1"/><rect x="2114" y="1236" width="1" height="1"/><rect x="2116" y="1237" width="1" height="1"/><rect x="2118" y="1237" width="1" height="1"/><rect x="2120" y="1238" width="1" height="1"/><rect x="2122" y="1239" width="1" height="1"/><rect x="2124" y="1239" width="1" height="1"/><rect x="2126" y="1240" width="1" height="1"/><rect x="2128" y="1241" width="1" height="1"/><rect x="2130" y="1241" width="1" height="1"/><rect x="2132" y="1242" width="1" height="1"/><rect x="2134" y="1242" width="1" height="1"/><rect x="2136" y="1243" width="1" height="1"/><rect x="2138" y="1244" width="1" height="1"/><rect x="2140" y="1244" width="1" height="1"/><rect x="2142" y="1245" width="1" height="1"/><rect x="2144" y="1246" width="1" height="1"/><rect x="2146" y="1246" width="1" height="1"/><rect x="2148" y="1247" width="1" height="1"/><rect x="2150" y="1248" width="1" height="1"/><rect x="2152" y="1248" width="1" height="1"/><rect x="2154" y="1249" width="1" height="1"/><rect x="2156" y="1249" width="1" height="1"/><rect x="2158" y="1250" width="1" height="1"/><rect x="2160" y="1251" width="1" height="1"/><rect x="2162" y="1251" width="1" height="1"/><rect x="2164" y="1252" width="1" height="1"/><rect x="2166" y="1252" width="1" height="1"/><rect x="2168" y="1253" width="1" height="1"/><rect x="2170" y="1254" width="1" height="1"/><rect x="2172" y="1254" width="1" height="1"/><rect x="2174" y="1255" width="1" height="1"/><rect x="2176" y="1255" width="1" height="1"/><rect x="2178" y="1256" width="1" height="1"/><rect x="2180" y="1257" width="1" height="1"/><rect x="2182" y="1257" width="1" height="1"/><rect x="2184" y="1258" width="1" height="1"/><rect x="2186" y="1258" width="1" height="1"/><rect x="2188" y="1259" width="1" height="1"/><rect x="2190" y="1260" width="1" height="1"/><rect x="2192" y="1260" width="1" height="1"/><rect x="2194" y="1261" width="1" height="1"/><rect x="2196" y="1261" width="1" height="1"/><rect x="2198" y="1262" width="1" height="1"/><rect x="2200" y="1263" width="1" height="1"/><rect x="2202" y="1263" width="1" height="1"/><rect x="2204" y="1264" width="1" height="1"/><rect x="2206" y="1264" width="1" height="1"/><rect x="2208" y="1265" width="1" height="1"/><rect x="2210" y="1265" width="1" height="1"/><rect x="2212" y="1266" width="1" height="1"/><rect x="2214" y="1267" width="1" height="1"/><rect x="2216" y="1267" width="1" height="1"/><rect x="2218" y="1268" width="1" height="1"/><rect x="2220" y="1268" width="1" height="1"/><rect x="2222" y="1269" width="1" height="1"/><rect x="2224" y="1269" width="1" height="1"/><rect x="2226" y="1270" width="1" height="1"/><rect x="2228" y="1271" width="1" height="1"/><rect x="2230" y="1271" width="1" height="1"/><rect x="2232" y="1272" width="1" height="1"/><rect x="2234" y="1272" width="1" height="1"/><rect x="2236" y="1273" width="1" height="1"/><rect x="2238" y="1273" width="1" height="1"/><rect x="2240" y="1274" width="1" height="1"/><rect x="2242" y="1275" width="1" height="1"/><rect x="2244" y="1275" width="1" height="1"/><rect x="2246" y="1276" width="1" height="1"/><rect x="2248" y="1276" width="1" height="1"/><rect x="2250" y="1277" width="1" height="1"/><rect x="2252" y="1277" width="1" height="1"/><rect x="2254" y="1278" width="1" height="1"/><rect x="2256" y="1278" width="1" height="1"/><rect x="2258" y="1279" width="1" height="1"/><rect x="2260" y="1279" width="1" height="1"/><rect x="2262" y="1280" width="1" height="1"/><rect x="2264" y="1281" width="1" height="1"/><rect x="2266" y="1281" width="1" height="1"/><rect x="2268" y="1282" width="1" height="1"/><rect x="2270" y="1282" width="1" height="1"/><rect x="2272" y="1283" width="1" height="1"/><rect x="2274" y="1283" width="1" height="1"/><rect x="2276" y="1284" width="1" height="1"/><rect x="2278" y="1284" width="1" height="1"/><rect x="2280" y="1285" width="1" height="1"/><rect x="2282" y="1285" width="1" height="1"/><rect x="2284" y="1286" width="1" height="1"/><rect x="2286" y="1286" width="1" height="1"/><rect x="2288" y="1287" width="1" height="1"/><rect x="2290" y="1288" width="1" height="1"/><rect x="2292" y="1288" width="1" height="1"/><rect x="2294" y="1289" width="1" height="1"/><rect x="2296" y="1289" width="1" height="1"/><rect x="2298" y="1290" width="1" height="1"/><rect x="2300" y="1290" width="1" height="1"/><rect x="2302" y="1291" width="1" height="1"/><rect x="2304" y="1291" width="1" height="1"/><rect x="2306" y="1292" width="1" height="1"/><rect x="2308" y="1292" width="1" height="1"/><rect x="2310" y="1293" width="1" height="1"/><rect x="2312" y="1293" width="1" height="1"/><rect x="2314" y="1294" width="1" height="1"/><rect x="2316" y="1294" width="1" height="1"/><rect x="2318" y="1295" width="1" height="1"/><rect x="2320" y="1295" width="1" height="1"/><rect x="2322" y="1296" width="1" height="1"/><rect x="2324" y="1296" width="1" height="1"/><rect x="2326" y="1297" width="1" height="1"/><rect x="2328" y="1297" width="1" height="1"/><rect x="2330" y="1298" width="1" height="1"/><rect x="2332" y="1298" width="1" height="1"/><rect x="2334" y="1299" width="1" height="1"/><rect x="2336" y="1299" width="1" height="1"/><rect x="2338" y="1300" width="1" height="1"/><rect x="2340" y="1300" width="1" height="1"/><rect x="2342" y="1301" width="1" height="1"/><rect x="2344" y="1301" width="1" height="1"/><rect x="2346" y="1302" width="1" height="1"/><rect x="2348" y="1303" width="1" height="1"/><rect x="2350" y="1303" width="1" height="1"/><rect x="2352" y="1304" width="1" height="1"/><rect x="2354" y="1304" width="1" height="1"/><rect x="2356" y="1305" width="1" height="1"/><rect x="2358" y="1305" width="1" height="1"/><rect x="2360" y="1306" width="1" height="1"/><rect x="2362" y="1306" width="1" height="1"/><rect x="2364" y="1307" width="1" height="1"/><rect x="2366" y="1307" width="1" height="1"/><rect x="2368" y="1308" width="1" height="1"/><rect x="2370" y="1308" width="1" height="1"/><rect x="2372" y="1309" width="1" height="1"/><rect x="2374" y="1309" width="1" height="1"/><rect x="2376" y="1310" width="1" height="1"/><rect x="2378" y="1310" width="1" height="1"/><rect x="2380" y="1311" width="1" height="1"/><rect x="2382" y="1311" width="1" height="1"/><rect x="2384" y="1312" width="1" height="1"/><rect x="2386" y="1312" width="1" height="1"/><rect x="2388" y="1313" width="1" height="1"/><rect x="2390" y="1313" width="1" height="1"/><rect x="2392" y="1314" width="1" height="1"/><rect x="2394" y="1314" width="1" height="1"/><rect x="2396" y="1315" width="1" height="1"/><rect x="2398" y="1315" width="1" height="1"/><rect x="2400" y="1316" width="1" height="1"/><rect x="2402" y="1316" width="1" height="1"/><rect x="2404" y="1317" width="1" height="1"/><rect x="2406" y="1317" width="1" height="1"/><rect x="2408" y="1318" width="1" height="1"/><rect x="2410" y="1318" width="1" height="1"/><rect x="2412" y="1319" width="1" height="1"/><rect x="2414" y="1319" width="1" height="1"/><rect x="2416" y="1320" width="1" height="1"/><rect x="2418" y="1320" width="1" height="1"/><rect x="2420" y="1321" width="1" height="1"/><rect x="2422" y="1321" width="1" height="1"/><rect x="2424" y="1322" width="1" height="1"/><rect x="2426" y="1322" width="1" height="1"/><rect x="2428" y="1323" width="1" height="1"/><rect x="2430" y="1323" width="1" height="1"/><rect x="2432" y="1324" width="1" height="1"/><rect x="2434" y="1324" width="1" height="1"/><rect x="2436" y="1325" width="1" height="1"/><rect x="2438" y="1325" width="1" height="1"/><rect x="2440" y="1326" width="1" height="1"/><rect x="2442" y="1326" width="1" height="1"/><rect x="2444" y="1327" width="1" height="1"/><rect x="2446" y="1327" width="1" height="1"/><rect x="2448" y="1328" width="1" height="1"/><rect x="2450" y="1328" width="1" height="1"/><rect x="2452" y="1329" width="1" height="1"/><rect x="2454" y="1329" width="1" height="1"/><rect x="2456" y="1330" width="1" height="1"/><rect x="2458" y="1330" width="1" height="1"/><rect x="2460" y="1331" width="1" height="1"/><rect x="2462" y="1331" width="1" height="1"/><rect x="2464" y="1332" width="1" height="1"/><rect x="2466" y="1332" width="1" height="1"/><rect x="2468" y="1333" width="1" height="1"/><rect x="2470" y="1333" width="1" height="1"/><rect x="2472" y="1334" width="1" height="1"/><rect x="2474" y="1334" width="1" height="1"/><rect x="2476" y="1335" width="1" height="1"/><rect x="2478" y="1335" width="1" height="1"/><rect x="2480" y="1336" width="1" height="1"/><rect x="2482" y="1336" width="1" height="1"/><rect x="2484" y="1337" width="1" height="1"/><rect x="2486" y="1337" width="1" height="1"/><rect x="2488" y="1338" width="1" height="1"/><rect x="2490" y="1338" width="1" height="1"/><rect x="2492" y="1339" width="1" height="1"/><rect x="2494" y="1339" width="1" height="1"/><rect x="2496" y="1340" width="1" height="1"/><rect x="2498" y="1340" width="1" height="1"/><rect x="2500" y="1341" width="1" height="1"/><rect x="2502" y="1341" width="1" height="1"/><rect x="2504" y="1342" width="1" height="1"/></g>
<g fill="none" stroke-width="1" shape-rendering="crispEdges" stroke-linejoin="bevel">
<g stroke="#000080">
<path d="M1736.5 346.5 L1736.5 351.5 L1748.5 357.5 L1724.5 369.5 L1748.5 380.5 L1724.5 392.5 L1736.5 398.5 L1736.5 403.5"/>
<path d="M1736.5 611.5 L1736.5 617.5 L1748.5 623.5 L1724.5 634.5 L1748.5 646.5 L1724.5 657.5 L1736.5 663.5 L1736.5 669.5"/>
<path d="M1309.5 473.5 L1309.5 478.5"/>
<path d="M1309.5 525.5 L1309.5 530.5"/>
<path d="M1303.5 487.5 L1315.5 487.5"/>
<path d="M1309.5 481.5 L1309.5 493.5"/>
<path d="M1303.5 516.5 L1315.5 516.5"/>
<path d="M1678.5 438.5 L1698.5 438.5"/>
<path d="M1698.5 450.5 L1698.5 426.5"/>
<path d="M1704.5 450.5 L1704.5 426.5"/>
<path d="M1704.5 438.5 L1724.5 438.5"/>
<path d="M1898.5 415.5 L1898.5 461.5"/>
<path d="M1886.5 438.5 L1898.5 438.5"/>
<path d="M1898.5 426.5 L1932.5 403.5"/>
<path d="M1898.5 450.5 L1915.5 461.5"/>
<path d="M1932.5 473.5 L1918.5 458.5 L1912.5 464.5 L1932.5 473.5"/>
<path d="M1932.5 288.5 L1932.5 294.5 L1944.5 299.5 L1921.5 311.5 L1944.5 322.5 L1921.5 334.5 L1932.5 340.5 L1932.5 346.5"/>
<path d="M2059.5 380.5 L2079.5 380.5"/>
<path d="M2079.5 393.5 L2079.5 368.5"/>
<path d="M2085.5 393.5 L2085.5 368.5"/>
<path d="M2085.5 380.5 L2105.5 380.5"/>
<path d="M2151.5 380.5 L2157.5 380.5 L2163.5 369.5 L2175.5 392.5 L2186.5 369.5 L2198.5 392.5 L2203.5 380.5 L2209.5 380.5"/>
<path d="M2244.5 415.5 L2244.5 421.5 L2255.5 426.5 L2232.5 438.5 L2255.5 450.5 L2232.5 461.5 L2244.5 467.5 L2244.5 473.5"/>
<path d="M2140.5 426.5 L2140.5 432.5 L2151.5 438.5 L2128.5 450.5 L2151.5 461.5 L2128.5 473.5 L2140.5 478.5 L2140.5 484.5"/>
<path d="M2209.5 426.5 L2209.5 432.5 L2221.5 438.5 L2198.5 450.5 L2221.5 461.5 L2198.5 473.5 L2209.5 478.5 L2209.5 484.5"/>
<path d="M1932.5 519.5 L1932.5 525.5 L1944.5 530.5 L1921.5 542.5 L1944.5 553.5 L1921.5 565.5 L1932.5 571.5 L1932.5 577.5"/>
<path d="M1932.5 588.5 L1932.5 594.5 L1944.5 600.5 L1921.5 611.5 L1944.5 623.5 L1921.5 634.5 L1932.5 640.5 L1932.5 646.5"/>
<path d="M2013.5 588.5 L2013.5 608.5"/>
<path d="M2001.5 608.5 L2025.5 608.5"/>
<path d="M2001.5 614.5 L2025.5 614.5"/>
<path d="M2013.5 614.5 L2013.5 634.5"/>
<path d="M2013.5 253.5 L2013.5 273.5"/>
<path d="M2001.5 273.5 L2025.5 273.5"/>
<path d="M2001.5 279.5 L2025.5 279.5"/>
<path d="M2013.5 279.5 L2013.5 299.5"/>
<path d="M2036.5 230.5 L2042.5 230.5 L2048.5 219.5 L2059.5 242.5 L2071.5 219.5 L2082.5 242.5 L2088.5 230.5 L2094.5 230.5"/>
<path d="M2186.5 242.5 L2186.5 247.5"/>
<path d="M2186.5 294.5 L2186.5 299.5"/>
<path d="M2180.5 256.5 L2192.5 256.5"/>
<path d="M2186.5 250.5 L2186.5 262.5"/>
<path d="M2180.5 285.5 L2192.5 285.5"/>
</g>
<g stroke="#0000ff">
<path d="M1736.5 346.5 L1736.5 230.5 L2036.5 230.5"/>
<path d="M1736.5 403.5 L1736.5 611.5"/>
<path d="M1736.5 669.5 L1736.5 692.5 L2013.5 692.5 L2013.5 634.5"/>
<path d="M1851.5 692.5 L1851.5 704.5"/>
<path d="M1838.5 704.5 L1864.5 704.5 L1851.5 717.5 L1838.5 704.5"/>
<path d="M1309.5 473.5 L1309.5 438.5 L1678.5 438.5"/>
<path d="M1309.5 530.5 L1309.5 565.5"/>
<path d="M1296.5 565.5 L1322.5 565.5 L1309.5 578.5 L1296.5 565.5"/>
<path d="M1724.5 438.5 L1886.5 438.5"/>
<path d="M1932.5 230.5 L1932.5 288.5"/>
<path d="M1932.5 346.5 L1932.5 403.5"/>
<path d="M1932.5 380.5 L2059.5 380.5"/>
<path d="M2105.5 380.5 L2151.5 380.5"/>
<path d="M2209.5 380.5 L2244.5 380.5 L2244.5 415.5"/>
<path d="M2244.5 473.5 L2244.5 507.5"/>
<path d="M2231.5 507.5 L2257.5 507.5 L2244.5 520.5 L2231.5 507.5"/>
<path d="M2140.5 380.5 L2140.5 426.5"/>
<path d="M2127.5 484.5 L2153.5 484.5 L2140.5 497.5 L2127.5 484.5"/>
<path d="M2209.5 380.5 L2209.5 426.5"/>
<path d="M2196.5 484.5 L2222.5 484.5 L2209.5 497.5 L2196.5 484.5"/>
<path d="M1932.5 473.5 L1932.5 519.5"/>
<path d="M1932.5 577.5 L1932.5 588.5"/>
<path d="M1932.5 646.5 L1932.5 692.5"/>
<path d="M1932.5 588.5 L2013.5 588.5"/>
<path d="M2013.5 230.5 L2013.5 253.5"/>
<path d="M2000.5 299.5 L2026.5 299.5 L2013.5 312.5 L2000.5 299.5"/>
<path d="M2094.5 230.5 L2186.5 230.5 L2186.5 242.5"/>
<path d="M2173.5 299.5 L2199.5 299.5 L2186.5 312.5 L2173.5 299.5"/>
</g></g>
<circle cx="1309.5" cy="501.4" r="22.08" fill="none" stroke="#000080" stroke-width="1" shape-rendering="crispEdges"/>
<circle cx="2186.6" cy="270.4" r="22.08" fill="none" stroke="#000080" stroke-width="1" shape-rendering="crispEdges"/>
<rect x="1848" y="689" width="7" height="7" fill="#0000ff" shape-rendering="crispEdges"/>
<rect x="1733" y="435" width="7" height="7" fill="#0000ff" shape-rendering="crispEdges"/>
<rect x="1929" y="377" width="7" height="7" fill="#0000ff" shape-rendering="crispEdges"/>
<rect x="1929" y="227" width="7" height="7" fill="#0000ff" shape-rendering="crispEdges"/>
<rect x="2137" y="377" width="7" height="7" fill="#0000ff" shape-rendering="crispEdges"/>
<rect x="2206" y="377" width="7" height="7" fill="#0000ff" shape-rendering="crispEdges"/>
<rect x="1929" y="585" width="7" height="7" fill="#0000ff" shape-rendering="crispEdges"/>
<rect x="1929" y="689" width="7" height="7" fill="#0000ff" shape-rendering="crispEdges"/>
<rect x="2010" y="631" width="7" height="7" fill="#0000ff" shape-rendering="crispEdges"/>
<rect x="2010" y="227" width="7" height="7" fill="#0000ff" shape-rendering="crispEdges"/>
<text x="1307.70" y="434.94" font-size="16.2" fill="#000" text-anchor="middle" textLength="18.40" lengthAdjust="spacing">IN</text>
<text x="1325.90" y="478.87" font-size="16.2" fill="#000" textLength="19.40" lengthAdjust="spacingAndGlyphs">V3</text>
<text x="1325.90" y="536.71" font-size="16.2" fill="#000" textLength="206.70" lengthAdjust="spacing">SINE(0 0.0001 28000000)</text>
<text x="1325.90" y="556.52" font-size="16.2" fill="#000" textLength="34.60" lengthAdjust="spacingAndGlyphs">AC 1</text>
<text x="1721.20" y="367.29" font-size="16.2" fill="#000" text-anchor="end" textLength="20.70" lengthAdjust="spacingAndGlyphs">R2</text>
<text x="1719.90" y="393.01" font-size="16.2" fill="#000" text-anchor="end" textLength="38.00" lengthAdjust="spacing">5600</text>
<text x="1701.50" y="422.93" font-size="16.2" fill="#000" text-anchor="middle" textLength="10.00" lengthAdjust="spacingAndGlyphs">C</text>
<text x="1701.30" y="464.96" font-size="16.2" fill="#000" text-anchor="middle" textLength="37.80" lengthAdjust="spacing">100n</text>
<text x="1947.20" y="311.60" font-size="16.2" fill="#000" textLength="20.00" lengthAdjust="spacingAndGlyphs">R8</text>
<text x="1946.90" y="337.87" font-size="16.2" fill="#000" textLength="28.20" lengthAdjust="spacing">820</text>
<text x="1926.20" y="432.94" font-size="16.2" fill="#000" textLength="20.30" lengthAdjust="spacingAndGlyphs">Q1</text>
<text x="1926.20" y="458.85" font-size="16.2" fill="#000" textLength="81.80" lengthAdjust="spacing">PXT2222A</text>
<text x="2018.80" y="265.52" font-size="16.2" fill="#000" textLength="18.80" lengthAdjust="spacingAndGlyphs">C1</text>
<text x="2020.10" y="299.64" font-size="16.2" fill="#000" textLength="43.70" lengthAdjust="spacing">100nf</text>
<text x="2065.00" y="214.69" font-size="16.2" fill="#000" text-anchor="middle" textLength="20.90" lengthAdjust="spacing">R6</text>
<text x="2064.50" y="256.71" font-size="16.2" fill="#000" text-anchor="middle" textLength="27.00" lengthAdjust="spacingAndGlyphs">100</text>
<text x="2130.80" y="286.94" font-size="16.2" fill="#000" textLength="18.70" lengthAdjust="spacingAndGlyphs">V1</text>
<text x="2204.60" y="305.65" font-size="16.2" fill="#000" textLength="17.30" lengthAdjust="spacingAndGlyphs">15</text>
<text x="2081.00" y="364.59" font-size="16.2" fill="#000" text-anchor="middle" textLength="19.30" lengthAdjust="spacingAndGlyphs">C3</text>
<text x="2081.40" y="407.92" font-size="16.2" fill="#000" text-anchor="middle" textLength="37.00" lengthAdjust="spacing">100n</text>
<text x="2179.80" y="364.39" font-size="16.2" fill="#000" text-anchor="middle" textLength="20.00" lengthAdjust="spacingAndGlyphs">R7</text>
<text x="2179.90" y="407.72" font-size="16.2" fill="#000" text-anchor="middle" textLength="17.10" lengthAdjust="spacingAndGlyphs">18</text>
<text x="2176.90" y="427.43" font-size="16.2" fill="#000" textLength="28.00" lengthAdjust="spacing">270</text>
<g transform="translate(2227.10,421.93) rotate(-90)"><text x="0.00" y="0.00" font-size="16.2" fill="#000" textLength="28.20" lengthAdjust="spacingAndGlyphs">R10</text></g>
<text x="2154.10" y="450.15" font-size="16.2" fill="#000" textLength="20.40" lengthAdjust="spacingAndGlyphs">R9</text>
<text x="2154.10" y="475.97" font-size="16.2" fill="#000" textLength="27.80" lengthAdjust="spacing">270</text>
<text x="2257.80" y="438.54" font-size="16.2" fill="#000" textLength="19.70" lengthAdjust="spacingAndGlyphs">R5</text>
<text x="2257.80" y="464.96" font-size="16.2" fill="#000" textLength="18.30" lengthAdjust="spacing">50</text>
<text x="1947.10" y="542.61" font-size="16.2" fill="#000" textLength="20.10" lengthAdjust="spacingAndGlyphs">R4</text>
<text x="1947.10" y="568.63" font-size="16.2" fill="#000" textLength="17.60" lengthAdjust="spacingAndGlyphs">10</text>
<text x="1947.10" y="612.06" font-size="16.2" fill="#000" textLength="19.30" lengthAdjust="spacingAndGlyphs">R1</text>
<text x="1947.10" y="638.08" font-size="16.2" fill="#000" textLength="27.30" lengthAdjust="spacing">220</text>
<text x="2018.50" y="600.05" font-size="16.2" fill="#000" textLength="19.60" lengthAdjust="spacingAndGlyphs">C2</text>
<text x="2019.40" y="634.98" font-size="16.2" fill="#000" textLength="37.20" lengthAdjust="spacing">100n</text>
<text x="1750.60" y="634.78" font-size="16.2" fill="#000" textLength="20.60" lengthAdjust="spacingAndGlyphs">R3</text>
<text x="1750.60" y="661.09" font-size="16.2" fill="#000" textLength="37.40" lengthAdjust="spacing">1500</text>
<text x="2295.90" y="253.81" font-size="16.2" fill="#0000d8" textLength="236.40" lengthAdjust="spacing">.tran 0 2ms 1.5ms startup uic</text>
<text x="2295.90" y="294.44" font-size="16.2" fill="#000" textLength="161.00" lengthAdjust="spacing">.ac lin 100 3e6 30e6</text>
<text x="2295.90" y="328.96" font-size="16.2" fill="#000" textLength="178.80" lengthAdjust="spacing">.include PXT2222A.txt</text>
<text x="2053.80" y="554.22" font-size="16.2" fill="#0000d8" textLength="407.70" lengthAdjust="spacing">To limit gain with unknown next-stage impedance</text>
<g fill="none" stroke-width="1" shape-rendering="crispEdges" stroke-linejoin="bevel">
<g stroke="#000080">
<path d="M364.5 993.5 L364.5 997.5 L373.5 1002.5 L355.5 1011.5 L373.5 1020.5 L355.5 1029.5 L364.5 1034.5 L364.5 1039.5"/>
<path d="M364.5 1203.5 L364.5 1208.5 L373.5 1212.5 L355.5 1222.5 L373.5 1231.5 L355.5 1240.5 L364.5 1245.5 L364.5 1249.5"/>
<path d="M25.5 1093.5 L25.5 1098.5"/>
<path d="M25.5 1135.5 L25.5 1139.5"/>
<path d="M20.5 1105.5 L29.5 1105.5"/>
<path d="M25.5 1100.5 L25.5 1109.5"/>
<path d="M20.5 1128.5 L29.5 1128.5"/>
<path d="M318.5 1066.5 L334.5 1066.5"/>
<path d="M334.5 1076.5 L334.5 1056.5"/>
<path d="M339.5 1076.5 L339.5 1056.5"/>
<path d="M339.5 1066.5 L355.5 1066.5"/>
<path d="M492.5 1048.5 L492.5 1084.5"/>
<path d="M483.5 1066.5 L492.5 1066.5"/>
<path d="M492.5 1057.5 L520.5 1039.5"/>
<path d="M492.5 1075.5 L506.5 1084.5"/>
<path d="M520.5 1093.5 L508.5 1082.5 L504.5 1087.5 L520.5 1093.5"/>
<path d="M520.5 947.5 L520.5 952.5 L529.5 956.5 L511.5 965.5 L529.5 974.5 L511.5 984.5 L520.5 988.5 L520.5 993.5"/>
<path d="M621.5 1020.5 L637.5 1020.5"/>
<path d="M637.5 1030.5 L637.5 1010.5"/>
<path d="M641.5 1030.5 L641.5 1010.5"/>
<path d="M641.5 1020.5 L657.5 1020.5"/>
<path d="M694.5 1020.5 L699.5 1020.5 L703.5 1011.5 L712.5 1029.5 L722.5 1011.5 L731.5 1029.5 L735.5 1020.5 L740.5 1020.5"/>
<path d="M767.5 1048.5 L767.5 1052.5 L777.5 1057.5 L758.5 1066.5 L777.5 1075.5 L758.5 1084.5 L767.5 1089.5 L767.5 1093.5"/>
<path d="M685.5 1057.5 L685.5 1061.5 L694.5 1066.5 L676.5 1075.5 L694.5 1084.5 L676.5 1093.5 L685.5 1098.5 L685.5 1103.5"/>
<path d="M740.5 1057.5 L740.5 1061.5 L749.5 1066.5 L731.5 1075.5 L749.5 1084.5 L731.5 1093.5 L740.5 1098.5 L740.5 1103.5"/>
<path d="M520.5 1130.5 L520.5 1135.5 L529.5 1139.5 L511.5 1148.5 L529.5 1158.5 L511.5 1167.5 L520.5 1171.5 L520.5 1176.5"/>
<path d="M520.5 1185.5 L520.5 1190.5 L529.5 1194.5 L511.5 1203.5 L529.5 1212.5 L511.5 1222.5 L520.5 1226.5 L520.5 1231.5"/>
<path d="M584.5 1185.5 L584.5 1201.5"/>
<path d="M574.5 1201.5 L594.5 1201.5"/>
<path d="M574.5 1206.5 L594.5 1206.5"/>
<path d="M584.5 1206.5 L584.5 1222.5"/>
<path d="M584.5 920.5 L584.5 936.5"/>
<path d="M574.5 936.5 L594.5 936.5"/>
<path d="M574.5 940.5 L594.5 940.5"/>
<path d="M584.5 940.5 L584.5 956.5"/>
<path d="M602.5 901.5 L607.5 901.5 L612.5 892.5 L621.5 910.5 L630.5 892.5 L639.5 910.5 L644.5 901.5 L648.5 901.5"/>
<path d="M722.5 910.5 L722.5 915.5"/>
<path d="M722.5 952.5 L722.5 956.5"/>
<path d="M717.5 922.5 L726.5 922.5"/>
<path d="M722.5 917.5 L722.5 926.5"/>
<path d="M717.5 945.5 L726.5 945.5"/>
</g>
<g stroke="#0000ff">
<path d="M364.5 993.5 L364.5 901.5 L602.5 901.5"/>
<path d="M364.5 1039.5 L364.5 1203.5"/>
<path d="M364.5 1249.5 L364.5 1267.5 L584.5 1267.5 L584.5 1222.5"/>
<path d="M456.5 1267.5 L456.5 1277.5"/>
<path d="M446.5 1277.5 L466.5 1277.5 L456.5 1287.5 L446.5 1277.5"/>
<path d="M25.5 1093.5 L25.5 1066.5 L318.5 1066.5"/>
<path d="M25.5 1139.5 L25.5 1167.5"/>
<path d="M15.5 1167.5 L35.5 1167.5 L25.5 1177.5 L15.5 1167.5"/>
<path d="M355.5 1066.5 L483.5 1066.5"/>
<path d="M520.5 901.5 L520.5 947.5"/>
<path d="M520.5 993.5 L520.5 1039.5"/>
<path d="M520.5 1020.5 L621.5 1020.5"/>
<path d="M657.5 1020.5 L694.5 1020.5"/>
<path d="M740.5 1020.5 L767.5 1020.5 L767.5 1048.5"/>
<path d="M767.5 1093.5 L767.5 1121.5"/>
<path d="M757.5 1121.5 L777.5 1121.5 L767.5 1131.5 L757.5 1121.5"/>
<path d="M685.5 1020.5 L685.5 1057.5"/>
<path d="M675.5 1103.5 L695.5 1103.5 L685.5 1113.5 L675.5 1103.5"/>
<path d="M740.5 1020.5 L740.5 1057.5"/>
<path d="M730.5 1103.5 L750.5 1103.5 L740.5 1113.5 L730.5 1103.5"/>
<path d="M520.5 1093.5 L520.5 1130.5"/>
<path d="M520.5 1176.5 L520.5 1185.5"/>
<path d="M520.5 1231.5 L520.5 1267.5"/>
<path d="M520.5 1185.5 L584.5 1185.5"/>
<path d="M584.5 901.5 L584.5 920.5"/>
<path d="M574.5 956.5 L594.5 956.5 L584.5 966.5 L574.5 956.5"/>
<path d="M648.5 901.5 L722.5 901.5 L722.5 910.5"/>
<path d="M712.5 956.5 L732.5 956.5 L722.5 966.5 L712.5 956.5"/>
</g></g>
<circle cx="25.3" cy="1116.2" r="17.34" fill="none" stroke="#000080" stroke-width="1" shape-rendering="crispEdges"/>
<circle cx="722.1" cy="933.1" r="17.34" fill="none" stroke="#000080" stroke-width="1" shape-rendering="crispEdges"/>
<rect x="454" y="1265" width="5" height="5" fill="#0000ff" shape-rendering="crispEdges"/>
<rect x="362" y="1064" width="5" height="5" fill="#0000ff" shape-rendering="crispEdges"/>
<rect x="518" y="1018" width="5" height="5" fill="#0000ff" shape-rendering="crispEdges"/>
<rect x="518" y="899" width="5" height="5" fill="#0000ff" shape-rendering="crispEdges"/>
<rect x="683" y="1018" width="5" height="5" fill="#0000ff" shape-rendering="crispEdges"/>
<rect x="738" y="1018" width="5" height="5" fill="#0000ff" shape-rendering="crispEdges"/>
<rect x="518" y="1183" width="5" height="5" fill="#0000ff" shape-rendering="crispEdges"/>
<rect x="518" y="1265" width="5" height="5" fill="#0000ff" shape-rendering="crispEdges"/>
<rect x="582" y="1220" width="5" height="5" fill="#0000ff" shape-rendering="crispEdges"/>
<rect x="582" y="899" width="5" height="5" fill="#0000ff" shape-rendering="crispEdges"/>
<text x="23.76" y="1063.46" font-size="12.3" fill="#000" text-anchor="middle" textLength="14.83" lengthAdjust="spacing">IN</text>
<text x="38.22" y="1098.28" font-size="12.3" fill="#000" textLength="15.64" lengthAdjust="spacing">V3</text>
<text x="38.22" y="1144.13" font-size="12.3" fill="#000" textLength="166.60" lengthAdjust="spacing">SINE(0 0.0001 28000000)</text>
<text x="38.22" y="1159.84" font-size="12.3" fill="#000" textLength="27.89" lengthAdjust="spacing">AC 1</text>
<text x="352.24" y="1009.83" font-size="12.3" fill="#000" text-anchor="end" textLength="16.68" lengthAdjust="spacing">R2</text>
<text x="351.21" y="1030.22" font-size="12.3" fill="#000" text-anchor="end" textLength="30.63" lengthAdjust="spacing">5600</text>
<text x="336.59" y="1053.94" font-size="12.3" fill="#000" text-anchor="middle" textLength="8.06" lengthAdjust="spacingAndGlyphs">C</text>
<text x="336.43" y="1087.25" font-size="12.3" fill="#000" text-anchor="middle" textLength="30.47" lengthAdjust="spacing">100n</text>
<text x="531.78" y="965.68" font-size="12.3" fill="#000" textLength="16.12" lengthAdjust="spacing">R8</text>
<text x="531.54" y="986.51" font-size="12.3" fill="#000" textLength="22.73" lengthAdjust="spacing">820</text>
<text x="515.09" y="1061.87" font-size="12.3" fill="#000" textLength="16.36" lengthAdjust="spacingAndGlyphs">Q1</text>
<text x="515.09" y="1082.42" font-size="12.3" fill="#000" textLength="65.93" lengthAdjust="spacing">PZT2222A</text>
<text x="588.66" y="929.15" font-size="12.3" fill="#000" textLength="15.15" lengthAdjust="spacingAndGlyphs">C1</text>
<text x="589.69" y="956.20" font-size="12.3" fill="#000" textLength="35.22" lengthAdjust="spacing">100nf</text>
<text x="625.36" y="888.85" font-size="12.3" fill="#000" text-anchor="middle" textLength="16.85" lengthAdjust="spacing">R6</text>
<text x="624.96" y="922.17" font-size="12.3" fill="#000" text-anchor="middle" textLength="21.76" lengthAdjust="spacing">100</text>
<text x="677.63" y="946.13" font-size="12.3" fill="#000" textLength="15.07" lengthAdjust="spacing">V1</text>
<text x="736.26" y="960.96" font-size="12.3" fill="#000" textLength="13.94" lengthAdjust="spacing">15</text>
<text x="638.07" y="1007.69" font-size="12.3" fill="#000" text-anchor="middle" textLength="15.56" lengthAdjust="spacingAndGlyphs">C3</text>
<text x="638.39" y="1042.04" font-size="12.3" fill="#000" text-anchor="middle" textLength="29.82" lengthAdjust="spacing">100n</text>
<text x="716.55" y="1007.53" font-size="12.3" fill="#000" text-anchor="middle" textLength="16.12" lengthAdjust="spacing">R7</text>
<text x="716.63" y="1041.88" font-size="12.3" fill="#000" text-anchor="middle" textLength="13.78" lengthAdjust="spacing">18</text>
<text x="714.25" y="1057.51" font-size="12.3" fill="#000" textLength="22.57" lengthAdjust="spacing">270</text>
<g transform="translate(754.13,1053.27) rotate(-90)"><text x="0.00" y="0.00" font-size="12.3" fill="#000" textLength="24.32" lengthAdjust="spacing">R10</text></g>
<text x="696.14" y="1075.51" font-size="12.3" fill="#000" textLength="16.44" lengthAdjust="spacing">R9</text>
<text x="696.14" y="1095.98" font-size="12.3" fill="#000" textLength="22.41" lengthAdjust="spacing">270</text>
<text x="778.52" y="1066.31" font-size="12.3" fill="#000" textLength="15.88" lengthAdjust="spacing">R5</text>
<text x="778.52" y="1087.25" font-size="12.3" fill="#000" textLength="14.75" lengthAdjust="spacing">50</text>
<text x="531.70" y="1148.81" font-size="12.3" fill="#000" textLength="16.20" lengthAdjust="spacing">R4</text>
<text x="531.70" y="1169.44" font-size="12.3" fill="#000" textLength="14.19" lengthAdjust="spacing">10</text>
<text x="531.70" y="1203.87" font-size="12.3" fill="#000" textLength="15.56" lengthAdjust="spacingAndGlyphs">R1</text>
<text x="531.70" y="1224.49" font-size="12.3" fill="#000" textLength="22.00" lengthAdjust="spacing">220</text>
<text x="588.42" y="1194.35" font-size="12.3" fill="#000" textLength="15.80" lengthAdjust="spacing">C2</text>
<text x="589.13" y="1222.03" font-size="12.3" fill="#000" textLength="29.98" lengthAdjust="spacing">100n</text>
<text x="375.60" y="1221.88" font-size="12.3" fill="#000" textLength="16.60" lengthAdjust="spacing">R3</text>
<text x="375.60" y="1242.74" font-size="12.3" fill="#000" textLength="30.14" lengthAdjust="spacing">1500</text>
<text x="808.78" y="919.87" font-size="12.3" fill="#0000d8" textLength="190.54" lengthAdjust="spacing">.tran 0 2ms 1.5ms startup uic</text>
<text x="808.90" y="952.00" font-size="12.3" fill="#000" textLength="130.40" lengthAdjust="spacing">.ac lin 100 3e6 29e6</text>
<text x="808.90" y="984.00" font-size="12.3" fill="#000" textLength="143.10" lengthAdjust="spacing">.include PZT2222A.txt</text>
<text x="808.90" y="1025.30" font-size="12.3" fill="#0000d8" textLength="452.30" lengthAdjust="spacing">https:/ / assets.nexperia.com/ documents/ spice-model/ PZT2222A.txt</text>
<text x="616.40" y="1157.60" font-size="12.3" fill="#0000d8" textLength="328.60" lengthAdjust="spacing">To limit gain with unknown next-stage impedance</text>
</svg>
</body></html>
